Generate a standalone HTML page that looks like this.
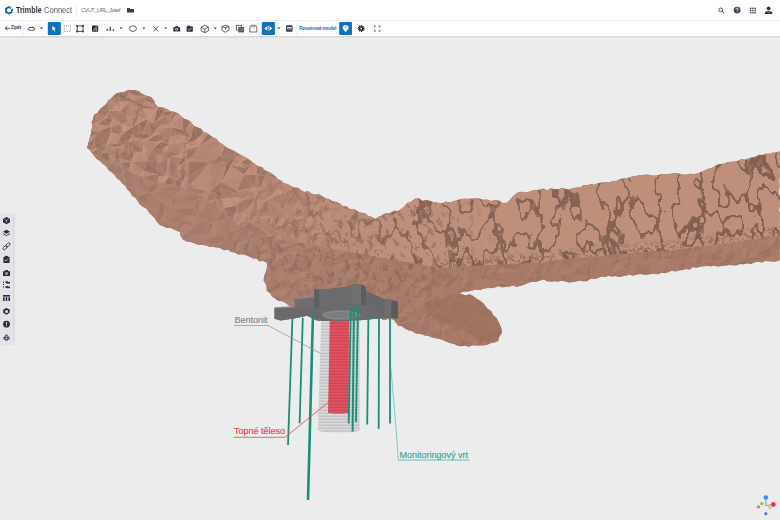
<!DOCTYPE html>
<html><head><meta charset="utf-8">
<style>
html,body{margin:0;padding:0;width:780px;height:520px;overflow:hidden;background:#ececec;font-family:"Liberation Sans",sans-serif;}
#hdr{position:absolute;left:0;top:0;width:780px;height:20px;background:#fff;}
#tb{position:absolute;left:0;top:20px;width:780px;height:16px;background:#fff;border-top:1px solid #f0f0f2;box-sizing:border-box;}
#shadow{position:absolute;left:0;top:36px;width:780px;height:2px;background:linear-gradient(#d4d4d6,#e6e6e6);}
.abs{position:absolute;}
.txt{position:absolute;white-space:nowrap;line-height:1;}
#side{position:absolute;left:0;top:214px;width:13px;height:130px;background:#e3e3e8;box-shadow:1px 0 2px rgba(0,0,0,0.12);}
svg{position:absolute;left:0;top:0;}
</style></head><body>
<div id="view" class="abs" style="left:0;top:0;width:780px;height:520px;">
<svg width="780" height="520" viewBox="0 0 780 520">
  <defs>
  <clipPath id="cSil"><polygon points="87.0,148.0 88.0,144.4 89.1,140.8 90.0,137.1 91.1,133.5 91.4,129.8 92.6,126.2 91.4,122.1 93.1,118.7 94.0,115.0 97.7,112.7 100.0,109.0 103.1,106.6 106.3,104.3 107.9,100.4 111.3,98.3 113.8,95.3 117.0,93.0 120.6,92.5 124.2,92.0 127.6,90.1 131.3,90.0 135.0,90.0 139.2,91.3 142.6,94.3 146.8,95.8 151.0,97.0 153.9,99.9 155.1,104.0 158.0,107.0 162.7,107.2 167.0,109.0 170.4,111.0 174.4,111.8 178.0,113.3 181.0,116.0 183.8,118.8 187.8,119.7 191.1,121.9 193.4,125.4 196.8,127.3 200.8,128.4 203.2,131.7 207.0,133.0 210.1,135.2 213.0,137.6 216.7,138.8 219.0,142.3 222.4,144.0 225.2,146.6 228.4,148.6 232.0,150.0 235.5,151.6 238.7,153.7 242.2,155.4 245.5,157.3 248.9,159.2 251.9,161.6 255.0,164.0 258.2,166.2 262.2,167.1 264.8,170.3 268.5,171.7 271.9,173.6 275.0,176.0 277.6,178.9 281.0,180.6 284.0,183.0 287.6,184.0 290.8,185.8 294.0,187.6 298.0,187.7 301.0,190.0 304.2,192.0 308.3,191.0 311.3,193.5 314.8,194.7 318.8,194.0 322.0,196.0 325.2,198.2 329.1,199.1 332.4,201.2 336.5,201.7 339.9,203.4 343.0,206.0 346.9,206.5 350.0,209.3 354.2,208.9 357.5,211.2 361.0,212.7 365.0,213.0 367.8,215.8 371.8,216.7 375.0,219.0 378.5,216.7 382.4,215.0 386.0,213.0 390.1,212.9 393.9,210.8 398.0,211.0 401.4,208.7 404.4,206.2 407.0,203.0 411.4,201.4 415.0,198.5 419.0,198.2 422.5,200.9 426.7,199.7 430.4,201.0 434.1,202.2 438.0,202.7 442.1,203.2 446.0,201.5 450.1,202.4 454.0,201.0 457.5,200.1 461.0,199.0 464.7,198.6 468.4,198.7 472.2,198.5 475.9,198.3 479.6,198.5 483.3,199.8 487.0,199.4 490.8,201.1 495.1,200.0 499.2,200.4 502.8,203.1 507.0,202.7 510.2,199.5 513.2,196.1 516.5,193.0 520.3,191.8 524.3,192.0 528.3,191.9 532.1,190.5 536.0,190.0 539.7,189.6 543.3,188.6 547.1,190.3 550.7,188.2 554.5,189.0 558.2,189.5 561.9,187.8 565.6,188.9 569.4,189.2 573.0,188.0 576.6,187.6 580.2,187.3 583.5,185.1 587.2,185.2 590.6,183.9 594.5,184.7 597.8,182.9 601.4,182.6 605.0,182.0 609.0,182.3 612.7,181.3 616.5,180.8 620.0,178.9 623.7,178.2 627.6,178.0 631.2,176.7 635.0,176.0 638.6,175.3 642.2,175.3 645.8,174.5 649.5,174.7 653.2,175.8 656.8,175.5 660.4,174.5 664.0,174.0 667.8,174.0 671.5,173.6 675.2,173.1 679.0,173.5 682.8,174.6 686.5,174.8 690.2,173.7 694.0,174.0 697.9,173.2 701.6,171.7 705.3,170.1 709.0,168.6 712.8,167.4 716.2,165.1 720.0,164.0 723.7,163.7 727.2,162.0 730.9,161.7 734.6,161.6 738.2,160.7 741.7,159.1 745.6,159.7 749.0,158.0 752.5,157.5 755.9,156.6 759.1,154.6 762.8,155.0 766.1,153.6 769.7,153.7 773.1,152.5 776.7,152.5 780.0,151.0 779.7,154.5 779.3,158.0 780.3,161.5 779.7,165.1 779.5,168.6 779.3,172.1 780.3,175.6 779.2,179.1 779.2,182.6 779.6,186.2 779.0,189.7 779.0,193.2 780.0,196.7 779.9,200.2 780.7,203.7 779.3,207.3 779.0,210.8 780.1,214.3 779.6,217.8 779.5,221.3 779.5,224.8 780.7,228.4 779.4,231.9 779.8,235.4 779.6,238.9 780.2,242.4 779.7,245.9 779.4,249.5 779.7,253.0 779.5,256.5 780.0,260.0 776.5,261.4 772.8,261.5 769.1,261.2 765.4,261.1 761.9,262.4 758.1,261.8 754.5,262.3 751.0,263.9 747.3,263.3 743.7,264.2 740.0,264.0 736.4,265.2 732.8,265.3 729.1,265.1 725.5,265.6 721.9,265.9 718.2,266.4 714.6,265.7 710.9,266.2 707.3,265.9 703.6,266.2 700.0,266.6 696.6,267.7 692.9,266.9 689.7,269.4 686.0,269.1 682.6,269.9 679.0,270.2 675.6,271.4 671.9,270.4 668.5,272.0 665.2,273.3 661.5,272.6 658.1,274.3 654.5,274.0 651.0,274.1 647.4,274.8 643.9,274.5 640.3,273.9 636.8,274.4 633.3,275.5 629.7,274.8 626.2,275.4 622.7,276.2 619.2,276.9 615.6,276.1 612.1,276.4 608.5,275.8 605.0,277.0 601.3,276.5 597.9,277.9 594.4,279.0 590.6,278.4 587.4,280.9 583.8,281.2 580.1,280.7 576.5,281.2 573.0,282.0 569.3,282.6 565.7,281.4 562.0,280.6 558.3,281.6 554.7,281.3 551.0,281.5 547.3,281.2 543.7,279.5 540.0,280.4 536.1,281.8 531.7,281.7 527.8,282.9 523.9,284.7 520.0,286.0 516.5,286.7 512.8,285.4 509.3,286.7 505.8,287.1 502.2,287.5 498.6,286.3 495.1,287.6 491.6,288.2 488.0,288.0 484.0,288.6 480.1,290.0 476.0,289.5 472.0,290.5 468.1,291.4 464.0,291.5 459.0,293.3 462.4,294.6 465.9,295.4 469.7,294.3 473.0,296.0 476.6,298.7 480.6,300.9 484.0,304.0 486.8,308.2 491.0,311.0 493.0,315.0 496.5,318.0 498.5,322.0 500.2,325.5 501.6,329.1 502.0,333.0 499.3,336.6 498.5,341.0 495.0,342.5 491.2,343.0 487.6,344.4 484.0,345.4 480.2,345.2 476.3,345.5 472.5,345.3 468.7,346.8 464.8,345.6 461.0,346.3 457.3,345.5 453.8,343.7 450.1,342.9 446.5,341.7 443.0,340.0 439.4,339.0 435.8,338.3 432.1,337.6 428.7,335.9 425.0,335.5 420.7,333.8 416.0,333.5 412.0,331.0 408.3,330.2 405.0,328.4 401.8,326.1 398.0,325.6 394.0,320.0 390.6,318.8 387.0,319.2 383.4,320.0 380.1,317.9 376.6,318.3 373.1,317.6 369.7,317.0 366.2,316.7 362.7,316.7 359.3,315.4 355.7,316.2 352.2,315.8 348.8,314.4 345.2,315.5 341.7,314.9 338.4,313.4 334.7,314.7 331.4,312.6 327.9,312.5 324.4,312.7 320.8,312.7 317.5,311.2 314.0,310.6 310.4,311.9 307.0,310.8 303.5,310.3 300.0,310.0 296.5,308.4 292.8,307.1 289.1,305.8 286.0,303.3 282.7,301.2 278.5,301.1 275.4,298.6 272.1,296.5 270.1,293.0 266.8,291.0 266.7,287.4 265.8,283.9 263.7,280.7 264.0,277.0 265.2,273.5 266.4,269.9 267.2,266.3 266.8,262.5 263.4,261.0 259.4,261.2 256.4,258.4 252.5,258.6 249.2,256.6 245.9,254.9 242.2,254.3 238.3,254.4 235.0,252.5 231.3,251.9 228.0,249.6 224.0,250.2 220.7,248.3 217.0,247.5 213.5,247.1 209.9,247.0 206.5,245.4 203.0,245.0 198.7,244.9 194.8,243.6 190.9,242.0 186.8,241.5 183.0,239.5 180.6,236.1 180.0,232.0 176.7,230.7 173.5,229.2 170.3,227.7 166.4,228.1 163.3,226.3 160.0,225.0 157.0,222.1 154.8,218.6 152.0,215.6 149.1,212.7 147.0,209.1 143.2,207.0 139.9,204.6 137.7,201.0 135.5,197.8 132.0,195.7 130.2,192.1 127.4,189.4 125.5,186.0 122.4,183.6 119.9,180.6 116.8,178.2 114.6,175.0 111.8,172.2 108.4,169.9 106.3,166.3 103.0,164.0 100.4,161.3 97.1,159.2 94.6,156.4 92.1,153.5 90.0,150.3"/></clipPath>
  <clipPath id="cTop"><polygon points="87,148 94,115 100,109 117,93 135,90 151,97 158,107 167,109 181,116 207,133 232,150 255,164 275,176 284,183 301,190 322,196 343,206 365,213 375,219 386,213 398,211 407,203 415,198.5 438,202.7 454,201 461,199 487,199.4 507,202.7 516.5,193 536,190 573,188 605,182 635,176 664,174 694,174 720,164 749,158 780,151 780,235 729,243 673,250 616,254.5 560,260 540,262.4 440,268 360,254 300,242.5 276,239 266,235.4 247,229.6 238,224 218.5,208.5 199,195 180,187.3 169,184 150,181 107,161"/></clipPath>
  <linearGradient id="gMask" x1="0" y1="0" x2="780" y2="0" gradientUnits="userSpaceOnUse">
    <stop offset="0.36" stop-color="#fff" stop-opacity="0.1"/>
    <stop offset="0.52" stop-color="#fff" stop-opacity="0.85"/>
    <stop offset="1" stop-color="#fff" stop-opacity="1"/>
  </linearGradient>
  <linearGradient id="gMaskL" x1="0" y1="0" x2="780" y2="0" gradientUnits="userSpaceOnUse">
    <stop offset="0.3" stop-color="#fff" stop-opacity="1"/>
    <stop offset="0.5" stop-color="#fff" stop-opacity="0"/>
  </linearGradient>
  <mask id="mRight"><rect x="0" y="0" width="780" height="520" fill="url(#gMask)"/></mask>
  <mask id="mLeft"><rect x="0" y="0" width="780" height="520" fill="url(#gMaskL)"/></mask>
  <pattern id="ribs" width="2.6" height="6" patternUnits="userSpaceOnUse" patternTransform="rotate(20)">
    <rect width="2.6" height="6" fill="#a27563"/>
    <rect width="1.1" height="6" fill="#8c6351"/>
  </pattern>
  <filter id="crev" x="0" y="0" width="1" height="1" color-interpolation-filters="sRGB">
    <feTurbulence type="fractalNoise" baseFrequency="0.05 0.03" numOctaves="3" seed="7" result="n"/>
    <feColorMatrix in="n" type="matrix" values="0 0 0 0 0  0 0 0 0 0  0 0 0 0 0  1 0 0 0 0" result="a"/>
    <feComponentTransfer in="a" result="lines">
      <feFuncA type="discrete" tableValues="0 0 0 0 0 0 0 0 0 0 0 0 0 0 0 0 0 0 0 0 0 0.6 0.85 0.85 0 0 0 0 0 0 0 0 0 0 0 0 0 0 0 0 0 0 0 0"/>
    </feComponentTransfer>
    <feFlood flood-color="#775649"/>
    <feComposite in2="lines" operator="in"/>
  </filter>
  <filter id="speck" x="0" y="0" width="1" height="1" color-interpolation-filters="sRGB">
    <feTurbulence type="fractalNoise" baseFrequency="0.16 0.11" numOctaves="3" seed="21" result="n"/>
    <feColorMatrix in="n" type="matrix" values="0 0 0 0 0  0 0 0 0 0  0 0 0 0 0  1 0 0 0 0" result="a"/>
    <feComponentTransfer in="a" result="sp">
      <feFuncA type="discrete" tableValues="0 0 0.5 0.4 0 0 0 0 0 0"/>
    </feComponentTransfer>
    <feFlood flood-color="#7b5b4e"/>
    <feComposite in2="sp" operator="in"/>
  </filter>
  <filter id="speck2" x="0" y="0" width="1" height="1" color-interpolation-filters="sRGB">
    <feTurbulence type="fractalNoise" baseFrequency="0.2 0.25" numOctaves="3" seed="31" result="n"/>
    <feColorMatrix in="n" type="matrix" values="0 0 0 0 0  0 0 0 0 0  0 0 0 0 0  1 0 0 0 0" result="a"/>
    <feComponentTransfer in="a" result="sp">
      <feFuncA type="discrete" tableValues="0 0 0 0.55 0.45 0 0 0 0 0"/>
    </feComponentTransfer>
    <feFlood flood-color="#775649"/>
    <feComposite in2="sp" operator="in"/>
  </filter>
  <radialGradient id="gSpeck" cx="360" cy="235" r="110" gradientUnits="userSpaceOnUse" gradientTransform="translate(360 235) scale(1.3 0.8) translate(-360 -235)">
    <stop offset="0" stop-color="#fff" stop-opacity="1"/>
    <stop offset="0.6" stop-color="#fff" stop-opacity="0.8"/>
    <stop offset="1" stop-color="#fff" stop-opacity="0"/>
  </radialGradient>
  <filter id="blur3"><feGaussianBlur stdDeviation="2.5"/></filter>
  <mask id="mRim"><polyline points="440,264 540,258 560,256 616,250.5 673,246 729,239 780,231" fill="none" stroke="#fff" stroke-width="9" filter="url(#blur3)"/></mask>
  <mask id="mSpeck"><rect x="0" y="0" width="780" height="520" fill="url(#gSpeck)"/></mask>
  <filter id="facet" x="0" y="0" width="1" height="1" color-interpolation-filters="sRGB">
    <feTurbulence type="fractalNoise" baseFrequency="0.05" numOctaves="2" seed="11" result="n"/>
    <feColorMatrix in="n" type="matrix" values="1 0 0 0 0  1 0 0 0 0  1 0 0 0 0  0 0 0 0 1"/>
    <feComponentTransfer>
      <feFuncR type="discrete" tableValues="0.62 0.62 0.64 0.69 0.74 0.78 0.8 0.8"/>
      <feFuncG type="discrete" tableValues="0.44 0.44 0.46 0.51 0.56 0.6 0.62 0.62"/>
      <feFuncB type="discrete" tableValues="0.36 0.36 0.38 0.43 0.47 0.51 0.53 0.53"/>
    </feComponentTransfer>
  </filter>
  <filter id="rough" x="-0.02" y="-0.05" width="1.04" height="1.1" color-interpolation-filters="sRGB">
    <feTurbulence type="turbulence" baseFrequency="0.25" numOctaves="2" seed="4" result="t"/>
    <feDisplacementMap in="SourceGraphic" in2="t" scale="3.5" xChannelSelector="R" yChannelSelector="G"/>
  </filter>
  <filter id="mesh" x="0" y="0" width="1" height="1" color-interpolation-filters="sRGB">
    <feTurbulence type="fractalNoise" baseFrequency="0.25 0.7" numOctaves="2" seed="3" result="n"/>
    <feColorMatrix in="n" type="matrix" values="1 0 0 0 0  1 0 0 0 0  1 0 0 0 0  0 0 0 0 1"/>
    <feComponentTransfer>
      <feFuncR type="linear" slope="0.5" intercept="0.4"/>
      <feFuncG type="linear" slope="0.4" intercept="0.28"/>
      <feFuncB type="linear" slope="0.35" intercept="0.23"/>
    </feComponentTransfer>
  </filter>
</defs>
  <!-- terrain silhouette -->
  <polygon fill="#a57865" points="87.0,148.0 88.0,144.4 89.1,140.8 90.0,137.1 91.1,133.5 91.4,129.8 92.6,126.2 91.4,122.1 93.1,118.7 94.0,115.0 97.7,112.7 100.0,109.0 103.1,106.6 106.3,104.3 107.9,100.4 111.3,98.3 113.8,95.3 117.0,93.0 120.6,92.5 124.2,92.0 127.6,90.1 131.3,90.0 135.0,90.0 139.2,91.3 142.6,94.3 146.8,95.8 151.0,97.0 153.9,99.9 155.1,104.0 158.0,107.0 162.7,107.2 167.0,109.0 170.4,111.0 174.4,111.8 178.0,113.3 181.0,116.0 183.8,118.8 187.8,119.7 191.1,121.9 193.4,125.4 196.8,127.3 200.8,128.4 203.2,131.7 207.0,133.0 210.1,135.2 213.0,137.6 216.7,138.8 219.0,142.3 222.4,144.0 225.2,146.6 228.4,148.6 232.0,150.0 235.5,151.6 238.7,153.7 242.2,155.4 245.5,157.3 248.9,159.2 251.9,161.6 255.0,164.0 258.2,166.2 262.2,167.1 264.8,170.3 268.5,171.7 271.9,173.6 275.0,176.0 277.6,178.9 281.0,180.6 284.0,183.0 287.6,184.0 290.8,185.8 294.0,187.6 298.0,187.7 301.0,190.0 304.2,192.0 308.3,191.0 311.3,193.5 314.8,194.7 318.8,194.0 322.0,196.0 325.2,198.2 329.1,199.1 332.4,201.2 336.5,201.7 339.9,203.4 343.0,206.0 346.9,206.5 350.0,209.3 354.2,208.9 357.5,211.2 361.0,212.7 365.0,213.0 367.8,215.8 371.8,216.7 375.0,219.0 378.5,216.7 382.4,215.0 386.0,213.0 390.1,212.9 393.9,210.8 398.0,211.0 401.4,208.7 404.4,206.2 407.0,203.0 411.4,201.4 415.0,198.5 419.0,198.2 422.5,200.9 426.7,199.7 430.4,201.0 434.1,202.2 438.0,202.7 442.1,203.2 446.0,201.5 450.1,202.4 454.0,201.0 457.5,200.1 461.0,199.0 464.7,198.6 468.4,198.7 472.2,198.5 475.9,198.3 479.6,198.5 483.3,199.8 487.0,199.4 490.8,201.1 495.1,200.0 499.2,200.4 502.8,203.1 507.0,202.7 510.2,199.5 513.2,196.1 516.5,193.0 520.3,191.8 524.3,192.0 528.3,191.9 532.1,190.5 536.0,190.0 539.7,189.6 543.3,188.6 547.1,190.3 550.7,188.2 554.5,189.0 558.2,189.5 561.9,187.8 565.6,188.9 569.4,189.2 573.0,188.0 576.6,187.6 580.2,187.3 583.5,185.1 587.2,185.2 590.6,183.9 594.5,184.7 597.8,182.9 601.4,182.6 605.0,182.0 609.0,182.3 612.7,181.3 616.5,180.8 620.0,178.9 623.7,178.2 627.6,178.0 631.2,176.7 635.0,176.0 638.6,175.3 642.2,175.3 645.8,174.5 649.5,174.7 653.2,175.8 656.8,175.5 660.4,174.5 664.0,174.0 667.8,174.0 671.5,173.6 675.2,173.1 679.0,173.5 682.8,174.6 686.5,174.8 690.2,173.7 694.0,174.0 697.9,173.2 701.6,171.7 705.3,170.1 709.0,168.6 712.8,167.4 716.2,165.1 720.0,164.0 723.7,163.7 727.2,162.0 730.9,161.7 734.6,161.6 738.2,160.7 741.7,159.1 745.6,159.7 749.0,158.0 752.5,157.5 755.9,156.6 759.1,154.6 762.8,155.0 766.1,153.6 769.7,153.7 773.1,152.5 776.7,152.5 780.0,151.0 779.7,154.5 779.3,158.0 780.3,161.5 779.7,165.1 779.5,168.6 779.3,172.1 780.3,175.6 779.2,179.1 779.2,182.6 779.6,186.2 779.0,189.7 779.0,193.2 780.0,196.7 779.9,200.2 780.7,203.7 779.3,207.3 779.0,210.8 780.1,214.3 779.6,217.8 779.5,221.3 779.5,224.8 780.7,228.4 779.4,231.9 779.8,235.4 779.6,238.9 780.2,242.4 779.7,245.9 779.4,249.5 779.7,253.0 779.5,256.5 780.0,260.0 776.5,261.4 772.8,261.5 769.1,261.2 765.4,261.1 761.9,262.4 758.1,261.8 754.5,262.3 751.0,263.9 747.3,263.3 743.7,264.2 740.0,264.0 736.4,265.2 732.8,265.3 729.1,265.1 725.5,265.6 721.9,265.9 718.2,266.4 714.6,265.7 710.9,266.2 707.3,265.9 703.6,266.2 700.0,266.6 696.6,267.7 692.9,266.9 689.7,269.4 686.0,269.1 682.6,269.9 679.0,270.2 675.6,271.4 671.9,270.4 668.5,272.0 665.2,273.3 661.5,272.6 658.1,274.3 654.5,274.0 651.0,274.1 647.4,274.8 643.9,274.5 640.3,273.9 636.8,274.4 633.3,275.5 629.7,274.8 626.2,275.4 622.7,276.2 619.2,276.9 615.6,276.1 612.1,276.4 608.5,275.8 605.0,277.0 601.3,276.5 597.9,277.9 594.4,279.0 590.6,278.4 587.4,280.9 583.8,281.2 580.1,280.7 576.5,281.2 573.0,282.0 569.3,282.6 565.7,281.4 562.0,280.6 558.3,281.6 554.7,281.3 551.0,281.5 547.3,281.2 543.7,279.5 540.0,280.4 536.1,281.8 531.7,281.7 527.8,282.9 523.9,284.7 520.0,286.0 516.5,286.7 512.8,285.4 509.3,286.7 505.8,287.1 502.2,287.5 498.6,286.3 495.1,287.6 491.6,288.2 488.0,288.0 484.0,288.6 480.1,290.0 476.0,289.5 472.0,290.5 468.1,291.4 464.0,291.5 459.0,293.3 462.4,294.6 465.9,295.4 469.7,294.3 473.0,296.0 476.6,298.7 480.6,300.9 484.0,304.0 486.8,308.2 491.0,311.0 493.0,315.0 496.5,318.0 498.5,322.0 500.2,325.5 501.6,329.1 502.0,333.0 499.3,336.6 498.5,341.0 495.0,342.5 491.2,343.0 487.6,344.4 484.0,345.4 480.2,345.2 476.3,345.5 472.5,345.3 468.7,346.8 464.8,345.6 461.0,346.3 457.3,345.5 453.8,343.7 450.1,342.9 446.5,341.7 443.0,340.0 439.4,339.0 435.8,338.3 432.1,337.6 428.7,335.9 425.0,335.5 420.7,333.8 416.0,333.5 412.0,331.0 408.3,330.2 405.0,328.4 401.8,326.1 398.0,325.6 394.0,320.0 390.6,318.8 387.0,319.2 383.4,320.0 380.1,317.9 376.6,318.3 373.1,317.6 369.7,317.0 366.2,316.7 362.7,316.7 359.3,315.4 355.7,316.2 352.2,315.8 348.8,314.4 345.2,315.5 341.7,314.9 338.4,313.4 334.7,314.7 331.4,312.6 327.9,312.5 324.4,312.7 320.8,312.7 317.5,311.2 314.0,310.6 310.4,311.9 307.0,310.8 303.5,310.3 300.0,310.0 296.5,308.4 292.8,307.1 289.1,305.8 286.0,303.3 282.7,301.2 278.5,301.1 275.4,298.6 272.1,296.5 270.1,293.0 266.8,291.0 266.7,287.4 265.8,283.9 263.7,280.7 264.0,277.0 265.2,273.5 266.4,269.9 267.2,266.3 266.8,262.5 263.4,261.0 259.4,261.2 256.4,258.4 252.5,258.6 249.2,256.6 245.9,254.9 242.2,254.3 238.3,254.4 235.0,252.5 231.3,251.9 228.0,249.6 224.0,250.2 220.7,248.3 217.0,247.5 213.5,247.1 209.9,247.0 206.5,245.4 203.0,245.0 198.7,244.9 194.8,243.6 190.9,242.0 186.8,241.5 183.0,239.5 180.6,236.1 180.0,232.0 176.7,230.7 173.5,229.2 170.3,227.7 166.4,228.1 163.3,226.3 160.0,225.0 157.0,222.1 154.8,218.6 152.0,215.6 149.1,212.7 147.0,209.1 143.2,207.0 139.9,204.6 137.7,201.0 135.5,197.8 132.0,195.7 130.2,192.1 127.4,189.4 125.5,186.0 122.4,183.6 119.9,180.6 116.8,178.2 114.6,175.0 111.8,172.2 108.4,169.9 106.3,166.3 103.0,164.0 100.4,161.3 97.1,159.2 94.6,156.4 92.1,153.5 90.0,150.3"/>
  <g clip-path="url(#cSil)" stroke="#c49c8a" stroke-width="0.3" stroke-opacity="0.4"><path d="M93,153L100,166L93,153z" fill="#a17869"/><path d="M778,256L781,252L779,261z" fill="#a17564"/><path d="M93,153L108,161L100,166z" fill="#a97e6e"/><path d="M746,267L761,260L779,261z" fill="#a77968"/><path d="M130,169L120,165L93,153z" fill="#ab7f6f"/><path d="M120,165L108,161L93,153z" fill="#a07768"/><path d="M127,168L120,165L130,169z" fill="#aa7e6e"/><path d="M714,269L698,271L702,263z" fill="#ab7c6a"/><path d="M714,269L746,267L698,271z" fill="#9a7060"/><path d="M771,257L778,256L779,261z" fill="#a77968"/><path d="M761,260L771,257L779,261z" fill="#ad7d6c"/><path d="M120,165L116,166L108,161z" fill="#a47a6a"/><path d="M204,197L188,189L171,180z" fill="#a87d6d"/><path d="M208,201L204,197L224,208z" fill="#ab7f6f"/><path d="M571,256L525,260L489,262z" fill="#ad7e6c"/><path d="M577,255L571,256L593,253z" fill="#9a7060"/><path d="M746,267L728,266L746,260z" fill="#9b7161"/><path d="M714,269L728,266L746,267z" fill="#ab7d6b"/><path d="M686,272L695,267L698,271z" fill="#a27665"/><path d="M620,250L598,254L593,253z" fill="#9a7060"/><path d="M498,338L500,337L492,344z" fill="#af7f6d"/><path d="M772,240L771,246L769,243z" fill="#ae7f6d"/><path d="M771,246L770,247L769,243z" fill="#ae7f6d"/><path d="M749,261L761,260L746,267z" fill="#a37766"/><path d="M749,261L757,257L761,260z" fill="#9e7262"/><path d="M749,261L746,267L746,260z" fill="#9a7060"/><path d="M778,236L776,234L783,235z" fill="#ab7c6b"/><path d="M776,234L778,236L772,240z" fill="#ae7f6d"/><path d="M781,252L778,236L783,235z" fill="#9c7262"/><path d="M771,246L778,236L781,252z" fill="#a17564"/><path d="M778,236L771,246L772,240z" fill="#ae7f6d"/><path d="M659,248L620,250L688,245z" fill="#ac7d6b"/><path d="M116,166L104,168L108,161z" fill="#aa7e6e"/><path d="M159,182L143,173L171,180z" fill="#ad8170"/><path d="M460,347L464,339L467,349z" fill="#9e7262"/><path d="M348,249L339,247L352,249z" fill="#ac7e6d"/><path d="M197,195L188,189L204,197z" fill="#a17869"/><path d="M208,201L204,199L204,197z" fill="#ac806f"/><path d="M537,265L525,260L541,260z" fill="#a67867"/><path d="M525,260L547,259L541,260z" fill="#a97a69"/><path d="M547,259L525,260L571,256z" fill="#aa7c6a"/><path d="M537,283L535,285L532,281z" fill="#a57867"/><path d="M535,285L537,283L558,284z" fill="#9a7060"/><path d="M520,281L535,285L514,290z" fill="#a67968"/><path d="M535,285L520,281L532,281z" fill="#a87a69"/><path d="M537,265L532,267L525,260z" fill="#a77a68"/><path d="M693,248L685,247L688,245z" fill="#aa7b6a"/><path d="M685,247L693,248L690,254z" fill="#9f7363"/><path d="M642,275L660,274L627,279z" fill="#af7f6d"/><path d="M686,263L695,267L686,272z" fill="#a97b69"/><path d="M606,280L615,280L596,282z" fill="#ab7c6b"/><path d="M615,280L606,280L613,280z" fill="#9a7060"/><path d="M771,257L771,248L778,256z" fill="#a67867"/><path d="M770,247L771,248L771,257z" fill="#9a7060"/><path d="M778,256L771,248L781,252z" fill="#a87a69"/><path d="M771,248L771,246L781,252z" fill="#9b7161"/><path d="M771,248L770,247L771,246z" fill="#9a7060"/><path d="M770,247L762,243L769,243z" fill="#a87a69"/><path d="M628,250L659,248L637,251z" fill="#ad7e6c"/><path d="M659,248L628,250L620,250z" fill="#ad7e6c"/><path d="M108,161L102,165L100,166z" fill="#9e7566"/><path d="M102,165L104,168L100,166z" fill="#ac806f"/><path d="M104,168L102,165L108,161z" fill="#b38574"/><path d="M124,173L127,168L130,169z" fill="#9e7566"/><path d="M143,173L139,178L130,169z" fill="#ae8271"/><path d="M156,223L178,232L180,241z" fill="#ad8070"/><path d="M288,237L267,238L248,227z" fill="#a97d6d"/><path d="M422,282L420,280L429,281z" fill="#9b7161"/><path d="M471,264L448,264L489,262z" fill="#a57867"/><path d="M419,336L444,342L467,349z" fill="#9a7060"/><path d="M444,342L460,347L467,349z" fill="#9a7060"/><path d="M453,295L446,307L441,299z" fill="#a77968"/><path d="M462,333L464,339L457,336z" fill="#a77968"/><path d="M473,348L480,347L489,345z" fill="#ab7c6b"/><path d="M525,260L508,262L489,262z" fill="#ab7c6b"/><path d="M511,285L513,271L518,278z" fill="#a37665"/><path d="M338,247L339,247L338,248z" fill="#a77b6b"/><path d="M339,247L338,247L312,241z" fill="#9c7364"/><path d="M170,182L159,182L171,180z" fill="#b08372"/><path d="M170,182L170,187L159,182z" fill="#ac8070"/><path d="M172,184L170,182L171,180z" fill="#a07768"/><path d="M170,182L172,184L170,187z" fill="#9f7667"/><path d="M188,195L197,195L195,197z" fill="#af8271"/><path d="M197,195L188,195L188,189z" fill="#aa7f6f"/><path d="M567,285L569,285L558,284z" fill="#aa7c6a"/><path d="M567,285L569,283L569,285z" fill="#a37766"/><path d="M577,255L572,256L571,256z" fill="#9a7060"/><path d="M591,257L577,255L593,253z" fill="#aa7b6a"/><path d="M598,254L591,257L593,253z" fill="#9c7161"/><path d="M560,261L547,259L571,256z" fill="#9f7363"/><path d="M542,262L537,265L541,260z" fill="#9a7060"/><path d="M547,259L542,262L541,260z" fill="#9a7060"/><path d="M509,286L511,285L514,290z" fill="#a47766"/><path d="M520,281L519,282L518,278z" fill="#a47766"/><path d="M519,282L511,285L518,278z" fill="#a47766"/><path d="M519,282L520,281L514,290z" fill="#ac7d6b"/><path d="M511,285L519,282L514,290z" fill="#aa7c6a"/><path d="M520,281L526,279L532,281z" fill="#9f7363"/><path d="M526,279L520,281L518,278z" fill="#a47766"/><path d="M720,241L706,245L688,245z" fill="#9a7060"/><path d="M714,252L704,248L706,245z" fill="#ad7d6c"/><path d="M720,241L714,252L706,245z" fill="#ae7e6c"/><path d="M728,266L736,253L746,260z" fill="#a87a69"/><path d="M697,266L696,258L702,263z" fill="#9f7463"/><path d="M698,271L697,266L702,263z" fill="#a17564"/><path d="M695,267L697,266L698,271z" fill="#a27665"/><path d="M706,245L699,246L688,245z" fill="#ab7c6b"/><path d="M699,246L693,248L688,245z" fill="#ac7d6b"/><path d="M704,248L699,246L706,245z" fill="#a97b69"/><path d="M699,246L696,252L693,248z" fill="#9e7363"/><path d="M686,263L695,261L695,267z" fill="#a67968"/><path d="M695,261L697,266L695,267z" fill="#a27665"/><path d="M697,266L695,261L696,258z" fill="#a37666"/><path d="M606,280L610,278L613,280z" fill="#ae7e6c"/><path d="M612,253L598,254L620,250z" fill="#ae7e6c"/><path d="M612,253L614,260L598,254z" fill="#a37666"/><path d="M764,241L772,240L769,243z" fill="#ae7e6c"/><path d="M762,243L764,241L769,243z" fill="#a97b6a"/><path d="M764,241L776,234L772,240z" fill="#ae7f6d"/><path d="M751,254L756,254L757,257z" fill="#ac7d6b"/><path d="M756,254L751,254L754,244z" fill="#a87a69"/><path d="M756,254L762,243L770,247z" fill="#a67867"/><path d="M757,257L756,254L761,260z" fill="#a17565"/><path d="M756,254L771,257L761,260z" fill="#a37666"/><path d="M756,254L770,247L771,257z" fill="#9d7262"/><path d="M638,256L635,254L637,251z" fill="#a47766"/><path d="M659,248L644,252L637,251z" fill="#ad7d6c"/><path d="M644,252L638,256L637,251z" fill="#a27665"/><path d="M104,168L116,182L100,166z" fill="#a57b6b"/><path d="M116,182L145,213L100,166z" fill="#a17869"/><path d="M116,182L135,199L145,213z" fill="#ab7f6f"/><path d="M135,199L116,182L123,187z" fill="#ab7f6f"/><path d="M122,173L124,173L123,187z" fill="#ac8070"/><path d="M116,182L122,173L123,187z" fill="#aa7e6e"/><path d="M143,185L139,178L143,173z" fill="#a37a6a"/><path d="M124,173L128,188L123,187z" fill="#ac806f"/><path d="M134,182L124,173L130,169z" fill="#a57a6b"/><path d="M139,178L134,182L130,169z" fill="#ac8070"/><path d="M134,182L128,188L124,173z" fill="#a57b6b"/><path d="M143,185L134,182L139,178z" fill="#a77d6d"/><path d="M143,185L150,186L145,187z" fill="#9e7566"/><path d="M159,182L150,186L143,173z" fill="#ad8170"/><path d="M150,186L143,185L143,173z" fill="#ae8171"/><path d="M170,187L159,190L159,182z" fill="#ad8171"/><path d="M175,227L172,223L185,220z" fill="#ad8170"/><path d="M148,215L156,223L145,213z" fill="#a47a6a"/><path d="M280,267L287,275L285,279z" fill="#aa7e6e"/><path d="M424,262L416,261L391,256z" fill="#9b7161"/><path d="M403,279L412,280L410,289z" fill="#aa7c6b"/><path d="M448,264L438,265L429,263z" fill="#a97b6a"/><path d="M450,341L451,334L457,336z" fill="#a67968"/><path d="M444,342L450,341L460,347z" fill="#a57867"/><path d="M437,339L444,342L419,336z" fill="#a77a69"/><path d="M437,339L443,333L444,342z" fill="#a67968"/><path d="M443,333L437,339L440,330z" fill="#9b7161"/><path d="M447,327L456,327L451,334z" fill="#a67867"/><path d="M451,334L458,331L457,336z" fill="#aa7b6a"/><path d="M456,327L458,331L451,334z" fill="#9d7262"/><path d="M458,331L462,333L457,336z" fill="#a57867"/><path d="M449,292L453,295L441,299z" fill="#a87a69"/><path d="M457,291L466,297L457,299z" fill="#a27665"/><path d="M466,297L457,291L464,287z" fill="#a27665"/><path d="M476,265L471,264L489,262z" fill="#a37666"/><path d="M485,265L476,265L489,262z" fill="#ad7e6c"/><path d="M476,265L485,265L484,275z" fill="#a87a69"/><path d="M477,276L476,265L484,275z" fill="#a77968"/><path d="M485,280L491,286L487,291z" fill="#ab7d6b"/><path d="M479,292L485,280L487,291z" fill="#a97b69"/><path d="M485,280L477,276L484,275z" fill="#9c7161"/><path d="M508,262L496,263L489,262z" fill="#9a7060"/><path d="M496,263L508,262L501,267z" fill="#9a7060"/><path d="M508,262L518,262L515,266z" fill="#a37666"/><path d="M518,262L508,262L525,260z" fill="#a87a69"/><path d="M504,283L513,271L511,285z" fill="#a67867"/><path d="M509,286L504,283L511,285z" fill="#9a7060"/><path d="M504,283L509,286L491,286z" fill="#9b7161"/><path d="M508,262L512,270L501,267z" fill="#9d7262"/><path d="M512,270L499,273L501,267z" fill="#ad7e6c"/><path d="M499,273L512,270L513,271z" fill="#ae7e6c"/><path d="M512,270L508,262L515,266z" fill="#9e7262"/><path d="M466,297L462,302L457,299z" fill="#ae7f6d"/><path d="M463,266L448,264L471,264z" fill="#9a7060"/><path d="M458,278L457,291L451,286z" fill="#aa7c6a"/><path d="M457,291L458,278L464,287z" fill="#a87a69"/><path d="M319,253L319,246L324,255z" fill="#a67a6a"/><path d="M321,266L319,253L324,255z" fill="#a27767"/><path d="M189,201L188,195L195,197z" fill="#a67c6c"/><path d="M160,200L174,196L171,206z" fill="#ad8070"/><path d="M172,223L174,214L185,220z" fill="#a67b6b"/><path d="M174,214L180,212L185,220z" fill="#aa7e6e"/><path d="M168,220L174,214L172,223z" fill="#a77c6c"/><path d="M180,208L174,214L171,206z" fill="#ac8070"/><path d="M174,214L180,208L180,212z" fill="#a27969"/><path d="M591,257L579,258L577,255z" fill="#ab7c6b"/><path d="M579,258L572,256L577,255z" fill="#aa7c6a"/><path d="M572,256L579,258L578,263z" fill="#aa7b6a"/><path d="M560,261L572,269L563,271z" fill="#a57867"/><path d="M572,269L571,272L563,271z" fill="#ad7d6c"/><path d="M572,269L560,261L571,256z" fill="#a17565"/><path d="M572,256L572,269L571,256z" fill="#9a7060"/><path d="M572,269L578,263L575,268z" fill="#ae7e6c"/><path d="M572,269L572,256L578,263z" fill="#a87a69"/><path d="M551,266L560,261L553,267z" fill="#9a7060"/><path d="M560,261L551,266L547,259z" fill="#a27665"/><path d="M526,279L536,277L532,281z" fill="#9a7060"/><path d="M536,277L537,283L532,281z" fill="#a47767"/><path d="M536,277L545,273L537,283z" fill="#9d7262"/><path d="M526,279L521,265L532,267z" fill="#a67968"/><path d="M532,267L521,265L525,260z" fill="#a67968"/><path d="M518,262L521,265L515,266z" fill="#9b7161"/><path d="M521,265L518,262L525,260z" fill="#9b7060"/><path d="M751,254L749,247L754,244z" fill="#a67867"/><path d="M748,257L749,261L746,260z" fill="#9a7060"/><path d="M732,240L720,241L738,238z" fill="#a77968"/><path d="M728,252L732,240L736,253z" fill="#a77a68"/><path d="M736,253L740,252L746,260z" fill="#a87a69"/><path d="M740,252L736,253L742,248z" fill="#9c7161"/><path d="M693,248L694,254L690,254z" fill="#a67867"/><path d="M696,252L694,254L693,248z" fill="#9f7363"/><path d="M694,254L696,252L696,258z" fill="#aa7b6a"/><path d="M703,251L699,246L704,248z" fill="#a47767"/><path d="M703,251L696,252L699,246z" fill="#a47767"/><path d="M696,252L703,251L696,258z" fill="#ab7c6a"/><path d="M696,258L703,251L702,263z" fill="#9f7463"/><path d="M703,251L709,260L702,263z" fill="#a77968"/><path d="M714,252L703,251L704,248z" fill="#aa7c6a"/><path d="M703,251L714,252L709,260z" fill="#a67968"/><path d="M651,264L650,270L644,265z" fill="#a27665"/><path d="M651,264L656,272L650,270z" fill="#aa7c6a"/><path d="M683,259L685,247L690,254z" fill="#9f7363"/><path d="M686,263L683,259L690,254z" fill="#a47766"/><path d="M682,271L686,263L686,272z" fill="#ac7d6b"/><path d="M613,277L610,278L612,272z" fill="#9c7161"/><path d="M610,278L613,277L613,280z" fill="#ab7d6b"/><path d="M613,277L615,280L613,280z" fill="#ac7d6b"/><path d="M613,277L617,279L615,280z" fill="#a77968"/><path d="M632,275L642,275L627,279z" fill="#9a7060"/><path d="M613,273L613,277L612,272z" fill="#a47766"/><path d="M613,277L613,273L617,279z" fill="#9f7463"/><path d="M626,273L623,278L622,268z" fill="#a57867"/><path d="M623,278L613,273L622,268z" fill="#a57867"/><path d="M613,273L623,278L617,279z" fill="#9f7463"/><path d="M615,280L623,278L627,279z" fill="#9a7060"/><path d="M617,279L623,278L615,280z" fill="#ad7e6c"/><path d="M616,258L612,253L620,250z" fill="#a47766"/><path d="M612,253L616,258L614,260z" fill="#a27665"/><path d="M614,260L616,264L612,272z" fill="#9a7060"/><path d="M616,264L613,273L612,272z" fill="#af7f6d"/><path d="M613,273L616,264L622,268z" fill="#af7f6d"/><path d="M764,241L754,237L776,234z" fill="#a17564"/><path d="M758,243L756,254L754,244z" fill="#a47766"/><path d="M756,254L758,243L762,243z" fill="#ac7d6b"/><path d="M758,243L764,241L762,243z" fill="#ac7d6c"/><path d="M628,250L628,256L620,250z" fill="#ad7e6c"/><path d="M655,251L644,252L659,248z" fill="#a67968"/><path d="M122,169L120,165L127,168z" fill="#a17869"/><path d="M124,173L122,169L127,168z" fill="#b38574"/><path d="M122,173L122,169L124,173z" fill="#b18373"/><path d="M114,174L122,173L116,182z" fill="#ae8171"/><path d="M114,174L104,168L116,166z" fill="#a3796a"/><path d="M114,174L116,182L104,168z" fill="#a67b6c"/><path d="M134,182L135,190L128,188z" fill="#aa7f6e"/><path d="M135,199L146,204L145,213z" fill="#ab7f6f"/><path d="M146,204L148,215L145,213z" fill="#a67b6c"/><path d="M146,204L147,197L160,200z" fill="#aa7e6e"/><path d="M156,185L150,186L159,182z" fill="#a17869"/><path d="M150,186L156,185L156,190z" fill="#9e7566"/><path d="M159,190L156,185L159,182z" fill="#ac806f"/><path d="M156,185L159,190L156,190z" fill="#a77c6d"/><path d="M147,197L154,194L160,200z" fill="#ab7f6f"/><path d="M204,209L204,199L208,201z" fill="#b08372"/><path d="M211,211L204,209L208,201z" fill="#a77c6c"/><path d="M185,224L175,227L185,220z" fill="#9e7566"/><path d="M175,227L185,224L178,232z" fill="#a77d6d"/><path d="M162,217L168,220L162,221z" fill="#b28473"/><path d="M156,223L162,217L162,221z" fill="#b08372"/><path d="M175,227L166,222L172,223z" fill="#ab7f6f"/><path d="M168,220L166,222L162,221z" fill="#b28473"/><path d="M166,222L168,220L172,223z" fill="#ac8070"/><path d="M166,222L175,227L178,232z" fill="#a87d6d"/><path d="M166,222L156,223L162,221z" fill="#b18473"/><path d="M166,222L178,232L156,223z" fill="#a77c6c"/><path d="M240,225L235,218L248,227z" fill="#ab7f6f"/><path d="M278,302L284,305L274,301z" fill="#ae8170"/><path d="M291,296L291,288L293,289z" fill="#a07667"/><path d="M291,288L291,296L282,298z" fill="#a67b6b"/><path d="M265,285L264,287L261,280z" fill="#9e7566"/><path d="M327,257L321,266L324,255z" fill="#aa7d6c"/><path d="M271,296L272,298L264,287z" fill="#9d7565"/><path d="M262,263L267,266L262,276z" fill="#a17768"/><path d="M233,245L235,252L227,253z" fill="#aa7e6e"/><path d="M236,236L232,237L232,236z" fill="#b18473"/><path d="M220,252L221,244L227,253z" fill="#a57b6b"/><path d="M221,244L233,245L227,253z" fill="#a57b6b"/><path d="M391,280L402,275L403,279z" fill="#a47867"/><path d="M378,263L391,261L387,280z" fill="#a87b6a"/><path d="M391,261L391,280L387,280z" fill="#a37867"/><path d="M402,275L391,261L403,268z" fill="#a37767"/><path d="M391,280L391,261L402,275z" fill="#a67969"/><path d="M403,268L403,265L406,271z" fill="#a47867"/><path d="M403,265L412,262L406,271z" fill="#ad7e6d"/><path d="M391,261L403,265L403,268z" fill="#9b7162"/><path d="M424,262L420,269L416,261z" fill="#a87a69"/><path d="M403,274L403,268L406,271z" fill="#a87b6a"/><path d="M403,274L402,275L403,268z" fill="#9b7162"/><path d="M402,275L403,274L403,279z" fill="#9b7162"/><path d="M412,280L403,274L406,271z" fill="#a07565"/><path d="M403,274L412,280L403,279z" fill="#ad7f6d"/><path d="M422,282L413,285L420,280z" fill="#9b7161"/><path d="M412,280L413,285L410,289z" fill="#a57868"/><path d="M442,268L438,265L448,264z" fill="#ad7e6c"/><path d="M438,265L442,268L440,269z" fill="#aa7c6b"/><path d="M442,268L448,264L449,265z" fill="#9a7060"/><path d="M430,270L438,265L440,269z" fill="#ab7d6b"/><path d="M438,265L430,270L429,263z" fill="#a97b6a"/><path d="M459,344L450,341L457,336z" fill="#a97b6a"/><path d="M450,341L459,344L460,347z" fill="#a07464"/><path d="M464,339L459,344L457,336z" fill="#a67968"/><path d="M459,344L464,339L460,347z" fill="#9c7161"/><path d="M456,311L456,321L447,316z" fill="#a37666"/><path d="M463,317L456,321L456,311z" fill="#a47766"/><path d="M456,321L463,317L463,326z" fill="#a57867"/><path d="M462,302L457,303L457,299z" fill="#ad7e6c"/><path d="M457,303L462,302L463,304z" fill="#a37666"/><path d="M445,331L447,327L451,334z" fill="#a47766"/><path d="M463,331L458,331L456,327z" fill="#9f7463"/><path d="M436,289L443,288L441,299z" fill="#ab7d6b"/><path d="M443,288L449,292L441,299z" fill="#a97b6a"/><path d="M449,292L443,288L451,286z" fill="#a97b6a"/><path d="M455,292L449,292L451,286z" fill="#a87a69"/><path d="M457,291L455,292L451,286z" fill="#a97b6a"/><path d="M449,292L455,292L453,295z" fill="#a87a69"/><path d="M455,292L457,291L457,299z" fill="#a67867"/><path d="M442,282L436,277L440,269z" fill="#9f7463"/><path d="M436,277L430,270L440,269z" fill="#a47867"/><path d="M441,283L436,277L442,282z" fill="#9f7464"/><path d="M423,287L422,282L429,281z" fill="#ae7f6d"/><path d="M413,285L419,290L410,289z" fill="#ad7e6d"/><path d="M419,290L413,285L422,282z" fill="#ac7e6c"/><path d="M423,287L419,290L422,282z" fill="#b0806e"/><path d="M434,295L436,289L441,299z" fill="#a97b6a"/><path d="M500,337L502,332L502,332z" fill="#ab7c6b"/><path d="M502,332L500,322L502,332z" fill="#a57867"/><path d="M502,332L496,331L500,322z" fill="#a67867"/><path d="M498,338L495,335L500,337z" fill="#9f7463"/><path d="M495,335L502,332L500,337z" fill="#a87a69"/><path d="M502,332L495,335L496,331z" fill="#a37665"/><path d="M496,331L495,335L493,328z" fill="#ab7c6b"/><path d="M490,324L495,322L493,328z" fill="#aa7b6a"/><path d="M494,316L491,306L500,318z" fill="#a87a69"/><path d="M495,322L494,316L500,318z" fill="#ab7c6b"/><path d="M500,322L500,322L500,318z" fill="#9a7060"/><path d="M500,322L495,322L500,318z" fill="#af7f6d"/><path d="M495,322L500,322L493,328z" fill="#ab7d6b"/><path d="M500,322L496,331L493,328z" fill="#ab7c6a"/><path d="M496,331L500,322L500,322z" fill="#9a7060"/><path d="M490,324L485,321L486,317z" fill="#a37666"/><path d="M463,317L470,321L463,326z" fill="#a27565"/><path d="M470,321L463,317L471,318z" fill="#9e7262"/><path d="M464,287L467,281L472,288z" fill="#9d7262"/><path d="M474,281L471,278L477,276z" fill="#a77a68"/><path d="M485,280L474,281L477,276z" fill="#a67968"/><path d="M467,281L474,281L472,288z" fill="#9d7262"/><path d="M474,281L467,281L471,278z" fill="#a67968"/><path d="M474,281L479,292L472,288z" fill="#ab7c6b"/><path d="M474,281L485,280L479,292z" fill="#aa7b6a"/><path d="M471,278L472,274L477,276z" fill="#a47766"/><path d="M472,274L476,265L477,276z" fill="#a37666"/><path d="M487,275L485,280L484,275z" fill="#9a7060"/><path d="M499,276L504,283L499,280z" fill="#9e7363"/><path d="M499,276L499,273L513,271z" fill="#a27665"/><path d="M504,283L499,276L513,271z" fill="#a77968"/><path d="M488,263L485,265L489,262z" fill="#af7f6d"/><path d="M485,265L488,270L484,275z" fill="#9d7262"/><path d="M488,263L488,270L485,265z" fill="#9d7262"/><path d="M492,269L495,271L488,274z" fill="#af7f6d"/><path d="M495,271L499,276L488,274z" fill="#a07564"/><path d="M499,276L495,271L499,273z" fill="#a17565"/><path d="M496,263L495,271L492,269z" fill="#ae7e6d"/><path d="M496,263L491,262L489,262z" fill="#9a7060"/><path d="M491,262L496,263L492,269z" fill="#ab7c6b"/><path d="M504,283L497,281L499,280z" fill="#ac7d6c"/><path d="M497,281L504,283L491,286z" fill="#ae7f6d"/><path d="M497,281L499,276L499,280z" fill="#9a7060"/><path d="M499,276L497,281L488,274z" fill="#a17565"/><path d="M497,281L487,275L488,274z" fill="#a27665"/><path d="M485,280L497,281L491,286z" fill="#ab7c6b"/><path d="M487,275L497,281L485,280z" fill="#a47766"/><path d="M479,292L472,288L472,288z" fill="#a87a69"/><path d="M471,293L472,288L479,292z" fill="#a97b69"/><path d="M448,264L461,267L449,265z" fill="#9a7060"/><path d="M463,266L461,267L448,264z" fill="#a67867"/><path d="M463,271L461,267L463,266z" fill="#a07464"/><path d="M454,277L458,278L451,286z" fill="#9a7060"/><path d="M454,277L442,268L449,265z" fill="#a57867"/><path d="M383,255L369,260L359,254z" fill="#a47868"/><path d="M376,260L383,255L378,263z" fill="#ac7e6d"/><path d="M383,255L376,260L369,260z" fill="#a77a6a"/><path d="M359,254L357,259L352,249z" fill="#a27767"/><path d="M339,254L335,251L338,248z" fill="#af8170"/><path d="M335,251L339,254L332,261z" fill="#ad806f"/><path d="M381,279L378,263L387,280z" fill="#a97b6b"/><path d="M381,279L379,279L378,263z" fill="#a17666"/><path d="M371,262L376,260L378,263z" fill="#ac7e6d"/><path d="M369,260L371,262L370,262z" fill="#a77a6a"/><path d="M376,260L371,262L369,260z" fill="#a87b6a"/><path d="M312,279L311,287L309,283z" fill="#ac7f6e"/><path d="M399,292L403,279L410,289z" fill="#aa7c6b"/><path d="M399,292L399,292L410,289z" fill="#ae7f6e"/><path d="M399,292L399,292L398,291z" fill="#9f7464"/><path d="M291,239L286,244L288,237z" fill="#a87c6c"/><path d="M312,241L291,239L288,237z" fill="#ac7f6e"/><path d="M286,244L290,246L285,247z" fill="#ac7f6e"/><path d="M285,247L290,246L286,253z" fill="#9d7465"/><path d="M291,239L290,246L286,244z" fill="#ab7f6e"/><path d="M290,246L291,239L295,244z" fill="#ac7f6e"/><path d="M290,246L295,244L298,247z" fill="#9d7465"/><path d="M303,249L298,247L312,241z" fill="#b28372"/><path d="M311,248L303,249L312,241z" fill="#b08271"/><path d="M319,246L314,246L312,241z" fill="#aa7d6d"/><path d="M314,246L311,248L312,241z" fill="#ad7f6f"/><path d="M338,247L330,248L312,241z" fill="#ad806f"/><path d="M330,248L319,246L312,241z" fill="#a37868"/><path d="M319,246L330,248L324,255z" fill="#ab7e6d"/><path d="M313,252L319,253L312,256z" fill="#b28372"/><path d="M314,246L313,252L311,248z" fill="#9d7364"/><path d="M319,253L313,252L319,246z" fill="#b18371"/><path d="M313,252L314,246L319,246z" fill="#9d7364"/><path d="M181,209L180,208L182,204z" fill="#b38574"/><path d="M180,208L181,209L180,212z" fill="#aa7e6e"/><path d="M181,203L174,196L188,195z" fill="#ac8070"/><path d="M181,203L189,201L182,204z" fill="#a87d6d"/><path d="M189,201L181,203L188,195z" fill="#a67b6b"/><path d="M174,196L181,189L188,195z" fill="#b18473"/><path d="M169,191L159,190L170,187z" fill="#a3796a"/><path d="M169,191L174,196L160,200z" fill="#aa7e6e"/><path d="M553,274L560,273L557,278z" fill="#a47766"/><path d="M557,278L559,281L558,284z" fill="#a77968"/><path d="M571,272L566,275L563,271z" fill="#ad7e6c"/><path d="M567,285L566,275L569,283z" fill="#a17564"/><path d="M561,278L566,275L567,285z" fill="#a07464"/><path d="M579,258L589,262L578,263z" fill="#a87a69"/><path d="M589,262L579,258L591,257z" fill="#a37766"/><path d="M586,283L589,283L569,285z" fill="#9a7060"/><path d="M575,279L578,274L586,283z" fill="#a97b6a"/><path d="M485,321L478,314L486,317z" fill="#a77968"/><path d="M478,314L482,309L486,317z" fill="#a17565"/><path d="M463,317L470,312L471,318z" fill="#a67867"/><path d="M470,312L478,314L471,318z" fill="#a57867"/><path d="M537,283L550,275L558,284z" fill="#a57867"/><path d="M545,273L550,275L537,283z" fill="#a67867"/><path d="M550,275L557,278L558,284z" fill="#a57867"/><path d="M550,275L553,274L557,278z" fill="#a57867"/><path d="M516,270L526,279L518,278z" fill="#a57867"/><path d="M516,270L521,265L526,279z" fill="#a57867"/><path d="M513,271L516,270L518,278z" fill="#a27665"/><path d="M521,265L516,270L515,266z" fill="#9a7060"/><path d="M516,270L512,270L515,266z" fill="#9c7161"/><path d="M512,270L516,270L513,271z" fill="#ad7d6c"/><path d="M746,252L740,252L742,248z" fill="#af7f6d"/><path d="M749,258L751,254L757,257z" fill="#ae7e6c"/><path d="M749,258L748,257L751,254z" fill="#af7f6d"/><path d="M749,261L749,258L757,257z" fill="#a07464"/><path d="M748,257L749,258L749,261z" fill="#a77968"/><path d="M726,244L728,252L724,250z" fill="#ac7d6b"/><path d="M728,252L726,244L732,240z" fill="#ac7d6b"/><path d="M736,253L742,246L742,248z" fill="#9a7060"/><path d="M732,240L742,246L736,253z" fill="#aa7c6a"/><path d="M742,246L732,240L738,238z" fill="#ac7d6b"/><path d="M718,264L728,266L714,269z" fill="#a67968"/><path d="M720,256L714,252L724,250z" fill="#9f7363"/><path d="M714,252L720,256L709,260z" fill="#9e7362"/><path d="M720,256L719,261L709,260z" fill="#9b7161"/><path d="M695,261L695,259L696,258z" fill="#ae7e6d"/><path d="M695,259L694,254L696,258z" fill="#a67968"/><path d="M694,254L695,259L690,254z" fill="#a67867"/><path d="M695,259L686,263L690,254z" fill="#a77968"/><path d="M695,259L695,261L686,263z" fill="#af7f6d"/><path d="M650,270L656,272L642,275z" fill="#a27665"/><path d="M656,272L656,272L650,270z" fill="#9a7060"/><path d="M642,275L656,272L660,274z" fill="#ad7e6c"/><path d="M656,272L656,272L660,274z" fill="#9a7060"/><path d="M644,252L644,262L638,256z" fill="#a67968"/><path d="M644,263L644,262L644,265z" fill="#a77968"/><path d="M644,262L651,264L644,265z" fill="#ab7c6a"/><path d="M660,274L665,273L686,272z" fill="#ac7d6b"/><path d="M651,264L659,259L656,272z" fill="#a97b69"/><path d="M659,259L663,262L656,272z" fill="#ad7d6c"/><path d="M659,259L651,264L657,259z" fill="#9a7060"/><path d="M621,260L623,261L622,268z" fill="#a97a69"/><path d="M616,264L621,260L622,268z" fill="#aa7c6a"/><path d="M621,260L616,258L620,250z" fill="#a77a68"/><path d="M616,258L621,260L614,260z" fill="#a37766"/><path d="M621,260L616,264L614,260z" fill="#9a7060"/><path d="M628,256L621,260L620,250z" fill="#ac7d6b"/><path d="M621,260L628,256L623,261z" fill="#a17565"/><path d="M628,275L632,275L627,279z" fill="#9a7060"/><path d="M623,278L628,275L627,279z" fill="#9a7060"/><path d="M628,275L623,278L626,273z" fill="#a77968"/><path d="M627,273L628,275L626,273z" fill="#9f7363"/><path d="M748,237L738,238L776,234z" fill="#aa7b6a"/><path d="M754,237L748,237L776,234z" fill="#9a7060"/><path d="M749,247L748,237L754,244z" fill="#a57867"/><path d="M754,238L748,237L754,237z" fill="#a97b69"/><path d="M755,238L754,237L764,241z" fill="#a77a68"/><path d="M758,243L755,238L764,241z" fill="#a57867"/><path d="M755,238L754,238L754,237z" fill="#9a7060"/><path d="M755,238L758,243L754,244z" fill="#a67867"/><path d="M748,237L755,238L754,244z" fill="#a77968"/><path d="M754,238L755,238L748,237z" fill="#9a7060"/><path d="M631,254L628,256L628,250z" fill="#a17564"/><path d="M631,254L628,250L637,251z" fill="#a47767"/><path d="M635,254L631,254L637,251z" fill="#9a7060"/><path d="M648,259L655,251L657,259z" fill="#a67867"/><path d="M655,251L648,259L644,252z" fill="#9e7363"/><path d="M651,264L648,259L657,259z" fill="#ab7c6a"/><path d="M648,259L644,262L644,252z" fill="#9d7262"/><path d="M644,262L648,259L651,264z" fill="#aa7b6a"/><path d="M116,168L122,169L122,173z" fill="#a67c6c"/><path d="M114,174L116,168L122,173z" fill="#a27869"/><path d="M116,168L114,174L116,166z" fill="#ae8171"/><path d="M116,168L116,166L120,165z" fill="#b38574"/><path d="M122,169L116,168L120,165z" fill="#a07768"/><path d="M135,190L129,191L128,188z" fill="#9e7566"/><path d="M139,188L134,182L143,185z" fill="#ac806f"/><path d="M146,204L142,195L147,197z" fill="#9e7566"/><path d="M139,188L142,195L135,190z" fill="#b08372"/><path d="M159,211L158,211L160,200z" fill="#ae8271"/><path d="M158,211L146,204L160,200z" fill="#ab7f6f"/><path d="M146,204L158,211L148,215z" fill="#ad8170"/><path d="M148,215L158,211L156,223z" fill="#ac806f"/><path d="M158,211L162,217L156,223z" fill="#a07768"/><path d="M162,217L158,211L159,211z" fill="#9e7667"/><path d="M159,190L158,192L156,190z" fill="#b38574"/><path d="M158,192L154,194L156,190z" fill="#b38574"/><path d="M219,215L218,220L211,211z" fill="#ac806f"/><path d="M218,220L213,224L211,211z" fill="#a97e6e"/><path d="M231,231L236,236L232,236z" fill="#a27869"/><path d="M204,209L199,208L204,199z" fill="#b08372"/><path d="M206,221L204,209L211,211z" fill="#a67b6c"/><path d="M206,221L213,224L209,224z" fill="#ab7f6f"/><path d="M213,224L206,221L211,211z" fill="#a67b6b"/><path d="M185,224L188,232L178,232z" fill="#b08373"/><path d="M167,209L174,214L168,220z" fill="#ac8070"/><path d="M162,217L167,209L168,220z" fill="#ad8070"/><path d="M174,214L167,209L171,206z" fill="#ad8171"/><path d="M297,292L293,297L293,289z" fill="#ab7e6e"/><path d="M293,297L291,296L293,289z" fill="#a87c6c"/><path d="M291,296L293,297L292,303z" fill="#aa7e6d"/><path d="M297,311L284,305L292,303z" fill="#ae806f"/><path d="M284,305L297,311L274,301z" fill="#af8170"/><path d="M284,305L284,304L292,303z" fill="#b28473"/><path d="M284,304L284,303L292,303z" fill="#9d7465"/><path d="M291,296L284,300L282,298z" fill="#a17768"/><path d="M284,300L291,296L292,303z" fill="#ae8070"/><path d="M284,303L284,300L292,303z" fill="#ac7f6e"/><path d="M278,302L282,303L284,305z" fill="#9f7666"/><path d="M282,303L284,304L284,305z" fill="#a77c6c"/><path d="M284,304L282,303L284,303z" fill="#9d7465"/><path d="M282,303L284,300L284,303z" fill="#ab7e6e"/><path d="M282,303L278,302L282,298z" fill="#aa7e6e"/><path d="M284,300L282,303L282,298z" fill="#a27768"/><path d="M266,277L265,285L261,280z" fill="#a37969"/><path d="M265,285L266,277L271,279z" fill="#af8271"/><path d="M266,277L261,280L262,276z" fill="#b28473"/><path d="M271,273L273,263L280,267z" fill="#a87c6c"/><path d="M292,283L291,288L285,279z" fill="#a97d6c"/><path d="M291,288L292,283L293,289z" fill="#9f7566"/><path d="M304,278L312,279L309,283z" fill="#a67b6b"/><path d="M303,280L304,278L309,283z" fill="#a07667"/><path d="M289,268L287,275L280,267z" fill="#aa7e6d"/><path d="M290,264L289,268L280,267z" fill="#af8170"/><path d="M318,273L321,266L323,272z" fill="#ac7e6e"/><path d="M318,273L314,269L321,266z" fill="#ad7f6f"/><path d="M318,273L312,279L311,270z" fill="#ac7f6e"/><path d="M314,269L318,273L311,270z" fill="#ae806f"/><path d="M319,253L312,261L312,256z" fill="#a37868"/><path d="M328,255L335,251L332,261z" fill="#a17767"/><path d="M327,257L328,255L332,261z" fill="#a17767"/><path d="M328,255L327,257L324,255z" fill="#aa7d6c"/><path d="M330,248L328,255L324,255z" fill="#a67a6a"/><path d="M271,296L274,296L272,298z" fill="#a77c6c"/><path d="M278,302L274,296L282,298z" fill="#9d7465"/><path d="M272,298L274,296L274,301z" fill="#9d7465"/><path d="M274,296L278,302L274,301z" fill="#9d7465"/><path d="M256,256L251,257L256,255z" fill="#b38473"/><path d="M256,256L262,263L251,257z" fill="#a97e6d"/><path d="M237,255L241,257L227,253z" fill="#ae8271"/><path d="M235,252L237,255L227,253z" fill="#9f7667"/><path d="M232,237L236,240L233,245z" fill="#ac806f"/><path d="M236,240L232,237L236,236z" fill="#a97d6d"/><path d="M209,244L221,243L221,244z" fill="#ae8271"/><path d="M403,265L396,258L412,262z" fill="#9f7464"/><path d="M396,258L393,258L391,256z" fill="#a87b6a"/><path d="M396,258L391,261L393,258z" fill="#9b7162"/><path d="M396,258L403,265L391,261z" fill="#a27666"/><path d="M416,261L396,258L391,256z" fill="#a37766"/><path d="M412,262L396,258L416,261z" fill="#aa7c6b"/><path d="M414,268L412,262L416,261z" fill="#9b7161"/><path d="M420,269L414,268L416,261z" fill="#a87a69"/><path d="M412,262L414,268L406,271z" fill="#9b7161"/><path d="M447,281L442,282L440,269z" fill="#a37766"/><path d="M442,268L447,281L440,269z" fill="#a37666"/><path d="M454,277L447,281L442,268z" fill="#a27565"/><path d="M447,281L454,277L451,286z" fill="#9c7262"/><path d="M443,288L447,281L451,286z" fill="#9d7262"/><path d="M424,271L430,270L429,271z" fill="#aa7c6b"/><path d="M424,271L424,262L429,263z" fill="#a17565"/><path d="M430,270L424,271L429,263z" fill="#ab7d6b"/><path d="M436,327L429,320L438,319z" fill="#aa7b6a"/><path d="M441,312L446,307L447,316z" fill="#a97b69"/><path d="M438,319L441,312L447,316z" fill="#aa7b6a"/><path d="M446,307L443,307L441,299z" fill="#a47767"/><path d="M441,312L443,307L446,307z" fill="#ae7e6d"/><path d="M437,339L430,332L440,330z" fill="#a37766"/><path d="M430,332L436,327L440,330z" fill="#ac7d6b"/><path d="M429,320L430,332L423,323z" fill="#a37766"/><path d="M430,332L429,320L436,327z" fill="#a97b6a"/><path d="M456,327L455,325L463,326z" fill="#ac7d6b"/><path d="M455,325L456,321L463,326z" fill="#a67968"/><path d="M447,327L455,325L456,327z" fill="#ad7e6c"/><path d="M460,310L463,317L456,311z" fill="#a67867"/><path d="M460,310L457,303L463,304z" fill="#a47767"/><path d="M457,303L460,310L456,311z" fill="#a57867"/><path d="M450,308L457,303L456,311z" fill="#a37665"/><path d="M446,307L450,308L447,316z" fill="#aa7c6a"/><path d="M450,308L456,311L447,316z" fill="#9f7463"/><path d="M448,335L445,331L451,334z" fill="#a27665"/><path d="M445,331L448,335L443,333z" fill="#9f7363"/><path d="M450,341L448,335L451,334z" fill="#a07464"/><path d="M448,335L450,341L444,342z" fill="#a47766"/><path d="M443,333L448,335L444,342z" fill="#a77968"/><path d="M436,327L440,328L440,330z" fill="#a97b69"/><path d="M440,328L436,327L438,319z" fill="#ac7d6b"/><path d="M445,324L440,328L438,319z" fill="#a57867"/><path d="M445,331L441,329L447,327z" fill="#af7f6d"/><path d="M441,329L445,324L447,327z" fill="#ae7e6c"/><path d="M441,329L443,333L440,330z" fill="#9b7161"/><path d="M441,329L445,331L443,333z" fill="#aa7c6a"/><path d="M440,328L441,329L440,330z" fill="#9b7061"/><path d="M441,329L440,328L445,324z" fill="#9b7061"/><path d="M445,324L446,322L447,327z" fill="#ae7f6d"/><path d="M446,322L455,325L447,327z" fill="#ab7c6b"/><path d="M455,325L446,322L456,321z" fill="#a87a69"/><path d="M456,321L446,322L447,316z" fill="#a07464"/><path d="M446,322L438,319L447,316z" fill="#9e7363"/><path d="M446,322L445,324L438,319z" fill="#a57867"/><path d="M458,331L463,331L462,333z" fill="#a87a69"/><path d="M463,331L463,331L458,331z" fill="#9a7060"/><path d="M474,326L478,314L485,321z" fill="#a87a69"/><path d="M474,326L470,321L471,318z" fill="#a77a68"/><path d="M478,314L474,326L471,318z" fill="#ae7e6c"/><path d="M462,333L464,331L464,339z" fill="#ab7c6b"/><path d="M464,331L475,333L464,339z" fill="#a37766"/><path d="M463,331L464,331L462,333z" fill="#ae7f6d"/><path d="M464,331L463,331L463,331z" fill="#9a7060"/><path d="M463,327L456,327L463,326z" fill="#a37766"/><path d="M463,327L463,331L456,327z" fill="#a67968"/><path d="M463,327L464,331L463,331z" fill="#a67867"/><path d="M442,284L441,283L442,282z" fill="#9b7061"/><path d="M447,281L442,284L442,282z" fill="#ad7e6c"/><path d="M442,284L447,281L443,288z" fill="#a87a69"/><path d="M442,284L443,288L436,289z" fill="#a87a69"/><path d="M441,283L442,284L436,289z" fill="#9b7061"/><path d="M430,270L429,273L429,271z" fill="#9d7262"/><path d="M436,277L429,273L430,270z" fill="#a37666"/><path d="M429,273L424,271L429,271z" fill="#a57867"/><path d="M422,291L423,287L426,292z" fill="#9c7161"/><path d="M422,291L419,290L423,287z" fill="#9b7161"/><path d="M434,295L433,290L436,289z" fill="#aa7b6a"/><path d="M436,289L433,290L429,281z" fill="#a77968"/><path d="M433,290L423,287L429,281z" fill="#a47867"/><path d="M423,287L433,290L426,292z" fill="#9b7161"/><path d="M414,306L418,308L416,309z" fill="#9f7464"/><path d="M495,337L498,338L492,344z" fill="#af7f6d"/><path d="M495,337L495,335L498,338z" fill="#9b7061"/><path d="M482,334L478,343L475,333z" fill="#ac7d6b"/><path d="M491,306L491,317L486,317z" fill="#a67968"/><path d="M494,316L491,317L491,306z" fill="#a67968"/><path d="M491,317L490,324L486,317z" fill="#a77968"/><path d="M490,324L491,317L495,322z" fill="#ab7c6a"/><path d="M491,317L494,316L495,322z" fill="#ab7c6b"/><path d="M473,348L477,345L480,347z" fill="#9a7060"/><path d="M477,345L478,343L480,347z" fill="#9a7060"/><path d="M464,339L472,342L467,349z" fill="#a27565"/><path d="M472,342L473,348L467,349z" fill="#a87a69"/><path d="M475,333L472,342L464,339z" fill="#a97a69"/><path d="M458,278L463,280L464,287z" fill="#a87a69"/><path d="M463,280L467,281L464,287z" fill="#ac7d6b"/><path d="M488,272L492,269L488,274z" fill="#af7f6d"/><path d="M488,272L488,270L492,269z" fill="#a97b69"/><path d="M488,270L488,272L484,275z" fill="#9b7161"/><path d="M488,272L487,275L484,275z" fill="#9a7060"/><path d="M487,275L488,272L488,274z" fill="#ae7f6d"/><path d="M499,273L499,270L501,267z" fill="#af7f6d"/><path d="M495,271L499,270L499,273z" fill="#a67968"/><path d="M499,270L496,263L501,267z" fill="#a27665"/><path d="M499,270L495,271L496,263z" fill="#a17564"/><path d="M489,263L491,262L492,269z" fill="#a17564"/><path d="M488,270L489,263L492,269z" fill="#a47767"/><path d="M489,263L488,270L488,263z" fill="#9a7060"/><path d="M489,263L488,263L489,262z" fill="#9a7060"/><path d="M491,262L489,263L489,262z" fill="#9a7060"/><path d="M470,291L472,288L471,293z" fill="#ab7c6b"/><path d="M470,291L466,297L464,287z" fill="#a17564"/><path d="M470,291L471,293L466,297z" fill="#ad7d6c"/><path d="M470,291L464,287L472,288z" fill="#a37665"/><path d="M472,288L470,291L472,288z" fill="#ac7d6b"/><path d="M476,265L470,270L471,264z" fill="#a77968"/><path d="M472,274L470,270L476,265z" fill="#a07464"/><path d="M470,270L463,266L471,264z" fill="#aa7b6a"/><path d="M465,272L470,270L472,274z" fill="#a07564"/><path d="M463,271L465,272L462,271z" fill="#ad7d6c"/><path d="M465,272L463,271L463,266z" fill="#a67867"/><path d="M470,270L465,272L463,266z" fill="#a67968"/><path d="M454,277L458,277L458,278z" fill="#a27665"/><path d="M458,277L463,280L458,278z" fill="#a97b6a"/><path d="M461,271L463,271L462,271z" fill="#9a7060"/><path d="M461,271L461,267L463,271z" fill="#9a7060"/><path d="M458,277L461,271L462,271z" fill="#9a7060"/><path d="M461,271L458,277L454,277z" fill="#9a7060"/><path d="M461,267L461,271L449,265z" fill="#ac7d6b"/><path d="M461,271L454,277L449,265z" fill="#ab7c6b"/><path d="M388,257L391,261L378,263z" fill="#a77a6a"/><path d="M383,255L388,257L378,263z" fill="#a37767"/><path d="M391,261L388,257L393,258z" fill="#a57868"/><path d="M393,258L388,257L391,256z" fill="#ac7e6c"/><path d="M388,257L389,255L391,256z" fill="#9b7262"/><path d="M357,259L347,251L352,249z" fill="#a27767"/><path d="M347,251L357,259L348,261z" fill="#a37868"/><path d="M347,251L348,249L352,249z" fill="#9c7363"/><path d="M339,254L347,251L348,261z" fill="#a57969"/><path d="M347,251L339,254L338,248z" fill="#ae806f"/><path d="M339,247L347,251L338,248z" fill="#9c7363"/><path d="M347,251L339,247L348,249z" fill="#a07566"/><path d="M369,260L363,260L359,254z" fill="#a47868"/><path d="M363,260L357,259L359,254z" fill="#a37868"/><path d="M363,260L369,260L370,262z" fill="#ac7e6d"/><path d="M311,287L304,290L309,283z" fill="#ad806f"/><path d="M304,290L303,280L309,283z" fill="#ac7f6e"/><path d="M409,297L402,297L410,289z" fill="#9b7162"/><path d="M402,297L399,292L410,289z" fill="#a77a69"/><path d="M414,333L415,333L416,334z" fill="#9b7161"/><path d="M418,308L418,316L416,309z" fill="#aa7c6b"/><path d="M423,316L418,316L425,314z" fill="#9d7262"/><path d="M418,316L418,308L425,314z" fill="#a57868"/><path d="M379,311L387,318L374,320z" fill="#a37767"/><path d="M357,319L363,317L374,320z" fill="#9c7263"/><path d="M296,242L291,239L312,241z" fill="#ab7e6d"/><path d="M291,239L296,242L295,244z" fill="#ab7e6e"/><path d="M298,247L296,242L312,241z" fill="#a17767"/><path d="M333,248L330,248L338,247z" fill="#9c7364"/><path d="M333,248L338,247L338,248z" fill="#ac7e6d"/><path d="M174,196L176,203L171,206z" fill="#a27869"/><path d="M181,203L176,203L174,196z" fill="#aa7e6e"/><path d="M176,203L180,208L171,206z" fill="#af8271"/><path d="M188,195L185,188L188,189z" fill="#ab7f6f"/><path d="M181,189L185,188L188,195z" fill="#ae8171"/><path d="M188,189L185,188L171,180z" fill="#ac8070"/><path d="M176,191L181,189L174,196z" fill="#a07768"/><path d="M176,191L169,191L170,187z" fill="#a3796a"/><path d="M169,191L176,191L174,196z" fill="#a97d6d"/><path d="M561,275L561,278L557,278z" fill="#9a7060"/><path d="M560,273L561,275L557,278z" fill="#ad7e6c"/><path d="M561,275L566,275L561,278z" fill="#9a7060"/><path d="M561,275L560,273L563,271z" fill="#af7f6d"/><path d="M566,275L561,275L563,271z" fill="#aa7b6a"/><path d="M554,271L560,273L553,274z" fill="#a87a69"/><path d="M550,275L554,271L553,274z" fill="#a67968"/><path d="M560,273L554,271L563,271z" fill="#a57867"/><path d="M554,271L551,266L553,267z" fill="#9d7262"/><path d="M554,271L550,275L551,266z" fill="#a57867"/><path d="M560,261L554,271L553,267z" fill="#ad7d6c"/><path d="M554,271L560,261L563,271z" fill="#a87a69"/><path d="M561,278L561,279L557,278z" fill="#ae7f6d"/><path d="M561,279L559,281L557,278z" fill="#af7f6d"/><path d="M561,279L561,278L567,285z" fill="#a07464"/><path d="M575,279L573,281L571,272z" fill="#a57867"/><path d="M573,281L566,275L571,272z" fill="#a37666"/><path d="M566,275L573,281L569,283z" fill="#a17564"/><path d="M569,283L573,281L569,285z" fill="#9c7161"/><path d="M573,281L586,283L569,285z" fill="#9f7363"/><path d="M573,281L575,279L586,283z" fill="#a37766"/><path d="M599,268L614,260L612,272z" fill="#a57867"/><path d="M614,260L599,268L598,254z" fill="#a87a69"/><path d="M610,278L599,268L612,272z" fill="#a77968"/><path d="M599,268L610,278L606,280z" fill="#a77968"/><path d="M599,268L606,280L596,282z" fill="#a77968"/><path d="M591,275L599,268L596,282z" fill="#aa7b6a"/><path d="M595,283L591,275L596,282z" fill="#a87a69"/><path d="M595,283L589,283L591,275z" fill="#a97b6a"/><path d="M587,276L589,283L586,283z" fill="#9a7060"/><path d="M589,283L587,276L591,275z" fill="#9a7060"/><path d="M578,274L587,276L586,283z" fill="#ab7c6b"/><path d="M587,276L589,262L591,275z" fill="#9a7060"/><path d="M549,265L542,262L547,259z" fill="#a97b6a"/><path d="M551,266L549,265L547,259z" fill="#9e7363"/><path d="M542,262L542,263L537,265z" fill="#ae7f6d"/><path d="M542,263L544,269L537,265z" fill="#a27665"/><path d="M549,265L542,263L542,262z" fill="#ad7d6c"/><path d="M542,263L549,265L544,269z" fill="#a47766"/><path d="M534,269L532,267L537,265z" fill="#ae7e6c"/><path d="M534,269L526,279L532,267z" fill="#ac7d6b"/><path d="M534,269L536,277L526,279z" fill="#a67967"/><path d="M536,277L544,271L545,273z" fill="#ae7f6d"/><path d="M534,269L544,271L536,277z" fill="#a07564"/><path d="M544,269L544,271L537,265z" fill="#9e7363"/><path d="M544,271L534,269L537,265z" fill="#a17565"/><path d="M575,272L575,279L571,272z" fill="#a17565"/><path d="M575,272L578,274L575,279z" fill="#9e7362"/><path d="M575,272L572,269L575,268z" fill="#a97b6a"/><path d="M572,269L575,272L571,272z" fill="#a67968"/><path d="M578,263L578,267L575,268z" fill="#ad7e6c"/><path d="M578,267L575,272L575,268z" fill="#aa7b6a"/><path d="M575,272L578,267L578,274z" fill="#9a7060"/><path d="M589,262L578,267L578,263z" fill="#ab7c6b"/><path d="M587,276L578,267L589,262z" fill="#a67867"/><path d="M578,267L587,276L578,274z" fill="#a17564"/><path d="M486,306L491,306L486,317z" fill="#9a7060"/><path d="M482,309L486,306L486,317z" fill="#a27665"/><path d="M462,302L466,304L463,304z" fill="#a07564"/><path d="M466,304L462,302L466,297z" fill="#a17565"/><path d="M470,312L478,310L478,314z" fill="#a77968"/><path d="M482,309L478,310L479,309z" fill="#af7f6d"/><path d="M478,310L482,309L478,314z" fill="#ab7d6b"/><path d="M550,275L545,271L551,266z" fill="#a57867"/><path d="M545,271L549,265L551,266z" fill="#9a7060"/><path d="M549,265L545,271L544,269z" fill="#ad7e6c"/><path d="M545,271L550,275L545,273z" fill="#a47766"/><path d="M544,271L545,271L545,273z" fill="#a97b69"/><path d="M545,271L544,271L544,269z" fill="#aa7b6a"/><path d="M747,249L749,247L751,254z" fill="#a17564"/><path d="M746,252L747,249L751,254z" fill="#a17564"/><path d="M747,249L746,252L742,248z" fill="#af7f6d"/><path d="M742,246L747,249L742,248z" fill="#9a7060"/><path d="M747,249L742,246L749,247z" fill="#a27565"/><path d="M748,257L746,253L751,254z" fill="#a17565"/><path d="M746,253L746,252L751,254z" fill="#9a7060"/><path d="M746,253L748,257L746,260z" fill="#9d7262"/><path d="M740,252L746,253L746,260z" fill="#ae7e6c"/><path d="M746,252L746,253L740,252z" fill="#9a7060"/><path d="M732,240L722,242L720,241z" fill="#a77968"/><path d="M726,244L722,242L732,240z" fill="#a27565"/><path d="M722,242L726,244L724,250z" fill="#a47767"/><path d="M714,252L722,242L724,250z" fill="#a77968"/><path d="M722,242L714,252L720,241z" fill="#a77968"/><path d="M719,261L710,261L709,260z" fill="#ab7c6b"/><path d="M718,264L710,261L719,261z" fill="#a77968"/><path d="M710,261L718,264L714,269z" fill="#a47767"/><path d="M710,261L714,269L702,263z" fill="#a47767"/><path d="M709,260L710,261L702,263z" fill="#af7f6d"/><path d="M718,264L721,262L728,266z" fill="#9f7363"/><path d="M721,262L718,264L719,261z" fill="#af7f6d"/><path d="M728,252L725,259L724,250z" fill="#a97b69"/><path d="M725,259L720,256L724,250z" fill="#a97b6a"/><path d="M721,262L725,259L728,266z" fill="#9e7363"/><path d="M720,256L725,259L719,261z" fill="#a27565"/><path d="M725,259L721,262L719,261z" fill="#af7f6d"/><path d="M725,259L736,253L728,266z" fill="#9d7262"/><path d="M725,259L728,252L736,253z" fill="#a17565"/><path d="M680,264L675,260L683,259z" fill="#a87a69"/><path d="M680,264L683,259L686,263z" fill="#a47766"/><path d="M682,271L680,264L686,263z" fill="#9d7262"/><path d="M680,264L682,271L678,270z" fill="#9a7060"/><path d="M637,263L644,263L644,265z" fill="#aa7b6a"/><path d="M644,262L637,263L638,256z" fill="#a97a69"/><path d="M637,263L644,262L644,263z" fill="#9b7161"/><path d="M632,275L640,273L642,275z" fill="#9a7060"/><path d="M650,270L640,273L644,265z" fill="#a27565"/><path d="M640,273L650,270L642,275z" fill="#9a7060"/><path d="M628,275L630,271L632,275z" fill="#a57867"/><path d="M630,271L628,275L627,273z" fill="#af7f6d"/><path d="M630,271L627,273L626,273z" fill="#9a7060"/><path d="M742,246L744,241L749,247z" fill="#a47766"/><path d="M744,241L748,237L749,247z" fill="#a47766"/><path d="M744,241L742,246L738,238z" fill="#ac7d6b"/><path d="M633,259L635,254L638,256z" fill="#ad7e6c"/><path d="M128,188L128,190L123,187z" fill="#9e7566"/><path d="M129,191L128,190L128,188z" fill="#9e7566"/><path d="M128,190L135,199L123,187z" fill="#aa7e6e"/><path d="M128,190L129,191L135,199z" fill="#a87d6d"/><path d="M137,188L135,190L134,182z" fill="#a77c6c"/><path d="M139,188L137,188L134,182z" fill="#ab7f6f"/><path d="M137,188L139,188L135,190z" fill="#b28574"/><path d="M142,195L138,197L135,190z" fill="#b08372"/><path d="M138,197L142,195L146,204z" fill="#9f7667"/><path d="M150,186L148,193L145,187z" fill="#a87d6d"/><path d="M148,193L150,186L156,190z" fill="#9e7566"/><path d="M154,194L148,193L156,190z" fill="#b18373"/><path d="M144,191L142,195L139,188z" fill="#ae8171"/><path d="M144,191L143,185L145,187z" fill="#9f7767"/><path d="M144,191L139,188L143,185z" fill="#a97e6e"/><path d="M148,193L144,191L145,187z" fill="#a77c6c"/><path d="M169,191L158,192L159,190z" fill="#b08372"/><path d="M158,192L158,192L159,190z" fill="#9e7566"/><path d="M158,192L169,191L160,200z" fill="#a87d6d"/><path d="M154,194L158,192L160,200z" fill="#aa7f6e"/><path d="M158,192L158,192L154,194z" fill="#9e7566"/><path d="M219,215L213,210L224,208z" fill="#ac8070"/><path d="M213,210L219,215L211,211z" fill="#a97e6e"/><path d="M213,210L208,201L224,208z" fill="#a87d6d"/><path d="M213,210L211,211L208,201z" fill="#a87d6d"/><path d="M221,215L219,215L224,208z" fill="#b28474"/><path d="M219,215L221,215L218,220z" fill="#ae8171"/><path d="M221,215L226,219L218,220z" fill="#9e7566"/><path d="M226,219L220,230L218,220z" fill="#ad8170"/><path d="M220,230L226,219L231,231z" fill="#a97e6e"/><path d="M235,218L226,219L224,208z" fill="#ab7f6f"/><path d="M226,219L221,215L224,208z" fill="#a17869"/><path d="M189,201L195,208L182,204z" fill="#ac806f"/><path d="M195,208L181,209L182,204z" fill="#af8272"/><path d="M204,222L206,221L209,224z" fill="#ae8271"/><path d="M185,235L191,234L180,241z" fill="#a37a6a"/><path d="M185,235L188,232L191,234z" fill="#a97e6e"/><path d="M178,232L185,235L180,241z" fill="#b18473"/><path d="M188,232L185,235L178,232z" fill="#b28473"/><path d="M165,209L162,217L159,211z" fill="#9e7566"/><path d="M165,209L167,209L162,217z" fill="#b08372"/><path d="M165,209L159,211L160,200z" fill="#a07768"/><path d="M167,208L160,200L171,206z" fill="#ad8171"/><path d="M167,209L167,208L171,206z" fill="#9e7566"/><path d="M167,208L165,209L160,200z" fill="#a3796a"/><path d="M165,209L167,208L167,209z" fill="#a17768"/><path d="M241,227L240,225L248,227z" fill="#ae8171"/><path d="M240,225L241,227L240,227z" fill="#b38574"/><path d="M231,231L240,228L236,236z" fill="#a87d6d"/><path d="M240,228L240,229L236,236z" fill="#9e7566"/><path d="M240,228L231,231L240,227z" fill="#b38574"/><path d="M241,227L240,228L240,227z" fill="#b38574"/><path d="M240,228L241,227L240,229z" fill="#9e7566"/><path d="M267,239L259,245L267,238z" fill="#b18372"/><path d="M259,245L267,239L263,246z" fill="#a07767"/><path d="M297,311L308,314L318,316z" fill="#a97d6c"/><path d="M270,277L271,273L271,279z" fill="#af8271"/><path d="M266,277L270,277L271,279z" fill="#ae8170"/><path d="M270,277L266,277L271,273z" fill="#a87c6c"/><path d="M266,277L268,267L271,273z" fill="#ab7f6e"/><path d="M273,263L268,267L267,266z" fill="#b28473"/><path d="M268,267L273,263L271,273z" fill="#ab7e6e"/><path d="M267,266L268,267L262,276z" fill="#b18372"/><path d="M268,267L266,277L262,276z" fill="#ae8170"/><path d="M270,258L265,253L272,258z" fill="#b18372"/><path d="M270,258L273,263L267,266z" fill="#a27868"/><path d="M273,263L270,258L272,258z" fill="#a27868"/><path d="M312,279L308,274L311,270z" fill="#a17767"/><path d="M304,278L308,274L312,279z" fill="#a07667"/><path d="M290,246L295,253L286,253z" fill="#ac7f6e"/><path d="M295,253L296,256L286,253z" fill="#af8170"/><path d="M295,253L290,246L298,247z" fill="#ab7e6e"/><path d="M305,253L303,249L311,248z" fill="#a07666"/><path d="M305,253L313,252L312,256z" fill="#ab7e6d"/><path d="M313,252L305,253L311,248z" fill="#9d7464"/><path d="M314,269L315,265L321,266z" fill="#aa7d6d"/><path d="M315,265L319,253L321,266z" fill="#a97c6c"/><path d="M315,265L312,261L319,253z" fill="#ab7e6e"/><path d="M315,265L314,269L311,270z" fill="#a87c6b"/><path d="M312,261L315,265L311,270z" fill="#ad7f6e"/><path d="M265,285L274,286L264,287z" fill="#b08271"/><path d="M274,286L265,285L271,279z" fill="#a67b6b"/><path d="M270,258L267,258L265,253z" fill="#b18372"/><path d="M262,263L267,258L267,266z" fill="#9f7666"/><path d="M267,258L270,258L267,266z" fill="#a57a6b"/><path d="M250,242L244,230L248,227z" fill="#a77c6c"/><path d="M240,229L244,230L236,236z" fill="#b28473"/><path d="M244,230L241,227L248,227z" fill="#aa7e6e"/><path d="M241,227L244,230L240,229z" fill="#a17869"/><path d="M217,250L221,244L220,252z" fill="#a67c6c"/><path d="M217,250L209,244L221,244z" fill="#a97e6e"/><path d="M191,234L204,245L180,241z" fill="#aa7f6f"/><path d="M217,250L204,245L209,244z" fill="#ad8170"/><path d="M204,245L220,252L180,241z" fill="#ad8171"/><path d="M204,245L217,250L220,252z" fill="#a97d6d"/><path d="M221,243L215,237L218,237z" fill="#a27969"/><path d="M215,237L221,243L209,244z" fill="#a27869"/><path d="M221,244L227,238L233,245z" fill="#a87d6d"/><path d="M221,243L227,238L221,244z" fill="#b18373"/><path d="M227,238L232,237L233,245z" fill="#a57b6b"/><path d="M227,238L221,243L218,237z" fill="#a37a6a"/><path d="M227,238L220,230L231,231z" fill="#ab7f6f"/><path d="M232,237L227,238L232,236z" fill="#ae8271"/><path d="M227,238L231,231L232,236z" fill="#9e7566"/><path d="M415,278L412,280L406,271z" fill="#a27666"/><path d="M414,268L415,278L406,271z" fill="#a97c6a"/><path d="M413,285L415,278L420,280z" fill="#9d7263"/><path d="M415,278L413,285L412,280z" fill="#a77a69"/><path d="M422,270L420,269L424,262z" fill="#ad7e6c"/><path d="M424,271L422,270L424,262z" fill="#9b7161"/><path d="M437,314L441,312L438,319z" fill="#9b7061"/><path d="M441,312L437,314L438,311z" fill="#a97b6a"/><path d="M429,320L437,314L438,319z" fill="#9b7161"/><path d="M428,335L430,332L437,339z" fill="#a47867"/><path d="M466,306L470,312L463,317z" fill="#aa7b6a"/><path d="M460,310L466,306L463,317z" fill="#a57867"/><path d="M466,306L460,310L463,304z" fill="#9f7463"/><path d="M466,304L466,306L463,304z" fill="#a07464"/><path d="M450,308L456,299L457,303z" fill="#9d7262"/><path d="M457,303L456,299L457,299z" fill="#9a7060"/><path d="M456,299L446,307L453,295z" fill="#ac7d6c"/><path d="M456,299L450,308L446,307z" fill="#ad7e6c"/><path d="M456,299L455,292L457,299z" fill="#9a7060"/><path d="M455,292L456,299L453,295z" fill="#ad7d6c"/><path d="M464,331L473,329L475,333z" fill="#9c7262"/><path d="M463,327L473,329L464,331z" fill="#ab7c6a"/><path d="M473,329L463,327L463,326z" fill="#a97b6a"/><path d="M470,321L473,329L463,326z" fill="#aa7c6a"/><path d="M474,326L473,329L470,321z" fill="#a67867"/><path d="M429,273L432,280L429,281z" fill="#a67968"/><path d="M432,280L429,273L436,277z" fill="#a67968"/><path d="M432,280L436,277L441,283z" fill="#a67968"/><path d="M432,280L436,289L429,281z" fill="#a17565"/><path d="M432,280L441,283L436,289z" fill="#a17565"/><path d="M429,273L424,273L424,271z" fill="#ae7f6d"/><path d="M424,273L422,270L424,271z" fill="#9c7262"/><path d="M420,280L424,273L429,281z" fill="#a27666"/><path d="M424,273L429,273L429,281z" fill="#a47766"/><path d="M422,270L424,273L420,269z" fill="#9e7363"/><path d="M435,299L434,295L441,299z" fill="#9f7464"/><path d="M413,311L410,315L402,313z" fill="#a17665"/><path d="M413,311L414,306L416,309z" fill="#9b7161"/><path d="M418,316L413,311L416,309z" fill="#a27666"/><path d="M413,311L418,316L410,315z" fill="#a07565"/><path d="M495,335L486,331L493,328z" fill="#a77968"/><path d="M486,331L490,324L493,328z" fill="#aa7b6a"/><path d="M495,337L486,331L495,335z" fill="#9a7060"/><path d="M486,331L485,321L490,324z" fill="#a27665"/><path d="M482,334L483,341L478,343z" fill="#9a7060"/><path d="M480,347L483,341L489,345z" fill="#ad7e6c"/><path d="M478,343L483,341L480,347z" fill="#9a7060"/><path d="M475,328L474,326L485,321z" fill="#9a7060"/><path d="M486,331L475,328L485,321z" fill="#a87a69"/><path d="M475,328L486,331L482,334z" fill="#a77968"/><path d="M475,328L482,334L475,333z" fill="#a17565"/><path d="M473,329L475,328L475,333z" fill="#9d7262"/><path d="M475,328L473,329L474,326z" fill="#9a7060"/><path d="M473,343L477,345L473,348z" fill="#a97b6a"/><path d="M472,342L473,343L473,348z" fill="#a67968"/><path d="M477,345L473,343L478,343z" fill="#ad7e6c"/><path d="M478,343L473,343L475,333z" fill="#ab7c6b"/><path d="M473,343L472,342L475,333z" fill="#a87a69"/><path d="M467,281L466,278L471,278z" fill="#a87a69"/><path d="M463,280L466,278L467,281z" fill="#ac7d6b"/><path d="M466,278L472,274L471,278z" fill="#a27665"/><path d="M466,278L465,272L472,274z" fill="#aa7b6a"/><path d="M465,272L466,278L462,271z" fill="#ab7d6b"/><path d="M466,278L458,277L462,271z" fill="#ac7d6b"/><path d="M458,277L466,278L463,280z" fill="#a27665"/><path d="M385,255L359,254L352,249z" fill="#a37867"/><path d="M385,255L383,255L359,254z" fill="#ad7f6e"/><path d="M391,256L385,255L352,249z" fill="#9c7262"/><path d="M389,255L385,255L391,256z" fill="#a97b6b"/><path d="M385,255L388,257L383,255z" fill="#a87b6a"/><path d="M388,257L385,255L389,255z" fill="#9b7262"/><path d="M336,262L339,254L348,261z" fill="#a67a6a"/><path d="M337,264L336,262L348,261z" fill="#9f7565"/><path d="M339,254L336,262L332,261z" fill="#ad7f6e"/><path d="M321,266L330,266L323,272z" fill="#a77b6a"/><path d="M330,266L327,257L332,261z" fill="#a27767"/><path d="M327,257L330,266L321,266z" fill="#a17767"/><path d="M318,281L311,287L312,279z" fill="#af8170"/><path d="M318,273L318,281L312,279z" fill="#ad7f6e"/><path d="M326,291L333,296L331,298z" fill="#a37868"/><path d="M363,260L361,262L357,259z" fill="#af806f"/><path d="M361,262L363,260L370,262z" fill="#ac7e6d"/><path d="M379,279L370,274L378,263z" fill="#a97c6b"/><path d="M370,274L371,262L378,263z" fill="#a97c6b"/><path d="M352,288L345,296L344,296z" fill="#9c7363"/><path d="M345,296L352,288L357,299z" fill="#ae806e"/><path d="M352,288L360,296L357,299z" fill="#ab7e6d"/><path d="M318,281L319,292L311,287z" fill="#a17767"/><path d="M352,313L357,317L357,318z" fill="#a27767"/><path d="M357,317L357,319L357,318z" fill="#9c7263"/><path d="M357,319L357,317L363,317z" fill="#9c7263"/><path d="M344,313L336,311L347,308z" fill="#ab7e6d"/><path d="M397,311L398,304L402,313z" fill="#9d7363"/><path d="M397,311L394,305L398,304z" fill="#a87a6a"/><path d="M418,316L419,321L410,315z" fill="#a37766"/><path d="M419,321L418,316L423,316z" fill="#9d7363"/><path d="M410,315L403,317L402,313z" fill="#ac7d6c"/><path d="M380,303L379,303L376,301z" fill="#a97c6b"/><path d="M380,296L380,303L376,301z" fill="#ae7f6e"/><path d="M383,290L380,296L376,292z" fill="#a97c6b"/><path d="M387,318L399,329L374,320z" fill="#aa7c6b"/><path d="M399,329L414,333L416,334z" fill="#a07564"/><path d="M399,329L416,334L419,336z" fill="#a87b6a"/><path d="M357,317L364,312L363,317z" fill="#ae806f"/><path d="M364,312L357,317L352,313z" fill="#a87b6a"/><path d="M366,301L372,298L376,301z" fill="#ab7e6c"/><path d="M295,244L295,244L298,247z" fill="#9d7465"/><path d="M295,244L296,242L298,247z" fill="#9d7465"/><path d="M296,242L295,244L295,244z" fill="#b28372"/><path d="M335,251L334,250L338,248z" fill="#9c7364"/><path d="M334,250L333,248L338,248z" fill="#b18271"/><path d="M328,255L334,250L335,251z" fill="#9c7364"/><path d="M334,250L328,255L330,248z" fill="#a27767"/><path d="M333,248L334,250L330,248z" fill="#a37868"/><path d="M176,203L180,203L180,208z" fill="#af8272"/><path d="M180,203L176,203L181,203z" fill="#b38574"/><path d="M180,208L180,203L182,204z" fill="#aa7e6e"/><path d="M180,203L181,203L182,204z" fill="#a97e6e"/><path d="M176,185L172,184L171,180z" fill="#b18473"/><path d="M185,188L176,185L171,180z" fill="#ae8171"/><path d="M176,185L185,188L181,189z" fill="#a07768"/><path d="M176,191L176,185L181,189z" fill="#a67b6c"/><path d="M172,184L176,185L170,187z" fill="#b18473"/><path d="M176,185L176,191L170,187z" fill="#a77c6c"/><path d="M560,281L561,279L567,285z" fill="#9a7060"/><path d="M561,279L560,281L559,281z" fill="#9a7060"/><path d="M560,281L567,285L558,284z" fill="#ac7d6b"/><path d="M559,281L560,281L558,284z" fill="#9a7060"/><path d="M589,262L592,264L591,275z" fill="#a27665"/><path d="M592,264L599,268L591,275z" fill="#a57867"/><path d="M476,302L471,293L479,292z" fill="#a97b69"/><path d="M471,293L476,302L466,297z" fill="#aa7b6a"/><path d="M476,302L466,304L466,297z" fill="#ab7c6a"/><path d="M478,310L476,302L479,309z" fill="#9a7060"/><path d="M476,302L478,310L470,312z" fill="#9e7362"/><path d="M466,306L476,302L470,312z" fill="#a97b69"/><path d="M476,302L466,306L466,304z" fill="#a87a69"/><path d="M485,303L482,309L479,309z" fill="#ad7d6c"/><path d="M485,303L486,306L482,309z" fill="#ae7e6c"/><path d="M476,302L485,303L479,309z" fill="#9e7262"/><path d="M670,265L676,271L665,273z" fill="#a77968"/><path d="M682,271L676,271L678,270z" fill="#9a7060"/><path d="M676,271L682,271L686,272z" fill="#a97b6a"/><path d="M665,273L676,271L686,272z" fill="#ac7d6c"/><path d="M672,265L680,264L678,270z" fill="#a97a69"/><path d="M676,271L672,265L678,270z" fill="#a77968"/><path d="M672,265L676,271L670,265z" fill="#a77968"/><path d="M680,264L672,265L675,260z" fill="#a77968"/><path d="M670,265L664,271L663,262z" fill="#ab7c6b"/><path d="M664,271L670,265L665,273z" fill="#9a7060"/><path d="M664,271L665,273L660,274z" fill="#9a7060"/><path d="M656,272L664,271L660,274z" fill="#a17565"/><path d="M663,262L664,271L656,272z" fill="#ae7e6c"/><path d="M685,247L673,248L688,245z" fill="#ad7e6c"/><path d="M683,259L673,248L685,247z" fill="#a47766"/><path d="M675,260L673,248L683,259z" fill="#a47766"/><path d="M672,265L667,259L675,260z" fill="#a77968"/><path d="M667,259L672,265L670,265z" fill="#a77968"/><path d="M667,259L670,265L663,262z" fill="#a97b69"/><path d="M630,271L635,270L632,275z" fill="#ac7d6b"/><path d="M635,270L630,271L633,267z" fill="#a87a69"/><path d="M635,270L640,273L632,275z" fill="#a27665"/><path d="M637,263L635,270L633,267z" fill="#a87a69"/><path d="M635,270L637,263L644,265z" fill="#a37766"/><path d="M640,273L635,270L644,265z" fill="#a27565"/><path d="M630,271L631,267L633,267z" fill="#aa7c6a"/><path d="M631,267L626,273L622,268z" fill="#a67968"/><path d="M631,267L630,271L626,273z" fill="#9a7060"/><path d="M748,237L745,238L738,238z" fill="#9a7060"/><path d="M745,238L744,241L738,238z" fill="#aa7c6a"/><path d="M744,241L745,238L748,237z" fill="#ae7e6c"/><path d="M637,263L636,262L638,256z" fill="#ae7e6d"/><path d="M636,262L633,259L638,256z" fill="#a77968"/><path d="M636,262L637,263L633,267z" fill="#ae7f6d"/><path d="M631,254L631,255L628,256z" fill="#9c7262"/><path d="M631,255L631,254L635,254z" fill="#a27665"/><path d="M633,259L631,255L635,254z" fill="#a87a69"/><path d="M628,256L628,261L623,261z" fill="#a17564"/><path d="M623,261L628,261L622,268z" fill="#ab7c6b"/><path d="M628,261L631,267L622,268z" fill="#9e7362"/><path d="M138,197L137,197L135,190z" fill="#a67b6b"/><path d="M129,191L137,197L135,199z" fill="#aa7e6e"/><path d="M137,197L129,191L135,190z" fill="#a57b6b"/><path d="M137,197L146,204L135,199z" fill="#ab7f6f"/><path d="M137,197L138,197L146,204z" fill="#9e7566"/><path d="M142,195L147,194L147,197z" fill="#9e7566"/><path d="M147,194L154,194L147,197z" fill="#9e7566"/><path d="M147,194L148,193L154,194z" fill="#ae8271"/><path d="M144,191L147,194L142,195z" fill="#b18473"/><path d="M147,194L144,191L148,193z" fill="#aa7e6e"/><path d="M218,229L213,224L218,220z" fill="#b08372"/><path d="M220,230L218,229L218,220z" fill="#af8272"/><path d="M240,225L233,223L235,218z" fill="#ab7f6f"/><path d="M233,223L240,225L240,227z" fill="#ac8070"/><path d="M231,231L233,223L240,227z" fill="#ac806f"/><path d="M195,208L198,199L199,208z" fill="#a07768"/><path d="M199,208L198,199L204,199z" fill="#ab7f6f"/><path d="M198,199L189,201L195,197z" fill="#9e7566"/><path d="M198,199L195,208L189,201z" fill="#ab7f6f"/><path d="M204,199L198,199L204,197z" fill="#ab7f6f"/><path d="M197,195L198,199L195,197z" fill="#9e7566"/><path d="M198,199L197,195L204,197z" fill="#a87d6d"/><path d="M195,208L188,216L181,209z" fill="#a07768"/><path d="M180,212L188,216L185,220z" fill="#a97e6e"/><path d="M181,209L188,216L180,212z" fill="#9e7566"/><path d="M297,298L293,297L297,292z" fill="#b08271"/><path d="M297,298L297,298L297,292z" fill="#9d7465"/><path d="M304,290L304,296L297,292z" fill="#a07667"/><path d="M304,296L297,298L297,292z" fill="#a17767"/><path d="M299,302L297,311L292,303z" fill="#ac7f6e"/><path d="M288,261L281,261L282,258z" fill="#a27868"/><path d="M288,261L282,258L286,253z" fill="#a57a6a"/><path d="M288,261L290,264L280,267z" fill="#a47a6a"/><path d="M281,261L288,261L280,267z" fill="#a37969"/><path d="M296,256L288,261L286,253z" fill="#a97d6d"/><path d="M288,261L296,256L290,264z" fill="#a57a6a"/><path d="M281,261L275,261L282,258z" fill="#a67b6b"/><path d="M277,253L275,261L272,258z" fill="#a4796a"/><path d="M275,261L277,253L282,258z" fill="#b28472"/><path d="M275,261L273,263L272,258z" fill="#a37969"/><path d="M273,263L275,261L280,267z" fill="#a67b6b"/><path d="M275,261L281,261L280,267z" fill="#a67b6b"/><path d="M282,258L282,255L286,253z" fill="#b28473"/><path d="M277,253L282,255L282,258z" fill="#ad806f"/><path d="M283,247L286,244L285,247z" fill="#b08271"/><path d="M283,247L282,255L277,253z" fill="#a37969"/><path d="M283,247L285,247L286,253z" fill="#a57a6a"/><path d="M282,255L283,247L286,253z" fill="#a47a6a"/><path d="M279,244L283,247L277,253z" fill="#aa7e6e"/><path d="M283,247L279,244L286,244z" fill="#af8171"/><path d="M263,250L270,249L265,253z" fill="#9d7565"/><path d="M270,249L279,244L277,253z" fill="#9e7566"/><path d="M265,253L270,249L272,258z" fill="#ad806f"/><path d="M270,249L277,253L272,258z" fill="#a27868"/><path d="M261,248L259,245L263,246z" fill="#a27868"/><path d="M263,250L261,248L263,246z" fill="#b38573"/><path d="M261,248L258,252L259,245z" fill="#a17768"/><path d="M258,252L261,248L263,250z" fill="#b28473"/><path d="M289,275L297,278L292,283z" fill="#af8170"/><path d="M287,275L289,275L285,279z" fill="#9d7465"/><path d="M289,275L292,283L285,279z" fill="#ac7f6f"/><path d="M289,268L289,275L287,275z" fill="#9d7465"/><path d="M297,278L301,279L292,283z" fill="#a67a6a"/><path d="M304,290L301,279L303,280z" fill="#ac7f6e"/><path d="M301,279L304,278L303,280z" fill="#9d7464"/><path d="M292,283L301,279L293,289z" fill="#9f7666"/><path d="M301,279L297,292L293,289z" fill="#ac7f6e"/><path d="M301,279L304,290L297,292z" fill="#ab7e6e"/><path d="M295,253L301,253L296,256z" fill="#b08271"/><path d="M274,286L276,280L285,279z" fill="#b18372"/><path d="M276,280L274,286L271,279z" fill="#a27868"/><path d="M271,273L276,280L271,279z" fill="#a47a6a"/><path d="M276,280L280,267L285,279z" fill="#ac7f6f"/><path d="M276,280L271,273L280,267z" fill="#a97d6d"/><path d="M274,296L275,290L282,298z" fill="#ab7e6e"/><path d="M275,290L291,288L282,298z" fill="#af8271"/><path d="M291,288L275,290L285,279z" fill="#a87c6c"/><path d="M275,290L274,286L285,279z" fill="#9d7465"/><path d="M244,246L246,240L250,242z" fill="#af8271"/><path d="M246,240L244,230L250,242z" fill="#a97d6d"/><path d="M246,240L236,240L236,236z" fill="#a87d6d"/><path d="M244,230L246,240L236,236z" fill="#a97d6d"/><path d="M237,255L242,250L241,257z" fill="#ac806f"/><path d="M242,250L237,255L235,252z" fill="#9e7667"/><path d="M248,250L244,246L250,242z" fill="#a27869"/><path d="M251,257L248,250L256,255z" fill="#a3796a"/><path d="M248,250L242,250L244,246z" fill="#9f7667"/><path d="M248,250L258,252L256,255z" fill="#a4796a"/><path d="M204,222L208,235L200,235z" fill="#a57b6b"/><path d="M208,235L204,222L209,224z" fill="#a87d6d"/><path d="M213,224L208,235L209,224z" fill="#9e7567"/><path d="M218,229L208,235L213,224z" fill="#b28473"/><path d="M208,235L215,237L208,236z" fill="#b28473"/><path d="M208,235L218,229L215,237z" fill="#b08372"/><path d="M204,245L206,238L209,244z" fill="#a77c6d"/><path d="M417,278L414,268L420,269z" fill="#ac7d6c"/><path d="M417,278L415,278L414,268z" fill="#a27666"/><path d="M415,278L417,278L420,280z" fill="#a87a69"/><path d="M417,278L424,273L420,280z" fill="#ab7d6b"/><path d="M424,273L417,278L420,269z" fill="#a87a69"/><path d="M424,320L429,320L423,323z" fill="#9d7363"/><path d="M424,320L425,319L429,320z" fill="#a97b6a"/><path d="M424,320L425,319L425,319z" fill="#9b7161"/><path d="M419,321L424,320L423,323z" fill="#af7f6e"/><path d="M424,320L419,321L423,316z" fill="#ae7f6d"/><path d="M425,319L424,320L423,316z" fill="#aa7c6b"/><path d="M425,319L425,315L429,320z" fill="#9d7262"/><path d="M425,315L423,316L425,314z" fill="#af7f6d"/><path d="M425,315L425,319L423,316z" fill="#aa7c6b"/><path d="M425,319L425,315L425,319z" fill="#9b7161"/><path d="M426,334L437,339L419,336z" fill="#aa7c6a"/><path d="M426,334L428,335L437,339z" fill="#9b7161"/><path d="M423,323L426,334L419,336z" fill="#a17565"/><path d="M430,332L426,334L423,323z" fill="#a37666"/><path d="M428,335L426,334L430,332z" fill="#af806e"/><path d="M437,308L441,312L438,311z" fill="#a77a69"/><path d="M437,308L443,307L441,312z" fill="#a87a69"/><path d="M437,308L437,308L443,307z" fill="#ae7e6d"/><path d="M443,307L436,303L441,299z" fill="#a07464"/><path d="M437,308L436,303L443,307z" fill="#9b7061"/><path d="M436,303L435,299L441,299z" fill="#af806e"/><path d="M426,312L425,315L425,314z" fill="#ab7d6b"/><path d="M418,308L426,312L425,314z" fill="#a07565"/><path d="M425,301L426,312L418,308z" fill="#a67968"/><path d="M429,302L426,312L425,301z" fill="#a07464"/><path d="M414,306L417,298L418,308z" fill="#ad7e6d"/><path d="M417,298L425,301L418,308z" fill="#ad7e6d"/><path d="M486,331L487,342L482,334z" fill="#a77968"/><path d="M487,342L483,341L482,334z" fill="#a27665"/><path d="M483,341L487,342L489,345z" fill="#a17565"/><path d="M357,259L351,263L348,261z" fill="#b08170"/><path d="M361,262L351,263L357,259z" fill="#af816f"/><path d="M347,273L351,263L357,274z" fill="#ab7e6d"/><path d="M330,266L333,270L323,272z" fill="#a67a6a"/><path d="M333,270L342,269L341,279z" fill="#a87b6b"/><path d="M342,269L333,270L337,264z" fill="#ae806f"/><path d="M324,281L318,273L323,272z" fill="#a77b6b"/><path d="M324,281L318,281L318,273z" fill="#a77b6b"/><path d="M336,311L341,303L347,308z" fill="#9f7565"/><path d="M366,268L361,262L370,262z" fill="#a57969"/><path d="M371,262L366,268L370,262z" fill="#a27666"/><path d="M370,274L366,268L371,262z" fill="#a17666"/><path d="M375,280L370,274L379,279z" fill="#a37767"/><path d="M360,296L360,296L357,299z" fill="#9c7263"/><path d="M360,296L360,296L366,301z" fill="#9c7263"/><path d="M352,288L359,283L360,296z" fill="#ac7e6d"/><path d="M331,304L336,311L327,312z" fill="#a57a69"/><path d="M324,305L331,304L327,312z" fill="#a67a6a"/><path d="M322,315L318,310L325,314z" fill="#9c7364"/><path d="M318,310L322,315L318,316z" fill="#9c7364"/><path d="M316,313L318,310L318,316z" fill="#ab7e6d"/><path d="M319,292L313,295L311,287z" fill="#a37868"/><path d="M304,296L313,295L307,300z" fill="#af8170"/><path d="M313,295L304,290L311,287z" fill="#a77b6b"/><path d="M313,295L304,296L304,290z" fill="#a47969"/><path d="M319,294L313,295L319,292z" fill="#b18371"/><path d="M319,294L326,291L331,298z" fill="#a67b6a"/><path d="M324,305L319,294L331,298z" fill="#a67a6a"/><path d="M349,313L344,313L347,308z" fill="#ae806f"/><path d="M351,304L349,313L347,308z" fill="#af816f"/><path d="M349,313L351,304L352,313z" fill="#a67a69"/><path d="M349,313L352,313L357,318z" fill="#a57969"/><path d="M344,313L349,313L357,318z" fill="#9e7464"/><path d="M357,319L335,318L357,318z" fill="#9c7363"/><path d="M336,311L328,313L327,312z" fill="#9c7364"/><path d="M328,313L325,314L327,312z" fill="#9c7364"/><path d="M344,313L339,314L336,311z" fill="#ae806f"/><path d="M339,314L337,315L336,311z" fill="#af806f"/><path d="M390,311L387,318L379,311z" fill="#a37867"/><path d="M414,330L415,333L414,333z" fill="#ab7c6b"/><path d="M414,330L419,321L423,323z" fill="#ad7e6c"/><path d="M415,333L414,330L416,334z" fill="#9b7161"/><path d="M416,334L414,330L419,336z" fill="#a37766"/><path d="M414,330L423,323L419,336z" fill="#a67968"/><path d="M414,330L405,323L419,321z" fill="#a27666"/><path d="M399,329L405,323L414,333z" fill="#a17565"/><path d="M405,323L414,330L414,333z" fill="#a27666"/><path d="M397,315L397,311L402,313z" fill="#9b7162"/><path d="M403,317L397,315L402,313z" fill="#ad7e6d"/><path d="M379,309L379,303L380,303z" fill="#ab7d6c"/><path d="M379,309L380,303L390,305z" fill="#a47868"/><path d="M390,311L379,309L390,305z" fill="#9b7262"/><path d="M379,309L390,311L379,311z" fill="#9d7363"/><path d="M396,323L387,318L389,318z" fill="#a97b6a"/><path d="M396,323L399,329L387,318z" fill="#a67969"/><path d="M363,317L370,317L374,320z" fill="#9c7263"/><path d="M364,310L364,312L352,313z" fill="#a47868"/><path d="M369,313L366,313L369,311z" fill="#9c7263"/><path d="M366,313L364,310L369,311z" fill="#ae806e"/><path d="M364,310L366,313L364,312z" fill="#aa7d6c"/><path d="M364,312L366,313L363,317z" fill="#af816f"/><path d="M366,313L370,317L363,317z" fill="#a97c6b"/><path d="M370,317L366,313L369,313z" fill="#a67a69"/><path d="M377,296L380,296L376,301z" fill="#a47867"/><path d="M372,298L377,296L376,301z" fill="#a77a6a"/><path d="M380,296L377,296L376,292z" fill="#ad7e6d"/><path d="M377,296L372,298L376,292z" fill="#ae7f6e"/><path d="M391,280L393,287L387,280z" fill="#a67969"/><path d="M393,287L385,290L387,280z" fill="#a67a69"/><path d="M393,287L391,280L403,279z" fill="#a87b6a"/><path d="M399,292L393,287L403,279z" fill="#a07565"/><path d="M393,287L399,292L398,291z" fill="#a17565"/><path d="M392,295L393,287L398,291z" fill="#a47867"/><path d="M389,294L380,296L383,290z" fill="#9e7364"/><path d="M385,290L389,294L383,290z" fill="#9f7464"/><path d="M380,296L389,294L380,303z" fill="#ac7e6c"/><path d="M393,287L389,294L385,290z" fill="#9f7464"/><path d="M392,295L389,294L393,287z" fill="#a27666"/><path d="M380,303L389,294L390,305z" fill="#a77a6a"/><path d="M389,294L392,295L390,305z" fill="#a67969"/><path d="M599,268L593,261L598,254z" fill="#a27665"/><path d="M592,264L593,261L599,268z" fill="#a17564"/><path d="M593,261L591,257L598,254z" fill="#a47767"/><path d="M593,261L589,262L591,257z" fill="#a77968"/><path d="M593,261L592,264L589,262z" fill="#9f7363"/><path d="M486,301L476,302L479,292z" fill="#a37666"/><path d="M486,301L485,303L476,302z" fill="#9b7161"/><path d="M486,306L486,301L491,306z" fill="#a07464"/><path d="M485,303L486,301L486,306z" fill="#a87a69"/><path d="M664,248L661,252L659,248z" fill="#9c7262"/><path d="M664,248L659,248L688,245z" fill="#ab7c6b"/><path d="M673,248L664,248L688,245z" fill="#a17565"/><path d="M659,251L655,251L659,248z" fill="#ae7e6d"/><path d="M661,252L659,251L659,248z" fill="#9b7161"/><path d="M658,255L659,259L657,259z" fill="#9a7060"/><path d="M658,255L659,251L661,252z" fill="#9a7060"/><path d="M655,251L658,255L657,259z" fill="#a67968"/><path d="M659,251L658,255L655,251z" fill="#a67968"/><path d="M666,255L664,248L670,252z" fill="#a07564"/><path d="M664,248L666,255L661,252z" fill="#a47766"/><path d="M631,255L631,261L628,256z" fill="#9a7060"/><path d="M631,261L628,261L628,256z" fill="#9a7060"/><path d="M631,261L631,255L633,259z" fill="#a97b6a"/><path d="M631,267L631,261L633,267z" fill="#ab7c6b"/><path d="M215,237L219,234L218,237z" fill="#9e7566"/><path d="M218,229L219,234L215,237z" fill="#aa7e6e"/><path d="M219,234L218,229L220,230z" fill="#ab7f6f"/><path d="M219,234L227,238L218,237z" fill="#a67c6c"/><path d="M227,238L219,234L220,230z" fill="#aa7f6f"/><path d="M226,219L231,220L231,231z" fill="#aa7e6e"/><path d="M231,220L233,223L231,231z" fill="#ae8171"/><path d="M231,220L226,219L235,218z" fill="#aa7f6f"/><path d="M233,223L231,220L235,218z" fill="#ad8170"/><path d="M206,221L197,215L204,209z" fill="#a87d6d"/><path d="M204,222L197,215L206,221z" fill="#ac8070"/><path d="M259,255L263,250L265,253z" fill="#9d7566"/><path d="M259,255L258,252L263,250z" fill="#9d7566"/><path d="M267,258L259,255L265,253z" fill="#b18372"/><path d="M256,256L259,255L262,263z" fill="#a67b6b"/><path d="M259,255L267,258L262,263z" fill="#af8271"/><path d="M299,302L303,302L297,311z" fill="#ae806f"/><path d="M296,298L297,298L297,298z" fill="#9d7465"/><path d="M299,302L296,298L297,298z" fill="#ab7e6e"/><path d="M296,298L299,302L292,303z" fill="#ae8170"/><path d="M293,297L296,298L292,303z" fill="#9e7565"/><path d="M297,298L296,298L293,297z" fill="#9d7465"/><path d="M314,312L314,314L308,314z" fill="#9d7364"/><path d="M308,314L314,314L318,316z" fill="#a97d6c"/><path d="M314,314L316,313L318,316z" fill="#ad806f"/><path d="M277,241L267,239L267,238z" fill="#ad806f"/><path d="M277,241L267,238L288,237z" fill="#b18372"/><path d="M270,249L277,241L279,244z" fill="#9f7566"/><path d="M286,244L277,241L288,237z" fill="#a17767"/><path d="M279,244L277,241L286,244z" fill="#9f7666"/><path d="M268,246L263,250L263,246z" fill="#b38473"/><path d="M268,246L270,249L263,250z" fill="#aa7e6e"/><path d="M267,239L268,246L263,246z" fill="#aa7e6e"/><path d="M277,241L268,246L267,239z" fill="#a77c6c"/><path d="M268,246L277,241L270,249z" fill="#ab7f6e"/><path d="M293,270L289,268L290,264z" fill="#aa7e6d"/><path d="M296,256L293,270L290,264z" fill="#ac7f6f"/><path d="M298,272L293,270L296,256z" fill="#a27868"/><path d="M293,270L289,275L289,268z" fill="#a37869"/><path d="M289,275L293,270L297,278z" fill="#a97d6c"/><path d="M293,270L298,272L297,278z" fill="#a57a6a"/><path d="M299,276L301,279L297,278z" fill="#a67b6a"/><path d="M298,272L299,276L297,278z" fill="#ad7f6f"/><path d="M301,279L299,276L304,278z" fill="#a77b6b"/><path d="M308,274L299,273L311,270z" fill="#b18372"/><path d="M299,273L299,276L298,272z" fill="#a77b6b"/><path d="M299,273L308,274L304,278z" fill="#b08271"/><path d="M299,276L299,273L304,278z" fill="#b08271"/><path d="M302,251L295,253L298,247z" fill="#ab7e6e"/><path d="M302,251L301,253L295,253z" fill="#af8170"/><path d="M303,249L302,251L298,247z" fill="#a27868"/><path d="M305,253L302,251L303,249z" fill="#9d7465"/><path d="M301,253L302,251L305,253z" fill="#ab7e6e"/><path d="M309,261L301,253L305,253z" fill="#a57a6a"/><path d="M312,261L309,261L312,256z" fill="#9d7364"/><path d="M309,261L305,253L312,256z" fill="#a97d6c"/><path d="M301,253L309,261L296,256z" fill="#a57a6a"/><path d="M309,261L298,272L296,256z" fill="#a57a6a"/><path d="M309,261L299,273L298,272z" fill="#9f7666"/><path d="M309,261L312,261L311,270z" fill="#9d7364"/><path d="M299,273L309,261L311,270z" fill="#a37868"/><path d="M271,294L274,296L271,296z" fill="#af8271"/><path d="M271,294L275,290L274,296z" fill="#b28473"/><path d="M271,294L271,296L264,287z" fill="#a07667"/><path d="M274,286L271,294L264,287z" fill="#9e7566"/><path d="M275,290L271,294L274,286z" fill="#9d7465"/><path d="M246,240L238,242L236,240z" fill="#9e7566"/><path d="M238,242L246,240L244,246z" fill="#b38574"/><path d="M236,240L238,242L233,245z" fill="#9e7566"/><path d="M242,250L238,242L244,246z" fill="#ab7f6f"/><path d="M238,242L235,252L233,245z" fill="#a07768"/><path d="M238,242L242,250L235,252z" fill="#b18372"/><path d="M242,250L245,254L241,257z" fill="#a77c6c"/><path d="M248,250L245,254L242,250z" fill="#a77c6c"/><path d="M245,254L251,257L241,257z" fill="#a57a6b"/><path d="M245,254L248,250L251,257z" fill="#a37969"/><path d="M258,252L255,242L259,245z" fill="#a97d6d"/><path d="M248,250L255,242L258,252z" fill="#a87d6d"/><path d="M255,242L248,250L250,242z" fill="#ae8170"/><path d="M259,245L255,242L267,238z" fill="#aa7e6e"/><path d="M267,238L255,242L248,227z" fill="#ab7f6f"/><path d="M255,242L250,242L248,227z" fill="#ad8070"/><path d="M206,238L207,237L209,244z" fill="#a87d6d"/><path d="M207,237L215,237L209,244z" fill="#a77c6c"/><path d="M215,237L207,237L208,236z" fill="#b18473"/><path d="M202,237L206,238L204,245z" fill="#ac8070"/><path d="M200,235L202,237L191,234z" fill="#ac8070"/><path d="M202,237L204,245L191,234z" fill="#aa7f6f"/><path d="M208,235L202,237L200,235z" fill="#ac8070"/><path d="M206,238L202,237L208,235z" fill="#b18373"/><path d="M437,308L437,308L438,311z" fill="#a27665"/><path d="M437,308L437,308L437,308z" fill="#a27665"/><path d="M435,303L437,308L434,303z" fill="#9b7161"/><path d="M435,303L436,303L437,308z" fill="#a07564"/><path d="M435,299L435,303L434,303z" fill="#9b7161"/><path d="M436,303L435,303L435,299z" fill="#a27666"/><path d="M431,303L435,299L434,303z" fill="#ad7e6c"/><path d="M429,302L431,303L426,312z" fill="#9b7161"/><path d="M435,299L432,297L434,295z" fill="#a17564"/><path d="M431,303L432,297L435,299z" fill="#a97b6a"/><path d="M432,297L431,303L429,302z" fill="#9e7363"/><path d="M433,290L432,297L426,292z" fill="#a27665"/><path d="M432,297L433,290L434,295z" fill="#ab7c6b"/><path d="M417,298L411,300L409,297z" fill="#a97c6a"/><path d="M411,300L417,298L414,306z" fill="#ab7c6b"/><path d="M411,300L402,297L409,297z" fill="#a87a69"/><path d="M402,297L411,300L398,304z" fill="#a47867"/><path d="M413,311L411,300L414,306z" fill="#a77a69"/><path d="M398,304L411,300L402,313z" fill="#a47867"/><path d="M411,300L413,311L402,313z" fill="#ae7f6d"/><path d="M417,298L422,297L425,301z" fill="#af806e"/><path d="M422,297L422,291L426,292z" fill="#a77968"/><path d="M490,342L486,331L495,337z" fill="#9e7363"/><path d="M490,342L487,342L486,331z" fill="#9a7060"/><path d="M490,342L495,337L492,344z" fill="#af7f6d"/><path d="M489,345L490,342L492,344z" fill="#af7f6d"/><path d="M487,342L490,342L489,345z" fill="#9e7362"/><path d="M343,267L337,264L348,261z" fill="#b18270"/><path d="M343,267L342,269L337,264z" fill="#af806f"/><path d="M351,263L360,272L357,274z" fill="#a17666"/><path d="M360,272L351,263L361,262z" fill="#a17666"/><path d="M366,268L360,272L361,262z" fill="#a47868"/><path d="M360,272L359,283L357,274z" fill="#9c7263"/><path d="M342,269L344,277L341,279z" fill="#a87b6b"/><path d="M347,273L344,277L342,269z" fill="#9e7465"/><path d="M333,270L333,264L337,264z" fill="#a57969"/><path d="M333,264L333,270L330,266z" fill="#a57969"/><path d="M333,264L336,262L337,264z" fill="#a07666"/><path d="M336,262L333,264L332,261z" fill="#ab7e6d"/><path d="M333,264L330,266L332,261z" fill="#ac7f6e"/><path d="M324,281L327,278L328,285z" fill="#a07666"/><path d="M333,270L327,278L323,272z" fill="#ab7e6d"/><path d="M327,278L324,281L323,272z" fill="#a97c6c"/><path d="M324,281L326,289L318,281z" fill="#a77b6b"/><path d="M326,289L324,281L328,285z" fill="#a87b6b"/><path d="M333,296L326,289L328,285z" fill="#a97c6c"/><path d="M326,289L333,296L326,291z" fill="#a27767"/><path d="M347,302L351,304L347,308z" fill="#ab7d6c"/><path d="M341,303L347,302L347,308z" fill="#a17667"/><path d="M347,302L341,303L345,296z" fill="#9e7464"/><path d="M347,302L345,296L357,299z" fill="#a17666"/><path d="M351,304L347,302L357,299z" fill="#a57969"/><path d="M345,296L338,296L344,296z" fill="#9c7363"/><path d="M341,303L338,296L345,296z" fill="#ad7f6e"/><path d="M338,296L338,285L344,296z" fill="#ab7d6d"/><path d="M381,279L378,284L379,279z" fill="#9c7262"/><path d="M378,284L375,280L379,279z" fill="#a37767"/><path d="M378,284L381,279L387,280z" fill="#a67969"/><path d="M385,290L378,284L387,280z" fill="#ad7f6d"/><path d="M378,284L385,290L383,290z" fill="#ae7f6e"/><path d="M331,301L324,305L331,298z" fill="#ac7f6e"/><path d="M331,301L331,304L324,305z" fill="#9d7464"/><path d="M336,303L341,303L336,311z" fill="#a97c6c"/><path d="M331,304L336,303L336,311z" fill="#a67a6a"/><path d="M318,310L323,305L325,314z" fill="#a97c6c"/><path d="M325,314L323,305L327,312z" fill="#af816f"/><path d="M323,305L324,305L327,312z" fill="#a37868"/><path d="M321,304L319,294L324,305z" fill="#a67a6a"/><path d="M323,305L321,304L324,305z" fill="#9c7364"/><path d="M321,304L323,305L318,310z" fill="#ac7f6e"/><path d="M335,318L331,317L337,315z" fill="#9c7364"/><path d="M337,315L331,317L336,311z" fill="#a87c6b"/><path d="M331,317L328,313L336,311z" fill="#b18271"/><path d="M322,315L331,317L318,316z" fill="#ac7e6e"/><path d="M331,317L335,318L318,316z" fill="#9c7364"/><path d="M331,317L322,315L325,314z" fill="#9e7465"/><path d="M328,313L331,317L325,314z" fill="#a97d6c"/><path d="M337,316L335,318L337,315z" fill="#a57a69"/><path d="M339,314L337,316L337,315z" fill="#a97d6c"/><path d="M337,316L339,314L344,313z" fill="#ac7e6d"/><path d="M337,316L344,313L357,318z" fill="#ab7d6d"/><path d="M335,318L337,316L357,318z" fill="#9c7363"/><path d="M397,311L392,307L394,305z" fill="#ab7d6c"/><path d="M394,305L392,307L390,305z" fill="#a57868"/><path d="M392,307L390,311L390,305z" fill="#a07565"/><path d="M419,321L405,322L410,315z" fill="#a77a69"/><path d="M405,323L405,322L419,321z" fill="#ab7d6b"/><path d="M405,322L405,323L404,322z" fill="#aa7c6b"/><path d="M405,322L403,317L410,315z" fill="#9b7162"/><path d="M403,317L405,322L404,322z" fill="#a07464"/><path d="M387,318L389,316L389,318z" fill="#9b7262"/><path d="M390,311L389,316L387,318z" fill="#ac7e6c"/><path d="M397,315L393,311L397,311z" fill="#a97b6a"/><path d="M393,311L392,307L397,311z" fill="#a67969"/><path d="M392,307L393,311L390,311z" fill="#a67968"/><path d="M393,311L389,316L390,311z" fill="#b0816f"/><path d="M389,316L393,311L397,315z" fill="#ad7e6d"/><path d="M379,309L373,309L379,303z" fill="#a87b6a"/><path d="M379,303L373,309L376,301z" fill="#af806f"/><path d="M373,309L379,309L379,311z" fill="#a07565"/><path d="M373,309L366,301L376,301z" fill="#aa7c6b"/><path d="M364,310L373,309L369,311z" fill="#a97c6b"/><path d="M373,309L364,310L366,301z" fill="#a97c6b"/><path d="M394,320L396,323L389,318z" fill="#9d7363"/><path d="M396,323L398,325L399,329z" fill="#a17666"/><path d="M405,323L398,325L404,322z" fill="#af806e"/><path d="M398,325L405,323L399,329z" fill="#9c7262"/><path d="M360,296L361,302L357,299z" fill="#9d7363"/><path d="M361,302L351,304L357,299z" fill="#9c7263"/><path d="M351,304L361,302L352,313z" fill="#aa7d6c"/><path d="M361,302L364,310L352,313z" fill="#a87b6b"/><path d="M394,296L394,305L390,305z" fill="#ac7e6d"/><path d="M392,295L394,296L390,305z" fill="#ac7e6d"/><path d="M394,305L394,296L398,304z" fill="#a57968"/><path d="M394,296L402,297L398,304z" fill="#a77a69"/><path d="M402,297L394,296L399,292z" fill="#a77a69"/><path d="M399,292L394,296L398,291z" fill="#9e7363"/><path d="M394,296L392,295L398,291z" fill="#ac7e6d"/><path d="M670,249L673,248L670,252z" fill="#af7f6d"/><path d="M664,248L670,249L670,252z" fill="#a37666"/><path d="M670,249L664,248L673,248z" fill="#9a7060"/><path d="M670,255L666,255L670,252z" fill="#ac7d6b"/><path d="M666,255L670,255L667,259z" fill="#9b7061"/><path d="M667,259L670,255L675,260z" fill="#9d7262"/><path d="M670,255L673,248L675,260z" fill="#a07464"/><path d="M673,248L670,255L670,252z" fill="#ad7e6c"/><path d="M663,259L658,255L661,252z" fill="#9f7463"/><path d="M666,255L663,259L661,252z" fill="#a87a69"/><path d="M658,255L663,259L659,259z" fill="#9a7060"/><path d="M659,259L663,259L663,262z" fill="#ac7d6b"/><path d="M663,259L667,259L663,262z" fill="#ac7d6b"/><path d="M663,259L666,255L667,259z" fill="#9b7161"/><path d="M636,262L632,261L633,259z" fill="#a77968"/><path d="M632,261L631,261L633,259z" fill="#ad7e6c"/><path d="M632,261L636,262L633,267z" fill="#a57867"/><path d="M631,261L632,261L633,267z" fill="#a57867"/><path d="M628,261L630,261L631,267z" fill="#9d7262"/><path d="M630,261L631,261L631,267z" fill="#9a7060"/><path d="M631,261L630,261L628,261z" fill="#a77968"/><path d="M197,214L199,208L204,209z" fill="#b08372"/><path d="M197,215L197,214L204,209z" fill="#b38574"/><path d="M195,225L197,215L204,222z" fill="#ac806f"/><path d="M188,232L195,225L191,234z" fill="#a77c6c"/><path d="M195,225L188,232L185,224z" fill="#b18373"/><path d="M195,225L200,235L191,234z" fill="#a57b6b"/><path d="M195,225L204,222L200,235z" fill="#a47a6b"/><path d="M197,215L195,225L188,216z" fill="#b08372"/><path d="M195,225L185,224L185,220z" fill="#a17768"/><path d="M188,216L195,225L185,220z" fill="#af8272"/><path d="M258,252L257,254L256,255z" fill="#9d7566"/><path d="M259,255L257,254L258,252z" fill="#9f7666"/><path d="M257,254L256,256L256,255z" fill="#a87d6d"/><path d="M257,254L259,255L256,256z" fill="#a97d6d"/><path d="M309,309L308,314L297,311z" fill="#ab7e6d"/><path d="M303,302L309,309L297,311z" fill="#a77b6b"/><path d="M309,309L303,302L307,300z" fill="#a77b6b"/><path d="M309,309L314,312L308,314z" fill="#a77b6b"/><path d="M304,299L299,302L297,298z" fill="#ac7f6e"/><path d="M304,299L303,302L299,302z" fill="#ae806f"/><path d="M304,296L304,299L297,298z" fill="#aa7e6d"/><path d="M304,299L304,296L307,300z" fill="#af8170"/><path d="M303,302L304,299L307,300z" fill="#b08271"/><path d="M314,314L314,312L316,313z" fill="#9d7364"/><path d="M314,312L314,314L314,312z" fill="#a97d6c"/><path d="M314,312L318,310L316,313z" fill="#9d7364"/><path d="M318,310L314,312L314,312z" fill="#b08170"/><path d="M207,237L206,238L208,235z" fill="#b08372"/><path d="M207,237L207,237L206,238z" fill="#9e7566"/><path d="M207,237L208,235L208,236z" fill="#a87d6d"/><path d="M207,237L207,237L208,236z" fill="#9e7566"/><path d="M437,308L432,311L434,303z" fill="#9c7262"/><path d="M437,308L432,311L437,308z" fill="#ad7e6c"/><path d="M432,311L431,303L434,303z" fill="#a87a69"/><path d="M431,303L432,311L426,312z" fill="#a57867"/><path d="M432,311L437,314L429,320z" fill="#ab7d6b"/><path d="M437,314L432,311L438,311z" fill="#ad7e6c"/><path d="M432,311L437,308L438,311z" fill="#aa7c6a"/><path d="M425,315L432,311L429,320z" fill="#9f7464"/><path d="M426,312L432,311L425,315z" fill="#a67968"/><path d="M432,297L427,300L426,292z" fill="#a47767"/><path d="M427,300L422,297L426,292z" fill="#aa7c6b"/><path d="M422,297L427,300L425,301z" fill="#a97b6a"/><path d="M427,300L429,302L425,301z" fill="#a77a69"/><path d="M427,300L432,297L429,302z" fill="#ac7d6c"/><path d="M418,295L422,297L417,298z" fill="#9b7161"/><path d="M419,290L418,295L410,289z" fill="#ae7f6d"/><path d="M422,291L418,295L419,290z" fill="#9d7363"/><path d="M422,297L418,295L422,291z" fill="#9b7161"/><path d="M418,295L409,297L410,289z" fill="#a77a69"/><path d="M418,295L417,298L409,297z" fill="#9b7161"/><path d="M347,273L344,268L351,263z" fill="#9c7363"/><path d="M351,263L344,268L348,261z" fill="#b18271"/><path d="M344,268L343,267L348,261z" fill="#ac7e6d"/><path d="M344,268L347,273L342,269z" fill="#9c7363"/><path d="M343,267L344,268L342,269z" fill="#a77b6a"/><path d="M366,274L366,268L370,274z" fill="#a17666"/><path d="M366,274L360,272L366,268z" fill="#ac7e6d"/><path d="M360,272L366,274L359,283z" fill="#ad7f6e"/><path d="M349,283L359,283L352,288z" fill="#9d7364"/><path d="M349,283L352,288L344,296z" fill="#9d7364"/><path d="M327,278L334,282L328,285z" fill="#9c7364"/><path d="M338,285L334,282L341,279z" fill="#b08270"/><path d="M334,282L333,270L341,279z" fill="#ac7e6e"/><path d="M334,282L327,278L333,270z" fill="#9f7565"/><path d="M320,291L319,292L318,281z" fill="#a77b6b"/><path d="M326,289L320,291L318,281z" fill="#a67a6a"/><path d="M320,291L326,289L326,291z" fill="#9c7364"/><path d="M319,294L320,291L326,291z" fill="#ab7e6d"/><path d="M320,291L319,294L319,292z" fill="#b18371"/><path d="M337,285L338,296L333,296z" fill="#aa7d6c"/><path d="M338,296L337,285L338,285z" fill="#ab7e6d"/><path d="M337,285L333,296L328,285z" fill="#a97d6c"/><path d="M334,282L337,285L328,285z" fill="#af8170"/><path d="M337,285L334,282L338,285z" fill="#ae806f"/><path d="M359,283L366,290L360,296z" fill="#ac7e6d"/><path d="M360,296L366,290L366,301z" fill="#a37868"/><path d="M366,290L372,298L366,301z" fill="#9c7263"/><path d="M366,290L367,290L372,298z" fill="#9c7263"/><path d="M372,298L372,291L376,292z" fill="#9c7363"/><path d="M367,290L372,291L372,298z" fill="#a47868"/><path d="M331,301L335,301L331,304z" fill="#a17767"/><path d="M335,301L336,303L331,304z" fill="#ad7f6e"/><path d="M335,301L331,301L331,298z" fill="#ac7e6e"/><path d="M333,296L335,301L331,298z" fill="#a27767"/><path d="M338,296L335,301L333,296z" fill="#a27767"/><path d="M335,301L338,296L341,303z" fill="#ab7e6d"/><path d="M336,303L335,301L341,303z" fill="#ac7f6e"/><path d="M317,299L321,304L318,303z" fill="#9f7566"/><path d="M321,304L317,299L319,294z" fill="#a57a6a"/><path d="M319,294L317,299L313,295z" fill="#a17767"/><path d="M313,295L317,299L307,300z" fill="#a47969"/><path d="M321,304L317,304L318,303z" fill="#9c7364"/><path d="M317,304L321,304L318,310z" fill="#a27868"/><path d="M317,304L309,309L307,300z" fill="#a87c6b"/><path d="M317,304L318,310L314,312z" fill="#ac7f6e"/><path d="M309,309L317,304L314,312z" fill="#a27868"/><path d="M317,299L317,304L307,300z" fill="#ae806f"/><path d="M317,304L317,299L318,303z" fill="#ad806f"/><path d="M371,313L373,309L379,311z" fill="#a37867"/><path d="M371,313L370,317L369,313z" fill="#ae806e"/><path d="M371,313L369,313L369,311z" fill="#a27766"/><path d="M373,309L371,313L369,311z" fill="#ad7f6e"/><path d="M371,313L379,311L374,320z" fill="#a27767"/><path d="M370,317L371,313L374,320z" fill="#a17666"/><path d="M390,318L389,316L397,315z" fill="#9b7262"/><path d="M394,320L390,318L397,315z" fill="#ad7f6d"/><path d="M389,316L390,318L389,318z" fill="#9b7262"/><path d="M390,318L394,320L389,318z" fill="#af806f"/><path d="M398,325L398,322L404,322z" fill="#a27766"/><path d="M398,322L398,325L396,323z" fill="#ad7e6d"/><path d="M398,322L403,317L404,322z" fill="#9b7162"/><path d="M398,322L397,315L403,317z" fill="#a67968"/><path d="M398,322L394,320L397,315z" fill="#a47868"/><path d="M394,320L398,322L396,323z" fill="#9e7464"/><path d="M364,310L363,301L366,301z" fill="#a77a6a"/><path d="M361,302L363,301L364,310z" fill="#a97c6b"/><path d="M363,301L360,296L366,301z" fill="#ab7d6c"/><path d="M363,301L361,302L360,296z" fill="#aa7d6c"/><path d="M196,211L195,208L199,208z" fill="#a77c6c"/><path d="M197,214L196,211L199,208z" fill="#9e7566"/><path d="M366,274L367,281L359,283z" fill="#a57968"/><path d="M375,280L367,281L370,274z" fill="#a77a69"/><path d="M367,281L366,274L370,274z" fill="#9d7364"/><path d="M344,277L346,282L341,279z" fill="#a87b6b"/><path d="M346,282L338,285L341,279z" fill="#b18270"/><path d="M338,285L346,282L344,296z" fill="#ab7e6d"/><path d="M346,282L349,283L344,296z" fill="#a07666"/><path d="M359,283L354,278L357,274z" fill="#9c7363"/><path d="M349,283L354,278L359,283z" fill="#9d7363"/><path d="M354,278L347,273L357,274z" fill="#aa7d6c"/><path d="M346,282L354,278L349,283z" fill="#9c7363"/><path d="M354,278L344,277L347,273z" fill="#ae806e"/><path d="M354,278L346,282L344,277z" fill="#a87b6b"/><path d="M372,291L375,290L376,292z" fill="#a57969"/><path d="M375,290L383,290L376,292z" fill="#a97b6b"/><path d="M375,290L378,284L383,290z" fill="#af806e"/><path d="M196,213L196,211L197,214z" fill="#9e7566"/><path d="M196,213L197,215L188,216z" fill="#9e7566"/><path d="M196,213L197,214L197,215z" fill="#9e7566"/><path d="M196,213L188,216L195,208z" fill="#a67c6c"/><path d="M196,211L196,213L195,208z" fill="#a77c6d"/><path d="M368,286L366,290L359,283z" fill="#b0816f"/><path d="M367,281L368,286L359,283z" fill="#b0816f"/><path d="M366,290L368,286L367,290z" fill="#9c7263"/><path d="M368,286L372,291L367,290z" fill="#9e7464"/><path d="M369,285L375,290L372,291z" fill="#a37767"/><path d="M368,286L369,285L372,291z" fill="#9f7565"/><path d="M375,290L369,285L378,284z" fill="#a27766"/><path d="M378,284L369,285L375,280z" fill="#a57969"/><path d="M369,285L367,281L375,280z" fill="#ab7d6c"/><path d="M369,285L368,286L367,281z" fill="#a57969"/></g>
  <!-- lobe ribs -->
  <g clip-path="url(#cSil)">
    <polygon fill="url(#ribs)" opacity="0.55" points="425,302 459,293 473,296 491,311 498.5,322 502,333 495,342 480.5,342 461,329 439,322 425,311"/>
  </g>
  <!-- top face -->
  <g clip-path="url(#cSil)">
  <polygon fill="#be8f7a" points="87,148 94,115 100,109 117,93 135,90 151,97 158,107 167,109 181,116 207,133 232,150 255,164 275,176 284,183 301,190 322,196 343,206 365,213 375,219 386,213 398,211 407,203 415,198.5 438,202.7 454,201 461,199 487,199.4 507,202.7 516.5,193 536,190 573,188 605,182 635,176 664,174 694,174 720,164 749,158 780,151 780,235 729,243 673,250 616,254.5 560,260 540,262.4 440,268 360,254 300,242.5 276,239 266,235.4 247,229.6 238,224 218.5,208.5 199,195 180,187.3 169,184 150,181 107,161"/>
  <g clip-path="url(#cTop)">
    <g mask="url(#mLeft)" stroke="#c4a393" stroke-width="0.3" stroke-opacity="0.35"><path d="M440,85L217,85L80,85z" fill="#b88877"/><path d="M80,153L80,285L80,85z" fill="#af8271"/><path d="M440,285L440,136L440,85z" fill="#987062"/><path d="M337,86L217,85L440,85z" fill="#bc8b7a"/><path d="M217,85L337,86L245,86z" fill="#b88877"/><path d="M80,153L81,170L80,285z" fill="#987062"/><path d="M217,85L145,85L80,85z" fill="#987062"/><path d="M81,170L81,249L80,285z" fill="#987062"/><path d="M337,86L346,89L344,93z" fill="#9d7566"/><path d="M370,268L361,284L362,266z" fill="#af8271"/><path d="M439,209L438,257L437,239z" fill="#987062"/><path d="M440,136L439,209L436,184z" fill="#987062"/><path d="M439,209L440,136L440,285z" fill="#af8271"/><path d="M438,257L439,209L440,285z" fill="#b38574"/><path d="M387,284L288,284L361,284z" fill="#b88977"/><path d="M288,284L387,284L440,285z" fill="#be8d7b"/><path d="M288,284L146,285L269,284z" fill="#987062"/><path d="M288,284L440,285L80,285z" fill="#b98978"/><path d="M146,285L288,284L80,285z" fill="#b88977"/><path d="M361,284L350,284L362,266z" fill="#9c7465"/><path d="M350,284L345,277L362,266z" fill="#b18372"/><path d="M288,284L350,284L361,284z" fill="#987062"/><path d="M350,284L288,284L307,280z" fill="#ac806f"/><path d="M81,133L81,101L83,113z" fill="#b78776"/><path d="M81,133L80,153L80,85z" fill="#987062"/><path d="M81,101L81,133L80,85z" fill="#b18473"/><path d="M218,280L245,280L269,284z" fill="#bc8b7a"/><path d="M226,89L217,85L245,86z" fill="#987062"/><path d="M228,100L226,89L230,98z" fill="#b78876"/><path d="M104,285L146,285L80,285z" fill="#987062"/><path d="M104,285L120,284L146,285z" fill="#9c7465"/><path d="M434,152L440,136L436,184z" fill="#bb8a79"/><path d="M427,177L434,152L436,184z" fill="#b18373"/><path d="M431,94L434,86L440,85z" fill="#987062"/><path d="M434,86L431,94L420,87z" fill="#ae8171"/><path d="M243,120L229,121L228,110z" fill="#a77c6c"/><path d="M316,100L321,115L310,115z" fill="#b58675"/><path d="M383,277L387,284L361,284z" fill="#c2907d"/><path d="M370,268L383,277L361,284z" fill="#9b7364"/><path d="M435,273L438,257L440,285z" fill="#bb8a79"/><path d="M393,193L380,218L375,188z" fill="#aa7e6e"/><path d="M397,180L387,178L402,165z" fill="#b38574"/><path d="M439,209L433,194L436,184z" fill="#997163"/><path d="M401,215L393,193L414,202z" fill="#a87c6c"/><path d="M393,193L401,215L380,218z" fill="#a17768"/><path d="M427,227L439,209L437,239z" fill="#ab7f6f"/><path d="M321,268L307,259L317,258z" fill="#a87c6c"/><path d="M272,281L288,284L269,284z" fill="#bb8a79"/><path d="M312,277L321,268L345,277z" fill="#c08e7c"/><path d="M312,277L350,284L307,280z" fill="#bb8b79"/><path d="M350,284L312,277L345,277z" fill="#b18372"/><path d="M155,86L161,86L162,89z" fill="#b08271"/><path d="M151,94L155,86L162,89z" fill="#987062"/><path d="M140,183L143,177L144,186z" fill="#b88877"/><path d="M109,111L117,104L120,111z" fill="#c3917e"/><path d="M117,104L109,111L107,102z" fill="#b58675"/><path d="M104,285L104,284L120,284z" fill="#bb8b79"/><path d="M427,177L415,158L430,151z" fill="#bb8b79"/><path d="M440,136L436,122L440,85z" fill="#ae8171"/><path d="M346,89L351,92L344,93z" fill="#987062"/><path d="M313,133L300,154L285,144z" fill="#c18f7d"/><path d="M267,163L272,164L272,167z" fill="#9e7566"/><path d="M300,154L285,154L285,144z" fill="#bf8d7b"/><path d="M242,87L226,89L245,86z" fill="#987062"/><path d="M243,91L242,87L245,86z" fill="#a47a6a"/><path d="M242,87L243,91L226,89z" fill="#987062"/><path d="M228,100L232,98L228,110z" fill="#bb8b79"/><path d="M232,98L228,100L230,98z" fill="#bf8d7b"/><path d="M241,98L232,98L243,91z" fill="#ad8170"/><path d="M226,89L232,98L230,98z" fill="#ac7f6f"/><path d="M243,91L232,98L226,89z" fill="#ba8a78"/><path d="M321,93L297,90L337,86z" fill="#c08e7c"/><path d="M297,90L284,87L337,86z" fill="#c08e7c"/><path d="M439,283L435,273L440,285z" fill="#a4796a"/><path d="M372,188L376,176L375,188z" fill="#b28473"/><path d="M388,179L393,193L375,188z" fill="#ac7f6f"/><path d="M393,193L388,179L397,180z" fill="#af8271"/><path d="M388,179L387,178L397,180z" fill="#b98977"/><path d="M438,257L434,249L437,239z" fill="#b68776"/><path d="M401,215L389,225L380,218z" fill="#ad8070"/><path d="M425,230L427,227L437,239z" fill="#ae8171"/><path d="M276,246L291,249L274,251z" fill="#a97d6d"/><path d="M305,273L307,259L321,268z" fill="#b28473"/><path d="M312,277L305,273L321,268z" fill="#b68775"/><path d="M305,273L312,277L307,280z" fill="#b58675"/><path d="M339,176L342,191L336,189z" fill="#a27868"/><path d="M363,200L372,188L375,188z" fill="#a67b6b"/><path d="M365,207L363,200L375,188z" fill="#9f7667"/><path d="M345,277L353,261L362,266z" fill="#a87c6c"/><path d="M340,260L353,261L345,277z" fill="#be8d7b"/><path d="M149,91L145,97L145,85z" fill="#be8d7b"/><path d="M149,91L155,86L151,94z" fill="#a87d6d"/><path d="M81,101L84,107L83,113z" fill="#b68776"/><path d="M84,107L89,107L83,113z" fill="#ac7f6f"/><path d="M81,163L81,170L80,153z" fill="#987062"/><path d="M84,163L81,163L80,153z" fill="#ab7f6f"/><path d="M81,163L83,167L81,170z" fill="#ba8a78"/><path d="M83,167L81,163L84,163z" fill="#ad8170"/><path d="M85,192L95,197L94,198z" fill="#987062"/><path d="M120,195L115,192L121,193z" fill="#987062"/><path d="M126,120L113,119L120,111z" fill="#aa7e6e"/><path d="M113,119L109,111L120,111z" fill="#aa7e6e"/><path d="M144,171L147,161L157,170z" fill="#9b7364"/><path d="M144,171L158,174L143,177z" fill="#b88877"/><path d="M158,174L144,171L157,170z" fill="#987162"/><path d="M84,114L81,133L83,113z" fill="#b88977"/><path d="M93,131L88,132L91,125z" fill="#c18f7d"/><path d="M98,124L93,131L91,125z" fill="#bb8b79"/><path d="M88,132L84,132L91,125z" fill="#bd8c7a"/><path d="M84,114L84,132L81,133z" fill="#b68776"/><path d="M84,163L89,156L92,165z" fill="#987062"/><path d="M89,156L84,163L80,153z" fill="#ac806f"/><path d="M109,111L104,104L107,102z" fill="#9d7465"/><path d="M99,132L111,132L106,145z" fill="#a27869"/><path d="M93,131L99,132L96,134z" fill="#987062"/><path d="M99,132L93,131L98,124z" fill="#bb8a79"/><path d="M116,134L117,144L106,145z" fill="#be8d7b"/><path d="M111,132L116,134L106,145z" fill="#c18f7d"/><path d="M90,117L94,123L91,125z" fill="#987162"/><path d="M94,123L98,124L91,125z" fill="#bd8c7a"/><path d="M117,104L120,101L120,111z" fill="#bb8a79"/><path d="M120,101L130,102L120,111z" fill="#c4927f"/><path d="M138,107L126,115L130,102z" fill="#b98978"/><path d="M126,115L126,120L120,111z" fill="#aa7e6e"/><path d="M130,102L126,115L120,111z" fill="#a87c6c"/><path d="M145,97L131,89L145,85z" fill="#ae8171"/><path d="M120,284L132,280L146,285z" fill="#b68776"/><path d="M132,280L135,277L146,285z" fill="#997263"/><path d="M264,274L272,281L269,284z" fill="#ac7f6f"/><path d="M245,280L264,274L269,284z" fill="#ba8a78"/><path d="M250,267L264,274L245,280z" fill="#be8d7b"/><path d="M244,274L250,267L245,280z" fill="#b48675"/><path d="M199,274L179,282L180,276z" fill="#987062"/><path d="M178,283L199,274L218,280z" fill="#987062"/><path d="M179,282L199,274L178,283z" fill="#987062"/><path d="M215,109L228,100L228,110z" fill="#a27869"/><path d="M202,87L161,86L217,85z" fill="#987062"/><path d="M202,87L189,88L161,86z" fill="#ba8a78"/><path d="M211,164L222,162L222,182z" fill="#b08372"/><path d="M222,162L227,163L222,182z" fill="#b38574"/><path d="M227,163L231,165L222,182z" fill="#987062"/><path d="M231,165L227,163L235,157z" fill="#987062"/><path d="M81,249L83,276L80,285z" fill="#987062"/><path d="M130,191L138,202L125,200z" fill="#b28473"/><path d="M85,192L85,199L83,202z" fill="#987062"/><path d="M85,199L85,192L94,198z" fill="#987062"/><path d="M84,190L83,202L82,188z" fill="#987062"/><path d="M84,190L85,192L83,202z" fill="#b18373"/><path d="M393,193L413,194L414,202z" fill="#b38574"/><path d="M413,194L393,193L397,180z" fill="#b38574"/><path d="M412,181L413,194L397,180z" fill="#b58675"/><path d="M411,178L412,181L397,180z" fill="#987062"/><path d="M430,145L432,146L430,151z" fill="#987062"/><path d="M333,99L337,86L344,93z" fill="#a37969"/><path d="M333,99L321,93L337,86z" fill="#a07768"/><path d="M316,100L324,101L321,115z" fill="#b48574"/><path d="M324,101L316,100L321,93z" fill="#987062"/><path d="M333,99L324,101L321,93z" fill="#987062"/><path d="M267,200L257,200L261,188z" fill="#af8271"/><path d="M313,151L300,154L313,133z" fill="#9d7566"/><path d="M285,144L284,153L273,153z" fill="#bf8d7b"/><path d="M285,154L284,153L285,144z" fill="#be8d7b"/><path d="M274,159L272,164L267,163z" fill="#bd8c7a"/><path d="M274,159L285,172L272,167z" fill="#ba8a78"/><path d="M272,164L274,159L272,167z" fill="#987062"/><path d="M235,124L229,121L243,120z" fill="#b08272"/><path d="M235,124L234,125L229,121z" fill="#997263"/><path d="M286,117L276,131L283,115z" fill="#997163"/><path d="M276,131L285,144L273,153z" fill="#ae8171"/><path d="M259,145L276,131L273,153z" fill="#9e7566"/><path d="M337,86L274,87L245,86z" fill="#987062"/><path d="M284,87L274,87L337,86z" fill="#ba8a78"/><path d="M316,100L314,95L321,93z" fill="#b08372"/><path d="M314,95L297,90L321,93z" fill="#987062"/><path d="M288,103L286,117L283,115z" fill="#9c7465"/><path d="M380,268L383,277L370,268z" fill="#987062"/><path d="M374,253L370,268L362,266z" fill="#b28473"/><path d="M374,253L380,268L370,268z" fill="#bb8b79"/><path d="M380,268L374,253L384,254z" fill="#b88977"/><path d="M387,178L379,177L380,166z" fill="#987062"/><path d="M379,177L376,176L380,166z" fill="#be8d7b"/><path d="M388,179L379,177L387,178z" fill="#b38574"/><path d="M376,176L379,177L375,188z" fill="#be8d7b"/><path d="M379,177L388,179L375,188z" fill="#a17768"/><path d="M360,184L342,191L339,176z" fill="#ad8070"/><path d="M360,184L352,198L342,191z" fill="#9e7566"/><path d="M363,200L360,184L372,188z" fill="#aa7e6e"/><path d="M431,259L434,249L438,257z" fill="#b58675"/><path d="M434,249L431,259L421,255z" fill="#987062"/><path d="M435,273L431,259L438,257z" fill="#bf8d7b"/><path d="M422,263L431,259L435,273z" fill="#ba8a78"/><path d="M439,283L419,278L435,273z" fill="#a77c6c"/><path d="M419,278L422,263L435,273z" fill="#ba8a78"/><path d="M419,278L439,283L440,285z" fill="#b38574"/><path d="M389,225L388,227L380,218z" fill="#ae8170"/><path d="M365,236L388,227L386,238z" fill="#987062"/><path d="M388,227L365,236L380,218z" fill="#af8271"/><path d="M395,230L389,225L401,215z" fill="#b38574"/><path d="M395,230L388,227L389,225z" fill="#b38473"/><path d="M388,227L395,230L386,238z" fill="#9c7364"/><path d="M420,241L408,257L409,232z" fill="#b18372"/><path d="M408,257L420,241L421,255z" fill="#c18f7c"/><path d="M427,227L437,208L439,209z" fill="#987062"/><path d="M421,214L437,208L427,227z" fill="#bf8d7b"/><path d="M437,208L433,194L439,209z" fill="#987062"/><path d="M417,210L401,215L414,202z" fill="#b88877"/><path d="M407,225L395,230L401,215z" fill="#c4917f"/><path d="M425,230L416,228L427,227z" fill="#b08372"/><path d="M407,225L416,228L409,232z" fill="#aa7e6e"/><path d="M416,228L420,241L409,232z" fill="#a67b6c"/><path d="M420,241L416,228L425,230z" fill="#a47a6a"/><path d="M307,259L285,262L291,249z" fill="#9f7667"/><path d="M291,249L285,262L274,251z" fill="#a27869"/><path d="M305,273L285,262L307,259z" fill="#bb8b79"/><path d="M285,262L305,273L284,269z" fill="#bb8b79"/><path d="M285,262L284,269L273,272z" fill="#b28473"/><path d="M284,269L280,277L273,272z" fill="#987062"/><path d="M272,281L280,277L288,284z" fill="#ba8a78"/><path d="M305,273L291,283L284,269z" fill="#b78876"/><path d="M280,277L291,283L288,284z" fill="#c3917e"/><path d="M291,283L280,277L284,269z" fill="#b28473"/><path d="M288,284L291,283L307,280z" fill="#b98977"/><path d="M291,283L305,273L307,280z" fill="#b98977"/><path d="M321,268L330,266L345,277z" fill="#b08372"/><path d="M330,266L340,260L345,277z" fill="#ba8a78"/><path d="M330,266L321,268L317,258z" fill="#a97d6d"/><path d="M319,253L330,266L317,258z" fill="#ae8170"/><path d="M355,230L365,236L355,238z" fill="#b38574"/><path d="M342,191L333,201L336,189z" fill="#9b7364"/><path d="M333,201L318,195L336,189z" fill="#ad8070"/><path d="M337,243L334,243L331,230z" fill="#9d7566"/><path d="M342,248L353,261L340,260z" fill="#ac7f6f"/><path d="M353,261L342,248L361,244z" fill="#b18372"/><path d="M146,97L149,91L151,94z" fill="#a97d6d"/><path d="M149,91L146,97L145,97z" fill="#bc8b79"/><path d="M150,85L149,91L145,85z" fill="#b38473"/><path d="M149,91L150,85L155,86z" fill="#c18f7d"/><path d="M155,86L150,85L161,86z" fill="#b68776"/><path d="M150,85L145,85L217,85z" fill="#987062"/><path d="M161,86L150,85L217,85z" fill="#bb8a79"/><path d="M147,161L157,162L157,170z" fill="#a37869"/><path d="M161,97L151,94L162,89z" fill="#b98977"/><path d="M196,140L199,146L186,143z" fill="#bb8b79"/><path d="M117,90L108,96L103,86z" fill="#bf8e7c"/><path d="M89,85L85,86L80,85z" fill="#987062"/><path d="M85,86L89,85L86,86z" fill="#b88977"/><path d="M84,190L85,187L85,192z" fill="#ba8a79"/><path d="M90,180L85,187L82,188z" fill="#987062"/><path d="M85,187L84,190L82,188z" fill="#987062"/><path d="M117,208L116,200L125,200z" fill="#b78876"/><path d="M116,200L120,195L125,200z" fill="#bf8e7b"/><path d="M115,192L124,188L121,193z" fill="#987062"/><path d="M126,192L130,191L125,200z" fill="#c08e7c"/><path d="M126,192L124,188L130,191z" fill="#987062"/><path d="M123,170L128,174L123,181z" fill="#9a7263"/><path d="M128,174L123,170L129,168z" fill="#a87c6c"/><path d="M123,124L113,119L126,120z" fill="#a97d6d"/><path d="M136,122L138,116L138,124z" fill="#b68776"/><path d="M137,175L144,171L143,177z" fill="#c18f7d"/><path d="M140,183L137,175L143,177z" fill="#a17868"/><path d="M136,176L137,175L140,183z" fill="#a27869"/><path d="M131,162L135,153L147,161z" fill="#c08f7c"/><path d="M144,171L131,162L147,161z" fill="#ab7f6e"/><path d="M135,153L145,152L147,161z" fill="#c08e7c"/><path d="M163,185L155,186L159,176z" fill="#c18f7d"/><path d="M158,174L153,184L143,177z" fill="#a27869"/><path d="M153,184L158,174L159,176z" fill="#987062"/><path d="M155,186L153,184L159,176z" fill="#987062"/><path d="M137,138L132,135L138,134z" fill="#9b7364"/><path d="M138,134L137,138L138,134z" fill="#987062"/><path d="M137,138L138,140L131,141z" fill="#b98978"/><path d="M132,135L137,138L131,141z" fill="#b48675"/><path d="M133,127L136,122L138,124z" fill="#c18f7d"/><path d="M136,122L133,127L133,121z" fill="#9d7466"/><path d="M138,134L133,127L138,124z" fill="#9b7364"/><path d="M132,135L133,127L138,134z" fill="#9e7566"/><path d="M133,127L132,135L123,133z" fill="#987062"/><path d="M89,118L90,117L91,125z" fill="#987062"/><path d="M84,132L89,118L91,125z" fill="#b98978"/><path d="M89,118L84,132L84,114z" fill="#be8d7b"/><path d="M84,132L83,133L81,133z" fill="#bd8c7a"/><path d="M108,152L115,160L112,162z" fill="#b38574"/><path d="M108,152L103,152L106,145z" fill="#b28473"/><path d="M103,152L108,152L101,154z" fill="#be8d7b"/><path d="M108,163L108,152L112,162z" fill="#ab7f6e"/><path d="M108,152L108,163L101,154z" fill="#987062"/><path d="M108,163L101,162L101,154z" fill="#987062"/><path d="M101,162L98,157L101,154z" fill="#a87d6d"/><path d="M89,156L98,157L92,165z" fill="#987062"/><path d="M83,143L86,152L80,153z" fill="#9f7667"/><path d="M86,152L89,156L80,153z" fill="#b88977"/><path d="M92,141L86,152L83,143z" fill="#a07767"/><path d="M94,143L86,152L92,141z" fill="#987062"/><path d="M99,109L104,104L109,111z" fill="#a27868"/><path d="M99,109L105,117L97,111z" fill="#9e7566"/><path d="M105,117L99,109L109,111z" fill="#a27869"/><path d="M99,132L107,128L111,132z" fill="#987062"/><path d="M107,128L98,124L108,126z" fill="#b88877"/><path d="M107,128L99,132L98,124z" fill="#be8d7b"/><path d="M116,134L119,141L117,144z" fill="#b68776"/><path d="M119,141L124,145L117,144z" fill="#a67b6b"/><path d="M113,119L110,127L108,126z" fill="#b28473"/><path d="M110,127L107,128L108,126z" fill="#b78876"/><path d="M107,128L110,127L111,132z" fill="#987062"/><path d="M98,124L103,120L108,126z" fill="#9d7465"/><path d="M105,117L103,120L97,111z" fill="#ae8171"/><path d="M103,120L94,123L97,111z" fill="#b58675"/><path d="M94,123L103,120L98,124z" fill="#c3917e"/><path d="M113,119L106,118L109,111z" fill="#a67b6b"/><path d="M106,118L105,117L109,111z" fill="#c2907e"/><path d="M106,118L113,119L108,126z" fill="#9c7365"/><path d="M103,120L106,118L108,126z" fill="#9e7566"/><path d="M106,118L103,120L105,117z" fill="#c18f7d"/><path d="M136,122L135,117L138,116z" fill="#987062"/><path d="M135,117L136,122L133,121z" fill="#987062"/><path d="M135,117L126,115L138,107z" fill="#b38574"/><path d="M135,117L139,112L138,116z" fill="#987062"/><path d="M139,112L135,117L138,107z" fill="#9c7365"/><path d="M126,115L129,119L126,120z" fill="#bc8b79"/><path d="M133,127L129,119L133,121z" fill="#b58675"/><path d="M129,119L135,117L133,121z" fill="#af8271"/><path d="M135,117L129,119L126,115z" fill="#bb8b79"/><path d="M129,119L123,124L126,120z" fill="#9b7364"/><path d="M129,119L133,127L123,124z" fill="#bd8c7a"/><path d="M131,89L131,89L145,85z" fill="#987062"/><path d="M129,89L131,89L131,89z" fill="#987062"/><path d="M129,89L117,90L103,86z" fill="#ba8a78"/><path d="M129,89L103,86L145,85z" fill="#b58775"/><path d="M131,89L129,89L145,85z" fill="#bb8b79"/><path d="M155,265L152,263L155,261z" fill="#a87d6d"/><path d="M209,164L207,162L211,164z" fill="#987062"/><path d="M209,164L211,164L222,182z" fill="#ab7f6f"/><path d="M125,238L124,240L113,230z" fill="#987062"/><path d="M125,233L125,238L113,230z" fill="#b68776"/><path d="M255,255L264,274L250,267z" fill="#b18372"/><path d="M255,255L271,254L264,274z" fill="#b18372"/><path d="M264,274L271,254L273,272z" fill="#af8271"/><path d="M285,262L271,254L274,251z" fill="#a67b6b"/><path d="M271,254L285,262L273,272z" fill="#a67b6b"/><path d="M276,226L269,235L273,218z" fill="#a27869"/><path d="M242,200L237,191L252,190z" fill="#b08372"/><path d="M237,191L242,200L237,197z" fill="#a87c6d"/><path d="M197,194L185,194L193,188z" fill="#a97d6d"/><path d="M195,207L206,202L204,209z" fill="#c08e7c"/><path d="M215,109L213,102L228,100z" fill="#c18f7d"/><path d="M229,121L219,120L228,110z" fill="#987062"/><path d="M213,102L212,110L210,100z" fill="#b18372"/><path d="M212,110L213,102L215,109z" fill="#ba8a78"/><path d="M215,88L202,87L217,85z" fill="#a27869"/><path d="M215,88L213,102L210,100z" fill="#ae8171"/><path d="M226,89L215,88L217,85z" fill="#9a7264"/><path d="M228,100L215,88L226,89z" fill="#b18373"/><path d="M213,102L215,88L228,100z" fill="#b18373"/><path d="M207,162L221,155L211,164z" fill="#ab7f6f"/><path d="M221,155L222,162L211,164z" fill="#9e7566"/><path d="M199,146L221,155L207,162z" fill="#b38574"/><path d="M235,157L221,155L230,134z" fill="#a37969"/><path d="M227,163L221,155L235,157z" fill="#a47a6a"/><path d="M222,162L221,155L227,163z" fill="#a4796a"/><path d="M252,190L253,187L261,188z" fill="#c5927f"/><path d="M237,191L253,187L252,190z" fill="#b78877"/><path d="M268,156L259,145L273,153z" fill="#a97d6d"/><path d="M274,159L268,156L273,153z" fill="#a07768"/><path d="M268,156L274,159L267,163z" fill="#987062"/><path d="M87,268L89,274L83,274z" fill="#bd8c7a"/><path d="M89,274L83,276L83,274z" fill="#987062"/><path d="M90,261L94,263L92,267z" fill="#a07767"/><path d="M111,266L114,266L114,267z" fill="#b38574"/><path d="M94,263L97,267L92,267z" fill="#9a7263"/><path d="M97,267L94,263L101,262z" fill="#987062"/><path d="M104,284L109,279L120,284z" fill="#a47a6a"/><path d="M106,280L109,279L104,284z" fill="#c08e7c"/><path d="M106,280L100,282L100,274z" fill="#9f7667"/><path d="M100,282L104,284L104,285z" fill="#b08272"/><path d="M100,282L106,280L104,284z" fill="#b38574"/><path d="M136,189L138,202L130,191z" fill="#ab7f6f"/><path d="M81,249L82,227L84,236z" fill="#bc8c7a"/><path d="M123,225L125,233L113,230z" fill="#ba8a78"/><path d="M95,197L97,202L94,198z" fill="#9e7566"/><path d="M111,226L104,221L114,217z" fill="#be8d7b"/><path d="M371,109L380,105L381,124z" fill="#a57a6b"/><path d="M437,208L423,194L433,194z" fill="#be8d7b"/><path d="M409,169L415,158L427,177z" fill="#b68776"/><path d="M415,158L409,169L402,165z" fill="#b08372"/><path d="M411,178L412,177L412,181z" fill="#987062"/><path d="M412,177L409,169L427,177z" fill="#987062"/><path d="M423,146L430,142L430,145z" fill="#c08e7c"/><path d="M423,146L430,145L430,151z" fill="#987062"/><path d="M432,146L432,150L430,151z" fill="#be8d7b"/><path d="M434,152L435,145L440,136z" fill="#987062"/><path d="M432,150L435,145L434,152z" fill="#9c7465"/><path d="M435,145L432,150L432,146z" fill="#ba8a78"/><path d="M435,145L430,137L440,136z" fill="#c3917e"/><path d="M435,145L430,142L430,137z" fill="#b18473"/><path d="M430,142L435,145L430,145z" fill="#b48675"/><path d="M435,145L432,146L430,145z" fill="#987062"/><path d="M338,109L332,103L333,102z" fill="#ae8171"/><path d="M324,101L332,103L321,115z" fill="#bc8b79"/><path d="M332,103L333,99L333,102z" fill="#c08f7c"/><path d="M332,103L324,101L333,99z" fill="#bd8c7a"/><path d="M257,200L258,212L251,213z" fill="#a77c6c"/><path d="M267,200L258,212L257,200z" fill="#be8d7b"/><path d="M280,156L284,153L285,154z" fill="#bd8c7a"/><path d="M280,156L285,154L285,172z" fill="#997263"/><path d="M274,159L280,156L285,172z" fill="#a87c6d"/><path d="M284,153L280,156L273,153z" fill="#c3917e"/><path d="M280,156L274,159L273,153z" fill="#b78876"/><path d="M249,129L242,126L243,120z" fill="#987062"/><path d="M245,143L235,157L230,134z" fill="#af8271"/><path d="M301,121L313,133L285,144z" fill="#aa7e6e"/><path d="M276,131L301,121L285,144z" fill="#b18372"/><path d="M301,121L276,131L286,117z" fill="#b88877"/><path d="M313,133L301,121L310,115z" fill="#ab7f6f"/><path d="M325,128L324,141L313,133z" fill="#ac806f"/><path d="M314,95L312,98L297,90z" fill="#b68776"/><path d="M297,90L295,90L284,87z" fill="#987062"/><path d="M367,246L374,253L362,266z" fill="#ac806f"/><path d="M353,261L367,246L362,266z" fill="#a67b6b"/><path d="M367,246L353,261L361,244z" fill="#b78877"/><path d="M416,260L408,257L421,255z" fill="#b58675"/><path d="M419,278L416,260L422,263z" fill="#9f7667"/><path d="M384,266L380,268L384,254z" fill="#997163"/><path d="M380,268L386,277L383,277z" fill="#987062"/><path d="M384,266L386,277L380,268z" fill="#987162"/><path d="M370,177L376,176L372,188z" fill="#bf8e7b"/><path d="M360,184L370,177L372,188z" fill="#b68775"/><path d="M359,164L360,184L339,176z" fill="#ba8a78"/><path d="M359,164L370,177L360,184z" fill="#b18473"/><path d="M360,184L355,198L352,198z" fill="#b88977"/><path d="M355,198L360,184L363,200z" fill="#af8271"/><path d="M431,259L421,258L421,255z" fill="#987062"/><path d="M421,258L431,259L422,263z" fill="#bf8e7c"/><path d="M421,258L416,260L421,255z" fill="#987062"/><path d="M416,260L421,258L422,263z" fill="#a87d6d"/><path d="M431,243L425,230L437,239z" fill="#a77c6c"/><path d="M431,243L420,241L425,230z" fill="#a67b6b"/><path d="M434,249L431,243L437,239z" fill="#b38574"/><path d="M431,243L434,249L421,255z" fill="#b18372"/><path d="M420,241L431,243L421,255z" fill="#bb8a79"/><path d="M403,232L407,225L409,232z" fill="#997263"/><path d="M407,225L403,232L395,230z" fill="#c4927f"/><path d="M408,257L403,232L409,232z" fill="#9e7566"/><path d="M388,247L403,232L408,257z" fill="#af8171"/><path d="M395,230L403,232L386,238z" fill="#bf8e7c"/><path d="M403,232L388,247L386,238z" fill="#c3907e"/><path d="M417,217L416,228L407,225z" fill="#b98977"/><path d="M417,217L417,210L421,214z" fill="#987062"/><path d="M417,217L421,214L427,227z" fill="#ab7f6f"/><path d="M416,228L417,217L427,227z" fill="#b58675"/><path d="M417,210L417,217L401,215z" fill="#b78876"/><path d="M417,217L407,225L401,215z" fill="#c4917f"/><path d="M274,275L280,277L272,281z" fill="#987062"/><path d="M280,277L274,275L273,272z" fill="#9e7566"/><path d="M264,274L274,275L272,281z" fill="#a77c6c"/><path d="M274,275L264,274L273,272z" fill="#c08e7c"/><path d="M352,205L355,230L344,206z" fill="#b18373"/><path d="M352,205L363,200L365,207z" fill="#a07767"/><path d="M352,205L355,198L363,200z" fill="#c3907e"/><path d="M355,198L352,205L352,198z" fill="#c4917f"/><path d="M365,236L371,216L380,218z" fill="#ba8a78"/><path d="M355,230L371,216L365,236z" fill="#c4917f"/><path d="M347,239L337,243L331,230z" fill="#a97d6d"/><path d="M355,230L347,239L331,230z" fill="#b68776"/><path d="M347,239L355,230L355,238z" fill="#987062"/><path d="M347,239L342,248L337,243z" fill="#ba8a78"/><path d="M361,244L347,239L355,238z" fill="#b28473"/><path d="M342,248L347,239L361,244z" fill="#a87c6c"/><path d="M355,230L329,221L344,206z" fill="#b38574"/><path d="M329,221L332,212L344,206z" fill="#a27869"/><path d="M329,221L355,230L331,230z" fill="#b48675"/><path d="M332,212L329,221L328,211z" fill="#be8d7b"/><path d="M317,228L329,221L331,230z" fill="#ba8a78"/><path d="M333,201L321,205L318,195z" fill="#ba8a78"/><path d="M323,236L334,243L319,253z" fill="#a17768"/><path d="M308,237L323,236L319,253z" fill="#b18372"/><path d="M334,243L323,236L331,230z" fill="#aa7e6e"/><path d="M336,254L342,248L340,260z" fill="#ad8070"/><path d="M330,266L336,254L340,260z" fill="#af8271"/><path d="M336,254L330,266L319,253z" fill="#b18372"/><path d="M158,106L146,97L151,94z" fill="#a3796a"/><path d="M161,97L158,106L151,94z" fill="#af8271"/><path d="M189,88L186,88L161,86z" fill="#c18f7d"/><path d="M168,92L161,97L162,89z" fill="#987062"/><path d="M209,164L189,161L207,162z" fill="#987062"/><path d="M189,159L189,161L186,159z" fill="#b48574"/><path d="M189,159L199,146L207,162z" fill="#b38574"/><path d="M189,161L189,159L207,162z" fill="#b88977"/><path d="M91,105L99,109L97,111z" fill="#a57a6a"/><path d="M99,109L91,105L95,103z" fill="#bc8b7a"/><path d="M95,103L91,105L89,99z" fill="#997163"/><path d="M85,100L91,105L89,107z" fill="#b38574"/><path d="M91,105L85,100L89,99z" fill="#9d7566"/><path d="M104,104L99,103L103,100z" fill="#a07768"/><path d="M99,109L99,103L104,104z" fill="#ab7f6f"/><path d="M99,103L99,109L95,103z" fill="#b98978"/><path d="M104,104L105,99L107,102z" fill="#ba8a78"/><path d="M105,99L104,104L103,100z" fill="#987062"/><path d="M115,94L108,96L117,90z" fill="#987062"/><path d="M87,99L85,100L81,101z" fill="#987062"/><path d="M85,100L87,99L89,99z" fill="#987062"/><path d="M84,107L84,105L89,107z" fill="#987062"/><path d="M84,105L85,100L89,107z" fill="#a67b6b"/><path d="M84,105L84,107L81,101z" fill="#a57b6b"/><path d="M85,100L84,105L81,101z" fill="#bf8e7c"/><path d="M95,99L95,103L89,99z" fill="#a37969"/><path d="M94,93L95,99L89,99z" fill="#987062"/><path d="M91,169L90,170L83,167z" fill="#ba8a78"/><path d="M91,169L84,163L92,165z" fill="#a57a6b"/><path d="M91,169L83,167L84,163z" fill="#9c7465"/><path d="M98,184L99,176L103,177z" fill="#b08372"/><path d="M87,174L90,180L82,188z" fill="#987062"/><path d="M98,184L105,189L95,197z" fill="#c2907e"/><path d="M105,189L98,184L103,177z" fill="#b38574"/><path d="M111,182L105,189L103,177z" fill="#ac806f"/><path d="M111,177L123,170L123,181z" fill="#987162"/><path d="M123,170L111,177L112,162z" fill="#ac7f6f"/><path d="M111,177L111,182L103,177z" fill="#a57a6b"/><path d="M111,177L108,163L112,162z" fill="#b38473"/><path d="M124,188L113,183L123,181z" fill="#c3907e"/><path d="M113,183L124,188L115,192z" fill="#c2907e"/><path d="M113,183L111,177L123,181z" fill="#987062"/><path d="M111,177L113,183L111,182z" fill="#987062"/><path d="M105,210L117,208L114,217z" fill="#9a7263"/><path d="M105,210L100,215L101,210z" fill="#c5927f"/><path d="M104,221L105,210L114,217z" fill="#a57a6b"/><path d="M100,215L105,210L104,221z" fill="#ab7f6f"/><path d="M114,195L115,192L120,195z" fill="#987062"/><path d="M116,200L114,195L120,195z" fill="#c5927f"/><path d="M114,195L116,200L111,196z" fill="#b38574"/><path d="M120,195L125,192L125,200z" fill="#be8d7b"/><path d="M125,192L126,192L125,200z" fill="#bd8c7a"/><path d="M125,192L120,195L121,193z" fill="#987062"/><path d="M124,188L125,192L121,193z" fill="#987062"/><path d="M126,192L125,192L124,188z" fill="#987162"/><path d="M130,181L136,189L130,191z" fill="#9f7667"/><path d="M130,181L136,176L140,183z" fill="#a37969"/><path d="M136,189L130,181L140,183z" fill="#9f7667"/><path d="M124,188L130,181L130,191z" fill="#ad8070"/><path d="M133,173L128,174L129,168z" fill="#b58675"/><path d="M133,173L137,175L136,176z" fill="#aa7e6e"/><path d="M130,181L133,173L136,176z" fill="#b68776"/><path d="M133,173L130,181L128,174z" fill="#987062"/><path d="M137,175L133,173L144,171z" fill="#c08e7c"/><path d="M131,162L133,173L129,168z" fill="#bd8c7a"/><path d="M133,173L131,162L144,171z" fill="#bb8b79"/><path d="M141,149L138,140L142,143z" fill="#b58675"/><path d="M138,140L141,149L131,141z" fill="#ad8070"/><path d="M164,148L152,150L159,143z" fill="#987062"/><path d="M152,150L157,162L147,161z" fill="#a77c6c"/><path d="M145,152L152,150L147,161z" fill="#b78876"/><path d="M155,186L164,190L162,193z" fill="#bb8a79"/><path d="M163,185L164,190L155,186z" fill="#9c7365"/><path d="M166,176L163,185L159,176z" fill="#c28f7d"/><path d="M163,185L166,176L170,176z" fill="#c2907d"/><path d="M166,176L158,174L157,170z" fill="#997163"/><path d="M158,174L166,176L159,176z" fill="#987062"/><path d="M172,187L163,185L170,176z" fill="#987062"/><path d="M172,187L164,190L163,185z" fill="#987062"/><path d="M168,92L168,102L161,97z" fill="#987062"/><path d="M161,130L168,126L170,127z" fill="#be8d7b"/><path d="M163,124L162,125L155,124z" fill="#987062"/><path d="M168,126L162,125L163,124z" fill="#987062"/><path d="M122,126L133,127L123,133z" fill="#c4927f"/><path d="M133,127L122,126L123,124z" fill="#c5927f"/><path d="M123,124L122,126L113,119z" fill="#ba8a78"/><path d="M92,113L89,118L84,114z" fill="#a4796a"/><path d="M89,107L92,113L83,113z" fill="#c5927f"/><path d="M92,113L84,114L83,113z" fill="#b88977"/><path d="M89,118L92,113L90,117z" fill="#987062"/><path d="M92,113L91,105L97,111z" fill="#a57a6b"/><path d="M91,105L92,113L89,107z" fill="#c5927f"/><path d="M94,123L92,113L97,111z" fill="#987062"/><path d="M92,113L94,123L90,117z" fill="#987062"/><path d="M89,136L84,132L88,132z" fill="#9f7667"/><path d="M89,136L92,141L83,143z" fill="#bf8d7b"/><path d="M94,135L94,143L92,141z" fill="#9d7466"/><path d="M94,135L93,131L96,134z" fill="#987062"/><path d="M96,134L99,132L106,145z" fill="#a57a6b"/><path d="M94,143L96,134L106,145z" fill="#a17868"/><path d="M99,132L96,134L96,134z" fill="#be8d7b"/><path d="M96,134L94,135L96,134z" fill="#be8d7b"/><path d="M94,135L96,134L94,143z" fill="#b48574"/><path d="M103,152L97,147L106,145z" fill="#a17868"/><path d="M97,147L94,143L106,145z" fill="#987062"/><path d="M96,167L99,161L101,162z" fill="#987062"/><path d="M99,161L98,157L101,162z" fill="#9d7465"/><path d="M99,161L96,167L92,165z" fill="#a87c6c"/><path d="M98,157L99,161L92,165z" fill="#c18f7d"/><path d="M119,141L121,133L123,133z" fill="#bd8c7a"/><path d="M121,133L119,141L116,134z" fill="#bc8b79"/><path d="M121,133L122,126L123,133z" fill="#b98978"/><path d="M140,110L138,107L142,108z" fill="#987062"/><path d="M140,110L139,112L138,107z" fill="#987062"/><path d="M138,107L140,110L138,107z" fill="#987062"/><path d="M138,107L143,105L142,108z" fill="#987062"/><path d="M143,105L157,109L142,108z" fill="#987062"/><path d="M146,97L145,100L145,97z" fill="#b58675"/><path d="M158,106L145,100L146,97z" fill="#987062"/><path d="M145,100L158,106L157,109z" fill="#b88977"/><path d="M143,105L145,100L157,109z" fill="#b98977"/><path d="M134,100L138,107L130,102z" fill="#a4796a"/><path d="M134,100L138,107L138,107z" fill="#987062"/><path d="M145,100L134,100L145,97z" fill="#a97d6d"/><path d="M134,100L143,105L138,107z" fill="#9c7365"/><path d="M134,100L145,100L143,105z" fill="#aa7e6e"/><path d="M127,97L134,100L130,102z" fill="#a17768"/><path d="M180,272L179,263L182,268z" fill="#ab7f6f"/><path d="M151,276L147,284L146,285z" fill="#bd8c7a"/><path d="M147,284L151,276L152,279z" fill="#b38574"/><path d="M171,246L174,253L167,250z" fill="#987062"/><path d="M165,256L174,253L173,259z" fill="#a4796a"/><path d="M158,260L155,265L155,261z" fill="#987062"/><path d="M182,183L185,194L177,192z" fill="#ba8a78"/><path d="M152,263L145,257L155,261z" fill="#9d7566"/><path d="M152,223L156,231L149,224z" fill="#ae8170"/><path d="M156,231L154,219L157,231z" fill="#987062"/><path d="M156,231L152,223L154,219z" fill="#b78876"/><path d="M125,238L131,246L124,240z" fill="#987062"/><path d="M117,208L116,218L114,217z" fill="#b88977"/><path d="M116,218L111,226L114,217z" fill="#c18f7d"/><path d="M138,202L129,204L125,200z" fill="#ba8a78"/><path d="M129,204L117,208L125,200z" fill="#ba8a78"/><path d="M167,263L165,256L173,259z" fill="#987062"/><path d="M165,256L167,263L164,258z" fill="#987062"/><path d="M167,263L158,260L164,258z" fill="#987062"/><path d="M236,253L255,255L250,267z" fill="#a97d6d"/><path d="M262,250L255,255L255,244z" fill="#b78776"/><path d="M262,250L271,254L255,255z" fill="#bf8e7c"/><path d="M255,199L257,200L251,213z" fill="#987062"/><path d="M255,199L242,200L252,190z" fill="#bc8b79"/><path d="M255,199L252,190L261,188z" fill="#c08e7c"/><path d="M257,200L255,199L261,188z" fill="#987062"/><path d="M199,274L213,270L218,280z" fill="#9d7566"/><path d="M209,268L213,270L199,274z" fill="#c08e7c"/><path d="M200,264L209,268L199,274z" fill="#a57b6b"/><path d="M200,264L191,263L201,252z" fill="#b08271"/><path d="M234,193L237,191L237,197z" fill="#a57a6b"/><path d="M237,191L234,193L222,182z" fill="#9b7364"/><path d="M234,193L220,189L222,182z" fill="#a37969"/><path d="M197,194L210,192L206,202z" fill="#b68776"/><path d="M210,192L197,194L193,188z" fill="#a67b6b"/><path d="M192,183L210,192L193,188z" fill="#bf8e7c"/><path d="M210,192L209,164L222,182z" fill="#b58675"/><path d="M209,164L210,192L192,183z" fill="#ba8a79"/><path d="M220,189L210,192L222,182z" fill="#987062"/><path d="M215,193L210,192L220,189z" fill="#987062"/><path d="M220,229L232,222L239,230z" fill="#bf8e7c"/><path d="M232,222L241,221L239,230z" fill="#c08e7c"/><path d="M206,202L216,199L204,209z" fill="#ba8a78"/><path d="M210,192L216,199L206,202z" fill="#a67b6b"/><path d="M216,199L210,192L215,193z" fill="#a4796a"/><path d="M242,200L237,206L237,197z" fill="#c2907e"/><path d="M197,194L196,201L185,194z" fill="#bb8b79"/><path d="M196,201L197,194L206,202z" fill="#b78877"/><path d="M195,207L196,201L206,202z" fill="#987062"/><path d="M188,225L195,207L204,209z" fill="#bf8e7c"/><path d="M215,115L215,109L228,110z" fill="#987062"/><path d="M219,120L215,115L228,110z" fill="#c5927f"/><path d="M215,115L212,110L215,109z" fill="#987062"/><path d="M225,130L219,120L229,121z" fill="#a57a6b"/><path d="M225,130L234,125L230,134z" fill="#a97d6d"/><path d="M234,125L225,130L229,121z" fill="#b78876"/><path d="M215,88L202,91L202,87z" fill="#b68776"/><path d="M241,162L231,165L235,157z" fill="#b98978"/><path d="M231,165L244,175L222,182z" fill="#bc8b79"/><path d="M244,175L237,191L222,182z" fill="#b78876"/><path d="M244,175L253,187L237,191z" fill="#a17868"/><path d="M268,156L257,152L259,145z" fill="#b08272"/><path d="M88,267L87,268L87,267z" fill="#987062"/><path d="M88,267L90,261L92,267z" fill="#a4796a"/><path d="M90,261L88,267L87,267z" fill="#987062"/><path d="M96,275L97,267L100,274z" fill="#c4927f"/><path d="M89,274L88,281L83,276z" fill="#c2907d"/><path d="M83,276L88,281L80,285z" fill="#c5927f"/><path d="M88,281L93,281L80,285z" fill="#987062"/><path d="M112,247L120,251L112,251z" fill="#a3796a"/><path d="M87,268L84,255L87,267z" fill="#aa7e6e"/><path d="M84,255L90,261L87,267z" fill="#be8d7b"/><path d="M90,261L84,255L88,256z" fill="#a77c6c"/><path d="M84,255L87,268L83,274z" fill="#9b7364"/><path d="M84,255L83,276L81,249z" fill="#987062"/><path d="M83,276L84,255L83,274z" fill="#b38473"/><path d="M84,239L81,249L84,236z" fill="#987062"/><path d="M85,237L84,239L84,236z" fill="#987062"/><path d="M90,234L84,239L85,237z" fill="#a87d6d"/><path d="M90,261L96,258L94,263z" fill="#9a7263"/><path d="M96,258L90,261L88,256z" fill="#a57a6b"/><path d="M94,263L96,258L101,262z" fill="#b58675"/><path d="M96,258L108,258L101,262z" fill="#b48574"/><path d="M108,258L96,258L99,250z" fill="#a4796a"/><path d="M114,266L118,266L114,267z" fill="#b98977"/><path d="M108,258L108,250L112,251z" fill="#b58675"/><path d="M108,250L108,258L99,250z" fill="#a37969"/><path d="M108,250L112,247L112,251z" fill="#af8271"/><path d="M112,247L108,250L111,244z" fill="#bf8e7b"/><path d="M97,267L105,269L100,274z" fill="#c4917f"/><path d="M105,269L106,280L100,274z" fill="#9e7566"/><path d="M106,280L105,269L109,279z" fill="#ad8070"/><path d="M99,283L100,282L104,285z" fill="#af8171"/><path d="M99,283L104,285L80,285z" fill="#987062"/><path d="M93,281L99,283L80,285z" fill="#c18f7d"/><path d="M141,188L140,183L144,186z" fill="#b68776"/><path d="M141,188L136,189L140,183z" fill="#c08f7c"/><path d="M82,227L82,204L83,213z" fill="#ae8171"/><path d="M83,202L82,204L82,188z" fill="#987062"/><path d="M82,204L82,227L81,249z" fill="#987062"/><path d="M82,204L81,170L82,188z" fill="#b38574"/><path d="M82,204L81,249L81,170z" fill="#b48574"/><path d="M102,205L105,210L101,210z" fill="#ab7e6e"/><path d="M96,207L102,205L101,210z" fill="#987062"/><path d="M102,205L96,207L97,202z" fill="#b78876"/><path d="M90,203L85,199L94,198z" fill="#c5927f"/><path d="M97,202L90,203L94,198z" fill="#b18372"/><path d="M85,199L90,203L83,202z" fill="#c5927f"/><path d="M90,203L82,204L83,202z" fill="#bb8b79"/><path d="M102,230L104,221L111,226z" fill="#bc8b7a"/><path d="M104,221L100,229L93,226z" fill="#c3917e"/><path d="M102,230L100,229L104,221z" fill="#987062"/><path d="M100,229L102,230L99,230z" fill="#987062"/><path d="M102,230L101,238L99,230z" fill="#b18372"/><path d="M387,178L390,156L402,165z" fill="#b28473"/><path d="M390,156L387,178L380,166z" fill="#987062"/><path d="M383,145L390,156L374,155z" fill="#b08272"/><path d="M354,98L356,123L343,112z" fill="#b98978"/><path d="M383,145L366,139L381,124z" fill="#ad8070"/><path d="M389,86L351,92L346,89z" fill="#987062"/><path d="M389,86L346,89L337,86z" fill="#b88877"/><path d="M389,86L337,86L440,85z" fill="#987062"/><path d="M434,86L389,86L440,85z" fill="#b98977"/><path d="M380,105L392,109L381,124z" fill="#b88877"/><path d="M431,94L417,98L420,87z" fill="#ba8a78"/><path d="M429,111L431,94L440,85z" fill="#b48674"/><path d="M436,122L429,111L440,85z" fill="#af8271"/><path d="M413,194L416,202L414,202z" fill="#b48675"/><path d="M423,194L416,202L413,194z" fill="#b88977"/><path d="M416,202L417,210L414,202z" fill="#ae8170"/><path d="M417,210L416,202L421,214z" fill="#987062"/><path d="M416,202L437,208L421,214z" fill="#997263"/><path d="M416,202L423,194L437,208z" fill="#bd8c7a"/><path d="M423,183L413,194L412,181z" fill="#bd8c7a"/><path d="M423,183L423,194L413,194z" fill="#a27869"/><path d="M433,194L423,183L436,184z" fill="#b08272"/><path d="M423,194L423,183L433,194z" fill="#ad8170"/><path d="M410,174L412,177L411,178z" fill="#a17768"/><path d="M412,177L410,174L409,169z" fill="#9c7465"/><path d="M410,174L411,178L397,180z" fill="#c4917f"/><path d="M410,174L397,180L402,165z" fill="#987062"/><path d="M409,169L410,174L402,165z" fill="#987062"/><path d="M415,158L414,156L430,151z" fill="#987062"/><path d="M414,156L423,146L430,151z" fill="#a67b6b"/><path d="M414,156L415,158L402,165z" fill="#987062"/><path d="M390,156L414,156L402,165z" fill="#c08e7c"/><path d="M430,142L420,134L430,137z" fill="#9c7465"/><path d="M423,146L420,134L430,142z" fill="#a37969"/><path d="M422,129L420,134L415,134z" fill="#c3917e"/><path d="M432,150L432,152L430,151z" fill="#c18f7d"/><path d="M432,152L432,150L434,152z" fill="#a37969"/><path d="M432,152L427,177L430,151z" fill="#be8d7b"/><path d="M427,177L432,152L434,152z" fill="#987062"/><path d="M338,102L338,109L333,102z" fill="#a77c6c"/><path d="M333,99L338,102L333,102z" fill="#c08f7c"/><path d="M338,109L338,102L343,112z" fill="#987062"/><path d="M338,102L333,99L344,93z" fill="#c4927f"/><path d="M344,99L338,102L344,93z" fill="#9c7465"/><path d="M338,102L346,100L343,112z" fill="#987062"/><path d="M338,102L344,99L346,100z" fill="#b58675"/><path d="M339,111L338,109L343,112z" fill="#a57a6a"/><path d="M337,114L339,111L343,112z" fill="#987062"/><path d="M339,111L337,114L338,109z" fill="#b48675"/><path d="M322,117L325,128L313,133z" fill="#ae8170"/><path d="M321,115L322,117L310,115z" fill="#c18f7d"/><path d="M322,117L313,133L310,115z" fill="#b68776"/><path d="M322,117L330,119L325,128z" fill="#a87d6d"/><path d="M330,119L322,117L321,115z" fill="#b48574"/><path d="M332,103L330,119L321,115z" fill="#b18372"/><path d="M330,119L332,103L338,109z" fill="#b18372"/><path d="M337,114L330,119L338,109z" fill="#b08271"/><path d="M282,218L276,226L273,218z" fill="#9d7465"/><path d="M296,176L295,175L302,174z" fill="#be8d7b"/><path d="M271,217L258,212L267,200z" fill="#a87d6d"/><path d="M271,217L282,218L273,218z" fill="#b68776"/><path d="M269,235L271,217L273,218z" fill="#b88877"/><path d="M286,216L271,217L267,200z" fill="#aa7e6e"/><path d="M282,218L271,217L286,216z" fill="#997163"/><path d="M305,248L308,237L319,253z" fill="#b58675"/><path d="M307,259L305,248L317,258z" fill="#aa7e6e"/><path d="M305,248L319,253L317,258z" fill="#a97e6d"/><path d="M305,248L307,259L291,249z" fill="#a57a6a"/><path d="M315,230L314,225L317,228z" fill="#987062"/><path d="M293,235L305,248L291,249z" fill="#b48574"/><path d="M305,248L293,235L308,237z" fill="#b48674"/><path d="M276,246L293,235L291,249z" fill="#b78876"/><path d="M293,235L276,246L277,230z" fill="#b28473"/><path d="M331,169L335,162L339,176z" fill="#b38574"/><path d="M248,87L243,91L245,86z" fill="#987062"/><path d="M274,87L248,87L245,86z" fill="#987062"/><path d="M268,95L248,87L274,87z" fill="#b78876"/><path d="M279,92L268,95L274,87z" fill="#bc8c7a"/><path d="M249,129L255,128L258,134z" fill="#bd8c7a"/><path d="M255,128L249,129L243,120z" fill="#987062"/><path d="M276,131L268,119L283,115z" fill="#bb8b79"/><path d="M268,119L265,109L283,115z" fill="#ab7f6e"/><path d="M268,119L255,128L265,109z" fill="#a3796a"/><path d="M277,102L265,109L268,95z" fill="#a07667"/><path d="M279,92L277,102L268,95z" fill="#a47a6a"/><path d="M277,102L288,103L283,115z" fill="#bb8a79"/><path d="M265,109L277,102L283,115z" fill="#bb8b79"/><path d="M232,98L243,108L228,110z" fill="#9e7566"/><path d="M243,108L232,98L241,98z" fill="#a27869"/><path d="M265,109L262,100L268,95z" fill="#987062"/><path d="M237,126L235,124L243,120z" fill="#c3917e"/><path d="M242,126L237,126L243,120z" fill="#987062"/><path d="M235,124L237,126L234,125z" fill="#af8271"/><path d="M234,125L237,126L230,134z" fill="#c18f7d"/><path d="M245,143L245,143L230,134z" fill="#ae8171"/><path d="M245,143L249,129L258,134z" fill="#c08e7c"/><path d="M259,145L245,143L258,134z" fill="#9b7364"/><path d="M288,103L302,114L286,117z" fill="#b48574"/><path d="M302,114L301,121L286,117z" fill="#b88977"/><path d="M301,121L302,114L310,115z" fill="#ae8170"/><path d="M316,149L313,151L313,133z" fill="#b78776"/><path d="M324,141L316,149L313,133z" fill="#b18473"/><path d="M335,162L339,145L348,149z" fill="#c08e7c"/><path d="M331,153L339,145L335,162z" fill="#b08272"/><path d="M313,99L316,100L310,115z" fill="#987162"/><path d="M313,99L314,95L316,100z" fill="#9e7566"/><path d="M313,99L312,98L314,95z" fill="#987062"/><path d="M363,243L367,246L361,244z" fill="#be8d7b"/><path d="M367,246L363,243L365,236z" fill="#a57a6b"/><path d="M363,243L361,244L355,238z" fill="#bf8d7b"/><path d="M365,236L363,243L355,238z" fill="#a27869"/><path d="M367,246L373,249L374,253z" fill="#a77c6c"/><path d="M388,247L373,249L386,238z" fill="#c08f7c"/><path d="M373,249L365,236L386,238z" fill="#987162"/><path d="M373,249L367,246L365,236z" fill="#997263"/><path d="M374,253L373,249L384,254z" fill="#bc8b79"/><path d="M373,249L388,247L384,254z" fill="#bb8a79"/><path d="M388,247L387,253L384,254z" fill="#c4917f"/><path d="M387,253L388,247L408,257z" fill="#b78877"/><path d="M387,253L384,266L384,254z" fill="#b88877"/><path d="M409,261L387,253L408,257z" fill="#b68776"/><path d="M383,277L385,278L387,284z" fill="#aa7e6e"/><path d="M385,278L386,277L387,284z" fill="#b98978"/><path d="M386,277L385,278L383,277z" fill="#bb8b79"/><path d="M335,162L358,162L339,176z" fill="#af8271"/><path d="M358,162L359,164L339,176z" fill="#987062"/><path d="M358,162L335,162L348,149z" fill="#b48675"/><path d="M359,164L358,162L374,155z" fill="#987062"/><path d="M373,167L359,164L374,155z" fill="#9a7364"/><path d="M359,164L373,167L370,177z" fill="#b28473"/><path d="M376,176L373,167L380,166z" fill="#be8d7b"/><path d="M370,177L373,167L376,176z" fill="#c08e7c"/><path d="M352,205L350,205L352,198z" fill="#987162"/><path d="M350,205L352,205L344,206z" fill="#987062"/><path d="M367,210L371,216L355,230z" fill="#c18f7d"/><path d="M367,210L352,205L365,207z" fill="#987062"/><path d="M352,205L367,210L355,230z" fill="#a47a6a"/><path d="M371,216L367,210L380,218z" fill="#bc8b7a"/><path d="M380,218L367,210L375,188z" fill="#b48574"/><path d="M367,210L365,207L375,188z" fill="#987062"/><path d="M334,205L342,204L344,206z" fill="#987062"/><path d="M352,198L342,204L342,191z" fill="#a77c6c"/><path d="M350,205L342,204L352,198z" fill="#c4917e"/><path d="M342,204L350,205L344,206z" fill="#987062"/><path d="M334,205L333,208L333,201z" fill="#987062"/><path d="M321,205L333,208L328,211z" fill="#987062"/><path d="M333,208L321,205L333,201z" fill="#ba8a78"/><path d="M333,208L332,212L328,211z" fill="#a27869"/><path d="M332,212L333,208L344,206z" fill="#987062"/><path d="M333,208L334,205L344,206z" fill="#b98978"/><path d="M321,205L316,200L318,195z" fill="#a77c6c"/><path d="M318,195L316,200L309,190z" fill="#ab7f6f"/><path d="M316,200L307,204L309,190z" fill="#b58675"/><path d="M342,248L336,252L337,243z" fill="#ba8a78"/><path d="M336,254L336,252L342,248z" fill="#987062"/><path d="M336,252L334,243L337,243z" fill="#a27869"/><path d="M334,243L336,252L319,253z" fill="#be8d7b"/><path d="M336,252L336,254L319,253z" fill="#987062"/><path d="M190,100L189,102L178,95z" fill="#bd8c7a"/><path d="M186,88L190,100L178,95z" fill="#b48574"/><path d="M157,162L160,162L157,170z" fill="#b28473"/><path d="M160,162L166,176L157,170z" fill="#a77c6c"/><path d="M188,177L209,164L192,183z" fill="#a57b6b"/><path d="M188,177L189,161L209,164z" fill="#a07767"/><path d="M189,161L188,177L185,169z" fill="#b18372"/><path d="M180,170L185,169L182,172z" fill="#987062"/><path d="M180,170L177,169L177,166z" fill="#c08e7c"/><path d="M181,177L180,170L182,172z" fill="#987062"/><path d="M177,169L180,170L181,177z" fill="#a77b6c"/><path d="M182,164L182,158L186,159z" fill="#987062"/><path d="M182,158L182,164L177,166z" fill="#987062"/><path d="M189,161L182,164L186,159z" fill="#b68776"/><path d="M182,164L189,161L185,169z" fill="#b28473"/><path d="M182,164L180,170L177,166z" fill="#c4917f"/><path d="M180,170L182,164L185,169z" fill="#a67b6b"/><path d="M187,154L189,159L186,159z" fill="#987062"/><path d="M189,159L187,154L199,146z" fill="#987062"/><path d="M187,154L186,150L199,146z" fill="#a37969"/><path d="M162,125L158,127L155,124z" fill="#987062"/><path d="M164,143L159,143L165,138z" fill="#b38574"/><path d="M164,143L164,148L159,143z" fill="#987062"/><path d="M164,148L164,143L169,144z" fill="#987062"/><path d="M169,91L186,88L178,95z" fill="#a57b6b"/><path d="M168,92L169,91L178,95z" fill="#b58675"/><path d="M186,88L169,91L161,86z" fill="#997263"/><path d="M161,86L169,91L162,89z" fill="#aa7e6e"/><path d="M169,91L168,92L162,89z" fill="#9d7465"/><path d="M191,137L189,137L186,130z" fill="#9e7566"/><path d="M191,137L196,140L186,143z" fill="#987062"/><path d="M189,137L191,137L186,143z" fill="#c2907d"/><path d="M189,137L185,136L186,130z" fill="#9b7364"/><path d="M185,136L183,130L186,130z" fill="#987062"/><path d="M185,136L189,137L186,143z" fill="#ab7f6f"/><path d="M183,117L181,111L190,106z" fill="#b78876"/><path d="M105,99L107,98L107,102z" fill="#bc8c7a"/><path d="M115,94L114,98L108,96z" fill="#9d7465"/><path d="M89,85L86,90L86,86z" fill="#987062"/><path d="M94,93L86,90L89,85z" fill="#b68776"/><path d="M86,90L85,86L86,86z" fill="#a97e6e"/><path d="M86,90L81,101L80,85z" fill="#b38574"/><path d="M85,86L86,90L80,85z" fill="#b08272"/><path d="M88,96L94,93L89,99z" fill="#c3907e"/><path d="M87,99L88,96L89,99z" fill="#c3907e"/><path d="M88,96L86,90L94,93z" fill="#c18f7d"/><path d="M88,96L87,99L81,101z" fill="#c4917f"/><path d="M86,90L88,96L81,101z" fill="#c2907d"/><path d="M99,91L98,89L103,86z" fill="#c2907d"/><path d="M98,89L94,93L89,85z" fill="#ba8a78"/><path d="M98,89L99,91L94,93z" fill="#c3907e"/><path d="M96,100L99,103L95,103z" fill="#9d7566"/><path d="M95,99L96,100L95,103z" fill="#af8271"/><path d="M99,103L96,100L103,100z" fill="#a67b6c"/><path d="M99,91L96,100L94,93z" fill="#b08272"/><path d="M96,100L95,99L94,93z" fill="#a87c6c"/><path d="M99,176L93,183L90,180z" fill="#b98977"/><path d="M93,183L99,176L98,184z" fill="#987062"/><path d="M93,183L85,187L90,180z" fill="#b88877"/><path d="M85,187L93,183L85,192z" fill="#c5927f"/><path d="M93,183L95,197L85,192z" fill="#c3907e"/><path d="M93,183L98,184L95,197z" fill="#b08272"/><path d="M105,165L96,167L101,162z" fill="#b78876"/><path d="M108,163L105,165L101,162z" fill="#b48675"/><path d="M105,165L111,177L103,177z" fill="#bb8b79"/><path d="M111,177L105,165L108,163z" fill="#b28473"/><path d="M96,167L94,169L92,165z" fill="#bc8b79"/><path d="M94,169L91,169L92,165z" fill="#c3907e"/><path d="M90,170L83,171L83,167z" fill="#a67b6b"/><path d="M87,174L83,171L90,170z" fill="#bc8b7a"/><path d="M83,167L83,171L81,170z" fill="#987062"/><path d="M81,170L83,171L82,188z" fill="#a47a6a"/><path d="M83,171L87,174L82,188z" fill="#c18f7d"/><path d="M90,175L99,176L90,180z" fill="#b28473"/><path d="M87,174L90,175L90,180z" fill="#987062"/><path d="M110,195L114,195L111,196z" fill="#b98978"/><path d="M114,195L110,195L115,192z" fill="#987062"/><path d="M113,183L108,190L111,182z" fill="#987062"/><path d="M108,190L113,183L115,192z" fill="#c3907e"/><path d="M110,195L108,190L115,192z" fill="#ac806f"/><path d="M108,190L110,195L105,189z" fill="#9b7364"/><path d="M130,181L127,181L128,174z" fill="#987062"/><path d="M127,181L130,181L124,188z" fill="#987062"/><path d="M128,144L128,142L131,141z" fill="#987062"/><path d="M132,135L128,142L123,133z" fill="#997163"/><path d="M128,142L132,135L131,141z" fill="#c08e7c"/><path d="M128,142L119,141L123,133z" fill="#9c7465"/><path d="M119,141L128,142L124,145z" fill="#9b7364"/><path d="M131,162L134,152L135,153z" fill="#bb8b79"/><path d="M129,153L134,152L131,162z" fill="#987062"/><path d="M134,152L129,153L128,144z" fill="#a67b6b"/><path d="M134,152L128,144L131,141z" fill="#a4796a"/><path d="M141,149L134,152L131,141z" fill="#9c7465"/><path d="M134,152L141,149L135,153z" fill="#a37969"/><path d="M129,153L124,149L128,144z" fill="#a87d6d"/><path d="M120,158L129,153L131,162z" fill="#a07667"/><path d="M142,151L145,152L135,153z" fill="#c3907e"/><path d="M141,149L142,151L135,153z" fill="#9b7364"/><path d="M158,142L148,141L153,136z" fill="#9c7465"/><path d="M160,134L158,142L153,136z" fill="#9c7465"/><path d="M152,150L158,142L159,143z" fill="#c08e7c"/><path d="M158,142L152,150L148,141z" fill="#b78876"/><path d="M159,143L158,142L165,138z" fill="#c2907d"/><path d="M158,142L160,134L165,138z" fill="#a07667"/><path d="M142,151L143,143L145,152z" fill="#c4927f"/><path d="M143,143L142,151L141,149z" fill="#987062"/><path d="M143,143L152,150L145,152z" fill="#bc8b7a"/><path d="M152,150L143,143L148,141z" fill="#b78876"/><path d="M143,143L141,149L142,143z" fill="#987062"/><path d="M152,150L159,155L157,162z" fill="#ad8070"/><path d="M160,162L159,155L163,155z" fill="#b98978"/><path d="M159,155L160,162L157,162z" fill="#b78877"/><path d="M159,155L164,148L163,155z" fill="#a77c6c"/><path d="M159,155L152,150L164,148z" fill="#a67b6c"/><path d="M164,190L173,191L172,196z" fill="#c2907e"/><path d="M172,187L173,191L164,190z" fill="#c2907d"/><path d="M173,191L177,194L172,196z" fill="#987062"/><path d="M160,106L158,106L161,97z" fill="#b68776"/><path d="M168,102L160,106L161,97z" fill="#987062"/><path d="M158,106L160,106L157,109z" fill="#c4917f"/><path d="M189,102L179,104L178,95z" fill="#be8d7b"/><path d="M179,104L189,102L190,106z" fill="#987062"/><path d="M181,111L179,104L190,106z" fill="#b58775"/><path d="M177,100L168,92L178,95z" fill="#b68776"/><path d="M177,100L168,102L168,92z" fill="#b48574"/><path d="M179,104L177,100L178,95z" fill="#9d7566"/><path d="M162,118L163,124L155,124z" fill="#a17768"/><path d="M112,126L116,134L111,132z" fill="#a17768"/><path d="M110,127L112,126L111,132z" fill="#ad8070"/><path d="M112,126L121,133L116,134z" fill="#9e7566"/><path d="M121,133L112,126L122,126z" fill="#a57a6b"/><path d="M112,126L110,127L113,119z" fill="#bf8e7c"/><path d="M122,126L112,126L113,119z" fill="#b88977"/><path d="M82,138L83,133L84,132z" fill="#ba8a78"/><path d="M89,136L82,138L84,132z" fill="#a97d6d"/><path d="M82,138L89,136L83,143z" fill="#bb8b79"/><path d="M83,133L82,138L81,133z" fill="#b98978"/><path d="M81,133L82,138L80,153z" fill="#b78776"/><path d="M82,138L83,143L80,153z" fill="#bc8b79"/><path d="M93,131L90,137L88,132z" fill="#9d7566"/><path d="M90,137L89,136L88,132z" fill="#9c7465"/><path d="M94,135L90,137L93,131z" fill="#987062"/><path d="M89,136L90,137L92,141z" fill="#b68776"/><path d="M90,137L94,135L92,141z" fill="#c2907d"/><path d="M97,149L103,152L101,154z" fill="#9f7667"/><path d="M97,149L97,147L103,152z" fill="#a47a6a"/><path d="M98,157L97,149L101,154z" fill="#a67b6b"/><path d="M97,149L98,157L89,156z" fill="#987062"/><path d="M129,89L129,92L117,90z" fill="#987062"/><path d="M129,92L127,97L117,90z" fill="#a97d6d"/><path d="M129,92L129,89L131,89z" fill="#a47a6a"/><path d="M119,97L115,94L117,90z" fill="#987062"/><path d="M119,97L114,98L115,94z" fill="#987062"/><path d="M154,192L155,186L162,193z" fill="#bd8c7a"/><path d="M154,193L154,192L162,193z" fill="#c2907e"/><path d="M162,195L154,193L162,193z" fill="#bb8b79"/><path d="M154,193L162,195L158,203z" fill="#b18372"/><path d="M164,190L162,195L162,193z" fill="#9c7465"/><path d="M162,195L164,190L172,196z" fill="#c4917f"/><path d="M146,213L140,208L145,211z" fill="#bb8b79"/><path d="M143,229L133,219L149,224z" fill="#c08e7c"/><path d="M133,219L148,216L149,224z" fill="#ac806f"/><path d="M133,219L146,213L148,216z" fill="#c18f7d"/><path d="M152,223L151,219L154,219z" fill="#987062"/><path d="M179,263L175,260L178,261z" fill="#987062"/><path d="M175,260L167,263L173,259z" fill="#ac806f"/><path d="M179,263L186,264L182,268z" fill="#ab7f6f"/><path d="M184,244L193,237L201,252z" fill="#b78876"/><path d="M155,265L153,268L152,263z" fill="#9f7667"/><path d="M182,258L179,263L178,261z" fill="#987062"/><path d="M182,258L186,264L179,263z" fill="#9e7566"/><path d="M174,253L165,256L167,250z" fill="#9b7364"/><path d="M165,256L165,256L174,253z" fill="#ab7f6f"/><path d="M165,256L165,256L164,258z" fill="#ab7f6f"/><path d="M176,187L182,183L177,192z" fill="#987062"/><path d="M176,187L173,191L172,187z" fill="#c3917e"/><path d="M179,226L188,225L187,230z" fill="#a97d6d"/><path d="M170,214L170,209L183,207z" fill="#b88877"/><path d="M170,209L183,201L183,207z" fill="#987062"/><path d="M183,201L170,209L172,196z" fill="#987163"/><path d="M185,194L180,196L177,192z" fill="#b98a78"/><path d="M183,201L180,196L185,194z" fill="#a07768"/><path d="M156,237L150,243L152,234z" fill="#9f7667"/><path d="M156,237L156,249L151,245z" fill="#b88977"/><path d="M150,243L156,237L151,245z" fill="#b48675"/><path d="M156,237L171,246L167,250z" fill="#b18372"/><path d="M156,249L156,237L167,250z" fill="#be8d7b"/><path d="M147,229L142,233L143,229z" fill="#987062"/><path d="M147,229L143,229L149,224z" fill="#987062"/><path d="M156,231L147,229L149,224z" fill="#b08272"/><path d="M147,229L156,231L152,234z" fill="#af8271"/><path d="M133,219L125,222L131,215z" fill="#987062"/><path d="M116,218L118,223L111,226z" fill="#987062"/><path d="M111,226L118,223L113,230z" fill="#987062"/><path d="M118,223L123,225L113,230z" fill="#c5927f"/><path d="M140,208L134,207L138,202z" fill="#987062"/><path d="M179,282L177,277L180,276z" fill="#af8271"/><path d="M178,276L180,272L180,276z" fill="#c4917f"/><path d="M178,276L176,276L180,272z" fill="#c3907e"/><path d="M177,277L178,276L180,276z" fill="#b98977"/><path d="M178,276L177,277L176,276z" fill="#a07767"/><path d="M163,270L153,268L155,265z" fill="#987062"/><path d="M158,260L163,270L155,265z" fill="#a37969"/><path d="M167,263L163,270L158,260z" fill="#9c7364"/><path d="M170,272L163,270L167,263z" fill="#c18f7d"/><path d="M170,272L179,263L180,272z" fill="#a77c6c"/><path d="M170,272L175,260L179,263z" fill="#987062"/><path d="M175,260L170,272L167,263z" fill="#bf8d7b"/><path d="M255,255L243,242L255,244z" fill="#ab7e6e"/><path d="M236,253L243,242L255,255z" fill="#ab7f6f"/><path d="M234,273L245,280L218,280z" fill="#ad8070"/><path d="M234,273L244,274L245,280z" fill="#b48675"/><path d="M274,233L271,238L269,235z" fill="#c2907d"/><path d="M274,233L276,226L277,230z" fill="#987062"/><path d="M274,233L269,235L276,226z" fill="#a77c6c"/><path d="M276,246L274,233L277,230z" fill="#a67b6b"/><path d="M271,238L274,233L276,246z" fill="#9f7667"/><path d="M263,248L271,238L276,246z" fill="#a07768"/><path d="M263,248L276,246L274,251z" fill="#b18372"/><path d="M263,248L262,250L255,244z" fill="#b68776"/><path d="M271,254L263,248L274,251z" fill="#c08e7c"/><path d="M262,250L263,248L271,254z" fill="#c08e7c"/><path d="M271,238L263,248L269,235z" fill="#bb8b79"/><path d="M255,236L263,248L255,244z" fill="#b58675"/><path d="M263,248L255,236L269,235z" fill="#b48675"/><path d="M196,269L200,264L199,274z" fill="#bc8b79"/><path d="M200,264L196,269L191,263z" fill="#987062"/><path d="M180,272L196,269L180,276z" fill="#c18f7d"/><path d="M196,269L199,274L180,276z" fill="#c18f7d"/><path d="M241,221L244,226L239,230z" fill="#a37969"/><path d="M216,199L222,199L224,208z" fill="#ac7f6f"/><path d="M222,199L234,193L237,197z" fill="#ac7f6f"/><path d="M234,193L222,199L220,189z" fill="#a77c6c"/><path d="M237,206L222,199L237,197z" fill="#c2907e"/><path d="M222,199L237,206L224,208z" fill="#c18f7d"/><path d="M222,199L215,193L220,189z" fill="#997163"/><path d="M222,199L216,199L215,193z" fill="#9e7566"/><path d="M245,211L237,206L242,200z" fill="#a37969"/><path d="M245,211L255,199L251,213z" fill="#c08f7c"/><path d="M255,199L245,211L242,200z" fill="#a27869"/><path d="M241,221L245,211L251,213z" fill="#c18f7d"/><path d="M200,230L188,225L204,209z" fill="#b98978"/><path d="M211,124L215,115L219,120z" fill="#c4917f"/><path d="M193,103L198,112L190,106z" fill="#a57a6b"/><path d="M189,102L193,103L190,106z" fill="#987062"/><path d="M190,100L193,103L189,102z" fill="#b08372"/><path d="M206,98L215,88L210,100z" fill="#c2907d"/><path d="M206,98L202,91L215,88z" fill="#a57a6b"/><path d="M202,91L206,98L199,95z" fill="#a57a6b"/><path d="M193,103L206,98L198,112z" fill="#a27869"/><path d="M202,91L202,90L202,87z" fill="#987062"/><path d="M202,90L202,91L199,95z" fill="#987062"/><path d="M202,87L202,90L189,88z" fill="#bb8a79"/><path d="M202,90L199,95L189,88z" fill="#9a7263"/><path d="M265,176L267,163L272,167z" fill="#a3796a"/><path d="M265,176L261,174L267,163z" fill="#987062"/><path d="M285,172L265,176L272,167z" fill="#b58675"/><path d="M244,175L257,175L253,187z" fill="#a17768"/><path d="M253,187L257,175L261,188z" fill="#ac7f6f"/><path d="M257,175L265,176L261,188z" fill="#9b7364"/><path d="M265,176L257,175L261,174z" fill="#a27869"/><path d="M261,162L268,156L267,163z" fill="#a17768"/><path d="M261,162L257,152L268,156z" fill="#c18f7d"/><path d="M261,174L261,162L267,163z" fill="#a57a6b"/><path d="M92,271L89,274L87,268z" fill="#c08e7c"/><path d="M88,267L92,271L87,268z" fill="#ab7f6e"/><path d="M92,271L88,267L92,267z" fill="#b78877"/><path d="M97,267L92,271L92,267z" fill="#997263"/><path d="M96,275L92,271L97,267z" fill="#b78877"/><path d="M93,275L96,275L93,281z" fill="#c4927f"/><path d="M88,281L93,275L93,281z" fill="#b38574"/><path d="M93,275L88,281L89,274z" fill="#a17768"/><path d="M96,275L97,280L93,281z" fill="#987062"/><path d="M97,280L99,283L93,281z" fill="#b88977"/><path d="M99,283L97,280L100,282z" fill="#b28473"/><path d="M100,282L97,280L100,274z" fill="#b68775"/><path d="M97,280L96,275L100,274z" fill="#987062"/><path d="M112,247L118,244L120,251z" fill="#af8271"/><path d="M131,246L118,244L124,240z" fill="#bf8e7c"/><path d="M118,244L131,246L120,251z" fill="#b48675"/><path d="M118,244L112,247L111,244z" fill="#c2907e"/><path d="M124,240L118,244L113,230z" fill="#a97e6e"/><path d="M118,244L111,244L113,230z" fill="#b08271"/><path d="M84,255L86,251L88,256z" fill="#bb8b79"/><path d="M86,251L84,255L81,249z" fill="#987162"/><path d="M84,239L84,247L81,249z" fill="#a47a6a"/><path d="M84,247L84,239L88,247z" fill="#ba8a78"/><path d="M84,239L94,239L88,247z" fill="#c08f7c"/><path d="M94,239L91,248L88,247z" fill="#987062"/><path d="M94,239L84,239L90,234z" fill="#a57a6a"/><path d="M91,248L94,239L93,247z" fill="#bd8c7a"/><path d="M95,230L94,239L90,234z" fill="#aa7e6e"/><path d="M94,239L95,230L99,230z" fill="#b98978"/><path d="M101,238L94,239L99,230z" fill="#ac806f"/><path d="M99,250L89,252L93,247z" fill="#ae8171"/><path d="M96,258L89,252L99,250z" fill="#987062"/><path d="M89,252L91,248L93,247z" fill="#c2907d"/><path d="M89,252L96,258L88,256z" fill="#987062"/><path d="M86,251L89,252L88,256z" fill="#b48574"/><path d="M91,248L89,252L88,247z" fill="#b28473"/><path d="M120,251L114,257L112,251z" fill="#b88877"/><path d="M114,257L108,258L112,251z" fill="#b68776"/><path d="M105,269L113,274L109,279z" fill="#aa7e6e"/><path d="M109,279L113,274L120,284z" fill="#b38574"/><path d="M105,266L97,267L101,262z" fill="#9a7264"/><path d="M105,266L105,269L97,267z" fill="#c3917e"/><path d="M108,258L105,266L101,262z" fill="#ab7f6e"/><path d="M105,266L108,258L111,266z" fill="#c5927f"/><path d="M144,187L141,188L144,186z" fill="#987062"/><path d="M92,226L88,230L82,227z" fill="#b08372"/><path d="M82,227L88,230L84,236z" fill="#bb8b79"/><path d="M88,230L85,237L84,236z" fill="#987062"/><path d="M88,230L90,234L85,237z" fill="#be8d7b"/><path d="M123,225L130,231L125,233z" fill="#b68776"/><path d="M130,231L125,238L125,233z" fill="#a67b6c"/><path d="M125,222L130,231L123,225z" fill="#b48675"/><path d="M130,231L131,246L125,238z" fill="#a67b6b"/><path d="M102,205L106,202L105,210z" fill="#b28473"/><path d="M106,202L116,200L117,208z" fill="#b88977"/><path d="M105,210L106,202L117,208z" fill="#bc8b79"/><path d="M116,200L106,202L111,196z" fill="#bb8a79"/><path d="M106,202L110,195L111,196z" fill="#c2907e"/><path d="M106,202L97,202L95,197z" fill="#987062"/><path d="M106,202L102,205L97,202z" fill="#b88877"/><path d="M105,189L106,202L95,197z" fill="#9b7364"/><path d="M110,195L106,202L105,189z" fill="#987163"/><path d="M89,216L82,227L83,213z" fill="#987062"/><path d="M89,216L92,226L82,227z" fill="#c08e7c"/><path d="M96,207L92,205L97,202z" fill="#bf8e7c"/><path d="M92,205L90,203L97,202z" fill="#987062"/><path d="M108,250L103,244L111,244z" fill="#987062"/><path d="M103,244L101,238L111,244z" fill="#b18373"/><path d="M103,244L108,250L99,250z" fill="#987062"/><path d="M103,244L94,239L101,238z" fill="#be8d7b"/><path d="M103,244L99,250L93,247z" fill="#987062"/><path d="M94,239L103,244L93,247z" fill="#bc8b7a"/><path d="M111,244L107,232L113,230z" fill="#a97d6d"/><path d="M101,238L107,232L111,244z" fill="#a97d6d"/><path d="M107,232L101,238L102,230z" fill="#b18373"/><path d="M107,232L111,226L113,230z" fill="#987062"/><path d="M107,232L102,230L111,226z" fill="#a77b6c"/><path d="M376,160L390,156L380,166z" fill="#be8d7b"/><path d="M390,156L376,160L374,155z" fill="#987062"/><path d="M373,167L376,160L380,166z" fill="#ba8a78"/><path d="M376,160L373,167L374,155z" fill="#987062"/><path d="M351,92L349,98L344,93z" fill="#b68776"/><path d="M349,98L344,99L344,93z" fill="#b68776"/><path d="M344,99L349,98L346,100z" fill="#aa7e6e"/><path d="M367,96L354,98L351,92z" fill="#aa7e6e"/><path d="M389,86L367,96L351,92z" fill="#b38574"/><path d="M350,125L356,123L352,131z" fill="#a17768"/><path d="M356,123L350,125L343,112z" fill="#b78876"/><path d="M350,125L337,114L343,112z" fill="#b88877"/><path d="M337,114L350,125L338,126z" fill="#b98a78"/><path d="M371,148L366,139L383,145z" fill="#ad8170"/><path d="M366,139L364,124L381,124z" fill="#b68775"/><path d="M364,124L371,109L381,124z" fill="#a77c6c"/><path d="M364,124L356,123L371,109z" fill="#ae8171"/><path d="M356,123L364,124L352,131z" fill="#b58675"/><path d="M364,124L366,139L352,131z" fill="#bb8b79"/><path d="M397,101L392,109L380,105z" fill="#c3907e"/><path d="M425,102L417,98L431,94z" fill="#c5927f"/><path d="M429,111L425,102L431,94z" fill="#9d7566"/><path d="M417,98L425,102L420,112z" fill="#b98978"/><path d="M412,177L424,181L412,181z" fill="#b18372"/><path d="M424,181L423,183L412,181z" fill="#bf8d7b"/><path d="M424,181L412,177L427,177z" fill="#9a7263"/><path d="M424,181L427,177L436,184z" fill="#9d7566"/><path d="M423,183L424,181L436,184z" fill="#be8d7b"/><path d="M390,140L383,145L381,124z" fill="#b68776"/><path d="M397,131L390,140L381,124z" fill="#b68776"/><path d="M392,109L396,122L381,124z" fill="#9f7667"/><path d="M425,102L426,112L420,112z" fill="#987062"/><path d="M426,112L425,102L429,111z" fill="#a47a6a"/><path d="M426,112L429,111L436,122z" fill="#a67b6b"/><path d="M430,133L422,129L436,122z" fill="#c4917f"/><path d="M430,137L430,133L440,136z" fill="#987062"/><path d="M430,133L436,122L440,136z" fill="#af8271"/><path d="M420,134L430,133L430,137z" fill="#987062"/><path d="M430,133L420,134L422,129z" fill="#c3917e"/><path d="M414,156L413,140L423,146z" fill="#b68776"/><path d="M420,134L413,140L415,134z" fill="#c3917e"/><path d="M413,140L420,134L423,146z" fill="#b58675"/><path d="M335,123L337,114L338,126z" fill="#ba8a78"/><path d="M335,123L330,119L337,114z" fill="#9f7667"/><path d="M325,128L335,123L338,126z" fill="#c3917e"/><path d="M330,119L335,123L325,128z" fill="#a47a6a"/><path d="M286,216L293,207L296,219z" fill="#b18373"/><path d="M293,207L286,216L267,200z" fill="#b08372"/><path d="M291,190L293,207L267,200z" fill="#a57a6a"/><path d="M287,179L267,200L261,188z" fill="#ae8170"/><path d="M287,179L291,190L267,200z" fill="#c4917f"/><path d="M265,176L287,179L261,188z" fill="#ba8a78"/><path d="M287,179L265,176L285,172z" fill="#987062"/><path d="M307,204L299,199L309,190z" fill="#a77c6c"/><path d="M299,199L293,207L291,190z" fill="#9e7566"/><path d="M295,175L303,165L302,174z" fill="#c5927f"/><path d="M303,165L285,154L300,154z" fill="#987162"/><path d="M313,151L303,165L300,154z" fill="#987062"/><path d="M316,171L303,165L317,169z" fill="#987062"/><path d="M303,165L313,151L319,156z" fill="#b98977"/><path d="M317,169L303,165L319,156z" fill="#bd8c7a"/><path d="M315,230L305,227L314,225z" fill="#987062"/><path d="M303,218L305,227L296,219z" fill="#9d7465"/><path d="M315,231L323,236L308,237z" fill="#c18f7d"/><path d="M315,230L315,231L308,237z" fill="#c18f7d"/><path d="M291,225L286,216L296,219z" fill="#b38473"/><path d="M291,225L282,218L286,216z" fill="#b68775"/><path d="M305,227L291,225L296,219z" fill="#ac7f6f"/><path d="M291,225L305,227L293,235z" fill="#9e7566"/><path d="M291,225L293,235L277,230z" fill="#a27869"/><path d="M276,226L291,225L277,230z" fill="#987062"/><path d="M282,218L291,225L276,226z" fill="#be8d7b"/><path d="M318,195L329,183L336,189z" fill="#b48574"/><path d="M327,182L329,183L318,195z" fill="#987062"/><path d="M331,169L324,166L335,162z" fill="#a87d6d"/><path d="M324,166L331,153L335,162z" fill="#b88977"/><path d="M303,165L309,177L302,174z" fill="#a87d6d"/><path d="M309,177L303,165L316,171z" fill="#b38474"/><path d="M327,182L323,178L325,173z" fill="#b58775"/><path d="M323,178L316,171L325,173z" fill="#ad8070"/><path d="M323,178L309,177L316,171z" fill="#b78876"/><path d="M309,177L323,178L309,190z" fill="#b08272"/><path d="M323,178L318,195L309,190z" fill="#a67b6b"/><path d="M323,178L327,182L318,195z" fill="#bf8d7b"/><path d="M295,90L280,92L284,87z" fill="#b28473"/><path d="M280,92L295,90L288,103z" fill="#9e7566"/><path d="M277,102L280,92L288,103z" fill="#9f7667"/><path d="M280,92L277,102L279,92z" fill="#b88877"/><path d="M245,111L255,128L243,120z" fill="#a37969"/><path d="M255,128L245,111L265,109z" fill="#b08271"/><path d="M245,111L243,120L228,110z" fill="#ba8a78"/><path d="M243,108L245,111L228,110z" fill="#a27869"/><path d="M255,128L268,128L258,134z" fill="#c2907d"/><path d="M268,119L268,128L255,128z" fill="#c18f7d"/><path d="M268,128L268,119L276,131z" fill="#bb8a79"/><path d="M268,128L259,145L258,134z" fill="#987062"/><path d="M268,128L276,131L259,145z" fill="#b38574"/><path d="M237,126L239,127L230,134z" fill="#987062"/><path d="M239,127L237,126L242,126z" fill="#987062"/><path d="M239,127L245,143L230,134z" fill="#af8271"/><path d="M239,127L242,126L249,129z" fill="#ac806f"/><path d="M245,143L239,127L249,129z" fill="#ab7f6e"/><path d="M312,98L301,105L297,90z" fill="#aa7e6e"/><path d="M301,105L302,114L288,103z" fill="#b68776"/><path d="M313,99L301,105L312,98z" fill="#987062"/><path d="M301,105L295,90L297,90z" fill="#a97d6d"/><path d="M295,90L301,105L288,103z" fill="#b38574"/><path d="M302,114L301,105L310,115z" fill="#b38574"/><path d="M301,105L313,99L310,115z" fill="#b38473"/><path d="M320,152L316,149L324,141z" fill="#987062"/><path d="M320,152L331,153L319,156z" fill="#be8d7b"/><path d="M313,151L320,152L319,156z" fill="#ba8a78"/><path d="M316,149L320,152L313,151z" fill="#987062"/><path d="M342,133L325,128L338,126z" fill="#a07667"/><path d="M342,133L337,142L325,128z" fill="#b38574"/><path d="M350,125L342,133L338,126z" fill="#a07667"/><path d="M342,133L350,125L352,131z" fill="#a97d6d"/><path d="M339,145L342,133L348,149z" fill="#b38473"/><path d="M331,144L324,141L325,128z" fill="#9f7667"/><path d="M337,142L331,144L325,128z" fill="#a67b6c"/><path d="M331,144L320,152L324,141z" fill="#a27869"/><path d="M320,152L331,144L331,153z" fill="#c18f7d"/><path d="M410,260L416,260L419,278z" fill="#b38474"/><path d="M409,261L410,260L419,278z" fill="#a67b6b"/><path d="M416,260L410,260L408,257z" fill="#b38574"/><path d="M410,260L409,261L408,257z" fill="#ab7f6f"/><path d="M405,279L409,261L419,278z" fill="#ae8170"/><path d="M336,203L334,205L333,201z" fill="#9e7566"/><path d="M336,203L342,204L334,205z" fill="#987062"/><path d="M336,203L333,201L342,191z" fill="#c4917f"/><path d="M342,204L336,203L342,191z" fill="#9f7667"/><path d="M305,227L307,218L314,225z" fill="#c08e7c"/><path d="M307,218L305,227L303,218z" fill="#987062"/><path d="M319,211L321,205L328,211z" fill="#987062"/><path d="M313,205L316,200L321,205z" fill="#a27869"/><path d="M319,211L313,205L321,205z" fill="#ba8a78"/><path d="M313,205L319,211L313,211z" fill="#c4917f"/><path d="M316,200L313,205L307,204z" fill="#987062"/><path d="M313,205L313,211L307,204z" fill="#b88877"/><path d="M192,96L186,88L189,88z" fill="#a17768"/><path d="M192,96L190,100L186,88z" fill="#9f7667"/><path d="M192,96L193,103L190,100z" fill="#ae8171"/><path d="M187,184L188,177L192,183z" fill="#a07768"/><path d="M185,177L182,183L181,177z" fill="#987062"/><path d="M185,177L181,177L182,172z" fill="#987062"/><path d="M185,177L187,184L182,183z" fill="#bd8c7a"/><path d="M187,184L185,177L188,177z" fill="#b78876"/><path d="M185,169L185,177L182,172z" fill="#987062"/><path d="M188,177L185,177L185,169z" fill="#ab7f6f"/><path d="M182,158L185,154L186,159z" fill="#a67b6b"/><path d="M185,154L187,154L186,159z" fill="#ba8a79"/><path d="M185,154L186,150L187,154z" fill="#ab7f6e"/><path d="M172,160L182,158L177,166z" fill="#ac806f"/><path d="M172,160L171,157L182,158z" fill="#9c7365"/><path d="M167,151L164,148L169,144z" fill="#c2907d"/><path d="M178,143L167,151L169,144z" fill="#bb8a79"/><path d="M164,148L167,151L163,155z" fill="#b78876"/><path d="M158,127L162,129L161,130z" fill="#987062"/><path d="M162,129L158,127L162,125z" fill="#c18f7d"/><path d="M162,129L168,126L161,130z" fill="#987062"/><path d="M162,129L162,125L168,126z" fill="#bd8c7a"/><path d="M142,133L138,134L138,124z" fill="#ac7f6f"/><path d="M145,128L142,133L138,124z" fill="#a07767"/><path d="M142,133L138,134L138,134z" fill="#987062"/><path d="M138,116L148,119L138,124z" fill="#c08f7c"/><path d="M148,119L145,128L138,124z" fill="#987062"/><path d="M139,112L148,119L138,116z" fill="#ae8170"/><path d="M140,110L148,119L139,112z" fill="#b78776"/><path d="M157,109L148,119L142,108z" fill="#c3907e"/><path d="M148,119L140,110L142,108z" fill="#ac806f"/><path d="M160,134L161,130L165,138z" fill="#ab7f6f"/><path d="M160,134L160,134L165,138z" fill="#ac806f"/><path d="M160,134L158,127L161,130z" fill="#b38574"/><path d="M158,127L160,134L153,136z" fill="#c2907d"/><path d="M160,134L160,134L153,136z" fill="#bc8b79"/><path d="M199,146L186,144L186,143z" fill="#987062"/><path d="M186,150L186,144L199,146z" fill="#c3907e"/><path d="M161,130L171,137L165,138z" fill="#ad8070"/><path d="M171,137L161,130L170,127z" fill="#ab7f6f"/><path d="M183,117L176,113L181,111z" fill="#b98977"/><path d="M118,102L120,101L117,104z" fill="#987062"/><path d="M114,98L118,102L117,104z" fill="#ab7f6e"/><path d="M118,102L119,97L120,101z" fill="#a37969"/><path d="M119,97L118,102L114,98z" fill="#a97d6d"/><path d="M110,100L107,98L108,96z" fill="#987062"/><path d="M114,98L110,100L108,96z" fill="#987062"/><path d="M107,98L110,100L107,102z" fill="#a67b6b"/><path d="M110,100L117,104L107,102z" fill="#bc8c7a"/><path d="M110,100L114,98L117,104z" fill="#a97e6e"/><path d="M98,89L97,85L103,86z" fill="#987062"/><path d="M97,85L98,89L89,85z" fill="#9f7667"/><path d="M103,86L97,85L145,85z" fill="#987062"/><path d="M145,85L97,85L80,85z" fill="#b68776"/><path d="M97,85L89,85L80,85z" fill="#c2907e"/><path d="M96,100L103,96L103,100z" fill="#be8d7b"/><path d="M103,96L96,100L99,91z" fill="#987062"/><path d="M103,96L105,99L103,100z" fill="#987062"/><path d="M108,96L103,96L103,86z" fill="#b38574"/><path d="M103,96L99,91L103,86z" fill="#987062"/><path d="M107,98L103,96L108,96z" fill="#987062"/><path d="M103,96L107,98L105,99z" fill="#987062"/><path d="M100,174L94,169L96,167z" fill="#9c7465"/><path d="M105,165L100,174L96,167z" fill="#a67b6b"/><path d="M99,176L100,174L103,177z" fill="#c18f7d"/><path d="M100,174L105,165L103,177z" fill="#be8d7b"/><path d="M92,171L87,174L90,170z" fill="#987062"/><path d="M92,171L90,175L87,174z" fill="#987062"/><path d="M91,169L92,171L90,170z" fill="#987062"/><path d="M94,169L92,171L91,169z" fill="#a07767"/><path d="M90,175L92,171L99,176z" fill="#c18f7d"/><path d="M92,171L100,174L99,176z" fill="#ba8a78"/><path d="M100,174L92,171L94,169z" fill="#987062"/><path d="M106,189L105,189L111,182z" fill="#987062"/><path d="M108,190L106,189L111,182z" fill="#987062"/><path d="M106,189L108,190L105,189z" fill="#987062"/><path d="M128,174L125,181L123,181z" fill="#987062"/><path d="M127,181L125,181L128,174z" fill="#b48674"/><path d="M125,181L124,188L123,181z" fill="#987162"/><path d="M125,181L127,181L124,188z" fill="#ba8a78"/><path d="M125,145L124,149L124,145z" fill="#b98977"/><path d="M124,149L125,145L128,144z" fill="#987062"/><path d="M128,142L125,145L124,145z" fill="#c08e7c"/><path d="M125,145L128,142L128,144z" fill="#987062"/><path d="M121,163L131,162L129,168z" fill="#987062"/><path d="M121,163L120,158L131,162z" fill="#b68776"/><path d="M123,170L121,163L129,168z" fill="#a27869"/><path d="M120,158L121,163L115,160z" fill="#aa7e6e"/><path d="M121,163L123,170L112,162z" fill="#b38473"/><path d="M115,160L121,163L112,162z" fill="#a37969"/><path d="M124,145L116,147L117,144z" fill="#987062"/><path d="M124,149L116,147L124,145z" fill="#c18f7d"/><path d="M117,144L116,147L106,145z" fill="#987062"/><path d="M116,147L108,152L106,145z" fill="#b78776"/><path d="M116,147L115,160L108,152z" fill="#b28473"/><path d="M116,147L120,158L115,160z" fill="#997163"/><path d="M143,142L143,143L142,143z" fill="#987062"/><path d="M143,143L143,142L148,141z" fill="#987062"/><path d="M160,106L164,110L157,109z" fill="#a4796a"/><path d="M169,104L171,104L170,108z" fill="#a57a6b"/><path d="M177,100L171,104L168,102z" fill="#c3917e"/><path d="M171,104L169,104L168,102z" fill="#b18372"/><path d="M164,110L162,115L157,109z" fill="#987062"/><path d="M162,118L162,115L165,116z" fill="#b78876"/><path d="M97,147L96,148L94,143z" fill="#987062"/><path d="M97,149L96,148L97,147z" fill="#ad8070"/><path d="M96,148L86,152L94,143z" fill="#aa7e6e"/><path d="M86,152L96,148L89,156z" fill="#bb8a79"/><path d="M96,148L97,149L89,156z" fill="#c4917f"/><path d="M131,94L129,92L131,89z" fill="#ad8070"/><path d="M131,94L131,89L145,97z" fill="#9c7465"/><path d="M134,100L131,94L145,97z" fill="#ba8a78"/><path d="M127,97L131,94L134,100z" fill="#c08f7c"/><path d="M129,92L131,94L127,97z" fill="#c08e7c"/><path d="M127,97L121,99L117,90z" fill="#987062"/><path d="M121,99L119,97L117,90z" fill="#9c7465"/><path d="M119,97L121,99L120,101z" fill="#b78877"/><path d="M120,101L121,99L130,102z" fill="#a17768"/><path d="M121,99L127,97L130,102z" fill="#a27869"/><path d="M150,190L153,184L155,186z" fill="#987062"/><path d="M154,192L150,190L155,186z" fill="#bc8c7a"/><path d="M155,204L154,193L158,203z" fill="#a07767"/><path d="M159,209L155,204L158,203z" fill="#a37969"/><path d="M140,208L145,205L145,211z" fill="#a07767"/><path d="M145,205L140,208L138,202z" fill="#987062"/><path d="M146,213L147,214L148,216z" fill="#a97d6d"/><path d="M147,214L146,213L145,211z" fill="#c18f7d"/><path d="M138,228L133,219L143,229z" fill="#ad8070"/><path d="M142,233L138,228L143,229z" fill="#aa7e6e"/><path d="M132,230L138,228L142,233z" fill="#b48674"/><path d="M159,209L164,211L157,213z" fill="#c4917e"/><path d="M150,222L152,223L149,224z" fill="#987162"/><path d="M150,222L151,219L152,223z" fill="#987062"/><path d="M148,216L150,222L149,224z" fill="#987062"/><path d="M151,219L150,222L148,216z" fill="#9f7667"/><path d="M175,260L174,258L178,261z" fill="#c08e7c"/><path d="M174,258L182,258L178,261z" fill="#c08e7c"/><path d="M182,258L174,258L174,253z" fill="#9f7667"/><path d="M174,253L174,258L173,259z" fill="#9e7566"/><path d="M174,258L175,260L173,259z" fill="#c18f7d"/><path d="M171,246L172,241L173,245z" fill="#a17768"/><path d="M156,237L172,241L171,246z" fill="#b78877"/><path d="M172,241L156,237L164,232z" fill="#af8271"/><path d="M190,237L184,244L188,237z" fill="#c3907e"/><path d="M184,244L190,237L193,237z" fill="#987062"/><path d="M191,263L189,261L201,252z" fill="#c5927f"/><path d="M180,249L182,258L174,253z" fill="#a4796a"/><path d="M180,249L179,247L180,247z" fill="#987062"/><path d="M184,244L180,249L180,247z" fill="#b18372"/><path d="M159,251L156,249L167,250z" fill="#987062"/><path d="M165,256L159,251L167,250z" fill="#ad8070"/><path d="M177,192L176,187L177,192z" fill="#987062"/><path d="M176,187L177,192L173,191z" fill="#b78776"/><path d="M177,194L177,192L177,192z" fill="#987062"/><path d="M173,191L177,192L177,194z" fill="#987062"/><path d="M176,187L176,180L182,183z" fill="#987062"/><path d="M176,180L172,187L170,176z" fill="#a3796a"/><path d="M176,180L176,187L172,187z" fill="#a87d6d"/><path d="M188,225L185,211L195,207z" fill="#987062"/><path d="M170,209L166,213L165,211z" fill="#c2907d"/><path d="M170,214L166,213L170,209z" fill="#987062"/><path d="M166,213L164,211L165,211z" fill="#9a7264"/><path d="M164,211L166,213L157,213z" fill="#987062"/><path d="M178,220L179,226L173,227z" fill="#ae8171"/><path d="M179,226L178,220L188,225z" fill="#9b7364"/><path d="M178,220L185,211L188,225z" fill="#987062"/><path d="M178,220L170,214L183,207z" fill="#bd8c7a"/><path d="M185,211L178,220L183,207z" fill="#c18f7d"/><path d="M183,201L187,205L183,207z" fill="#987062"/><path d="M187,205L185,211L183,207z" fill="#bf8e7c"/><path d="M185,211L187,205L195,207z" fill="#af8171"/><path d="M178,196L177,194L177,192z" fill="#b48674"/><path d="M180,196L178,196L177,192z" fill="#ab7f6e"/><path d="M177,194L178,196L172,196z" fill="#b58675"/><path d="M178,196L183,201L172,196z" fill="#b28473"/><path d="M178,196L180,196L183,201z" fill="#9b7364"/><path d="M144,248L148,245L145,257z" fill="#987062"/><path d="M148,245L150,243L151,245z" fill="#bf8d7b"/><path d="M148,245L144,248L143,243z" fill="#ba8a78"/><path d="M144,248L142,248L143,243z" fill="#b58675"/><path d="M156,231L156,234L152,234z" fill="#9e7566"/><path d="M156,234L156,231L157,231z" fill="#987062"/><path d="M164,232L156,234L157,231z" fill="#b48574"/><path d="M156,237L156,234L164,232z" fill="#987062"/><path d="M128,271L132,280L120,284z" fill="#b48674"/><path d="M145,234L143,239L142,233z" fill="#ae8170"/><path d="M145,234L147,229L152,234z" fill="#b08372"/><path d="M147,229L145,234L142,233z" fill="#c4917f"/><path d="M138,242L132,230L142,233z" fill="#ac7f6f"/><path d="M143,239L138,242L142,233z" fill="#987062"/><path d="M130,231L138,242L131,246z" fill="#aa7e6e"/><path d="M138,242L130,231L132,230z" fill="#a57a6b"/><path d="M138,242L143,239L143,243z" fill="#b88977"/><path d="M118,221L118,223L116,218z" fill="#9b7364"/><path d="M118,221L125,222L123,225z" fill="#a37969"/><path d="M118,223L118,221L123,225z" fill="#987062"/><path d="M133,215L134,207L140,208z" fill="#987062"/><path d="M133,215L133,219L131,215z" fill="#987062"/><path d="M146,213L133,215L140,208z" fill="#bf8e7b"/><path d="M133,219L133,215L146,213z" fill="#987062"/><path d="M133,215L131,212L134,207z" fill="#b78876"/><path d="M170,284L179,282L178,283z" fill="#987062"/><path d="M170,284L177,277L179,282z" fill="#bb8a79"/><path d="M170,284L162,280L166,275z" fill="#ac806f"/><path d="M147,284L170,284L146,285z" fill="#987062"/><path d="M158,280L170,284L147,284z" fill="#9b7364"/><path d="M170,284L158,280L162,280z" fill="#af8171"/><path d="M146,285L170,284L269,284z" fill="#b98978"/><path d="M170,284L218,280L269,284z" fill="#bb8b79"/><path d="M170,284L178,283L218,280z" fill="#987062"/><path d="M158,280L158,280L147,284z" fill="#be8d7b"/><path d="M177,277L169,274L176,276z" fill="#a17768"/><path d="M169,274L170,284L166,275z" fill="#a07667"/><path d="M170,284L169,274L177,277z" fill="#bc8c7a"/><path d="M163,270L166,273L166,275z" fill="#a07768"/><path d="M170,272L166,273L163,270z" fill="#987062"/><path d="M166,273L169,274L166,275z" fill="#b28473"/><path d="M169,274L166,273L170,272z" fill="#987062"/><path d="M247,239L255,236L255,244z" fill="#ad8070"/><path d="M243,242L247,239L255,244z" fill="#ad8070"/><path d="M247,239L244,226L255,236z" fill="#a3796a"/><path d="M247,239L243,242L239,230z" fill="#9f7666"/><path d="M244,226L247,239L239,230z" fill="#9e7566"/><path d="M213,270L219,274L218,280z" fill="#987062"/><path d="M219,274L234,273L218,280z" fill="#bc8b7a"/><path d="M211,261L213,270L209,268z" fill="#b78776"/><path d="M196,269L187,265L191,263z" fill="#987062"/><path d="M186,264L187,265L182,268z" fill="#c4917f"/><path d="M187,265L180,272L182,268z" fill="#be8d7b"/><path d="M187,265L196,269L180,272z" fill="#987062"/><path d="M244,226L250,222L255,236z" fill="#9b7364"/><path d="M250,222L241,221L251,213z" fill="#ba8a78"/><path d="M250,222L244,226L241,221z" fill="#a97d6d"/><path d="M255,236L250,222L269,235z" fill="#9d7465"/><path d="M250,222L271,217L269,235z" fill="#af8271"/><path d="M228,218L218,217L224,208z" fill="#b18372"/><path d="M218,217L216,199L224,208z" fill="#b38574"/><path d="M218,217L213,218L204,209z" fill="#ae8170"/><path d="M216,199L218,217L204,209z" fill="#a87d6d"/><path d="M228,218L235,214L232,222z" fill="#a17768"/><path d="M237,206L235,214L224,208z" fill="#987062"/><path d="M235,214L228,218L224,208z" fill="#9e7566"/><path d="M214,240L209,229L220,229z" fill="#b18372"/><path d="M213,127L211,124L219,120z" fill="#c2907d"/><path d="M213,127L199,146L196,140z" fill="#c3917e"/><path d="M211,124L213,127L196,140z" fill="#c2907d"/><path d="M211,124L202,118L215,115z" fill="#a87d6d"/><path d="M215,115L202,118L212,110z" fill="#987062"/><path d="M245,143L246,152L245,143z" fill="#987062"/><path d="M241,162L244,168L241,162z" fill="#9a7264"/><path d="M241,162L244,168L231,165z" fill="#c5927f"/><path d="M244,168L244,175L231,165z" fill="#a17768"/><path d="M92,271L92,274L89,274z" fill="#c08e7c"/><path d="M92,274L93,275L89,274z" fill="#987062"/><path d="M92,274L92,271L96,275z" fill="#b18372"/><path d="M93,275L92,274L96,275z" fill="#987062"/><path d="M89,252L86,249L88,247z" fill="#bd8c7a"/><path d="M86,249L89,252L86,251z" fill="#ab7f6e"/><path d="M86,249L84,247L88,247z" fill="#b78877"/><path d="M86,249L86,251L81,249z" fill="#987062"/><path d="M84,247L86,249L81,249z" fill="#bd8c7a"/><path d="M112,259L118,266L114,266z" fill="#b08272"/><path d="M112,259L114,257L118,266z" fill="#b38574"/><path d="M112,259L114,266L111,266z" fill="#987062"/><path d="M108,258L112,259L111,266z" fill="#c5927f"/><path d="M114,257L112,259L108,258z" fill="#aa7e6e"/><path d="M110,267L113,274L105,269z" fill="#a67b6b"/><path d="M110,267L105,266L111,266z" fill="#987062"/><path d="M105,266L110,267L105,269z" fill="#be8d7b"/><path d="M110,267L111,266L114,267z" fill="#b88977"/><path d="M113,274L110,267L114,267z" fill="#a57a6b"/><path d="M92,228L88,230L92,226z" fill="#b98978"/><path d="M92,228L92,226L93,226z" fill="#987062"/><path d="M92,228L95,230L90,234z" fill="#987062"/><path d="M88,230L92,228L90,234z" fill="#be8d7b"/><path d="M100,215L94,216L101,210z" fill="#c5927f"/><path d="M94,216L96,207L101,210z" fill="#987062"/><path d="M94,216L92,205L96,207z" fill="#ba8a78"/><path d="M92,205L94,216L89,216z" fill="#bb8b79"/><path d="M94,216L104,221L93,226z" fill="#b98977"/><path d="M94,216L100,215L104,221z" fill="#a97d6d"/><path d="M92,226L94,216L93,226z" fill="#987062"/><path d="M89,216L94,216L92,226z" fill="#c08e7c"/><path d="M84,213L89,216L83,213z" fill="#a87d6d"/><path d="M84,213L92,205L89,216z" fill="#ac806f"/><path d="M92,205L84,213L90,203z" fill="#987062"/><path d="M82,204L84,213L83,213z" fill="#987062"/><path d="M90,203L84,213L82,204z" fill="#a17768"/><path d="M349,98L351,99L346,100z" fill="#c3917e"/><path d="M346,100L351,99L343,112z" fill="#b88877"/><path d="M351,99L354,98L343,112z" fill="#987062"/><path d="M354,98L351,99L351,92z" fill="#987062"/><path d="M351,99L349,98L351,92z" fill="#c4917f"/><path d="M373,105L380,105L371,109z" fill="#987062"/><path d="M367,96L364,100L354,98z" fill="#c2907e"/><path d="M356,123L364,100L371,109z" fill="#a97d6d"/><path d="M364,100L356,123L354,98z" fill="#bd8c7a"/><path d="M364,100L373,105L371,109z" fill="#a07768"/><path d="M373,105L364,100L367,96z" fill="#b98977"/><path d="M374,149L383,145L374,155z" fill="#c5927f"/><path d="M374,149L371,148L383,145z" fill="#987062"/><path d="M357,148L358,162L348,149z" fill="#b48674"/><path d="M413,100L417,98L420,112z" fill="#987062"/><path d="M390,143L390,156L383,145z" fill="#b28473"/><path d="M390,140L390,143L383,145z" fill="#c18f7d"/><path d="M397,128L397,131L381,124z" fill="#ac806f"/><path d="M396,122L397,128L381,124z" fill="#c18f7d"/><path d="M420,126L422,129L415,134z" fill="#987062"/><path d="M426,112L420,126L420,112z" fill="#a97d6d"/><path d="M422,129L420,126L436,122z" fill="#987062"/><path d="M420,126L426,112L436,122z" fill="#bc8b7a"/><path d="M408,141L414,156L390,156z" fill="#b08372"/><path d="M408,141L413,140L414,156z" fill="#aa7e6e"/><path d="M390,143L408,141L390,156z" fill="#b28473"/><path d="M408,141L390,143L390,140z" fill="#c08f7c"/><path d="M408,141L390,140L397,131z" fill="#b28473"/><path d="M413,140L408,141L415,134z" fill="#ba8a78"/><path d="M301,211L299,199L307,204z" fill="#ae8170"/><path d="M299,199L301,211L293,207z" fill="#b38574"/><path d="M301,211L303,218L296,219z" fill="#c4917f"/><path d="M293,207L301,211L296,219z" fill="#b48574"/><path d="M287,179L296,184L291,190z" fill="#c4927f"/><path d="M295,179L295,175L296,176z" fill="#ba8a78"/><path d="M295,179L296,184L287,179z" fill="#ae8170"/><path d="M295,179L296,176L302,174z" fill="#987062"/><path d="M290,173L303,165L295,175z" fill="#b98978"/><path d="M290,173L287,179L285,172z" fill="#987062"/><path d="M285,154L290,173L285,172z" fill="#ab7f6f"/><path d="M303,165L290,173L285,154z" fill="#a97d6d"/><path d="M295,179L290,173L295,175z" fill="#b98977"/><path d="M290,173L295,179L287,179z" fill="#b58675"/><path d="M305,231L315,230L308,237z" fill="#b68775"/><path d="M305,231L305,227L315,230z" fill="#a17768"/><path d="M293,235L305,231L308,237z" fill="#b68776"/><path d="M305,227L305,231L293,235z" fill="#a07667"/><path d="M315,231L317,230L323,236z" fill="#b68776"/><path d="M317,230L317,228L331,230z" fill="#987062"/><path d="M323,236L317,230L331,230z" fill="#c5927f"/><path d="M317,230L315,230L317,228z" fill="#987062"/><path d="M317,230L315,231L315,230z" fill="#bb8b79"/><path d="M331,182L329,183L327,182z" fill="#a07667"/><path d="M331,182L331,169L339,176z" fill="#af8271"/><path d="M331,182L339,176L336,189z" fill="#be8d7b"/><path d="M329,183L331,182L336,189z" fill="#a87c6c"/><path d="M331,182L327,182L325,173z" fill="#987062"/><path d="M331,169L331,182L325,173z" fill="#997263"/><path d="M321,166L317,169L319,156z" fill="#987062"/><path d="M323,169L331,169L325,173z" fill="#bf8e7c"/><path d="M323,169L324,166L331,169z" fill="#ac806f"/><path d="M323,169L321,166L324,166z" fill="#b98978"/><path d="M321,166L323,169L317,169z" fill="#b38574"/><path d="M316,171L323,169L325,173z" fill="#c2907e"/><path d="M323,169L316,171L317,169z" fill="#987062"/><path d="M281,87L279,92L274,87z" fill="#c18f7d"/><path d="M281,87L280,92L279,92z" fill="#bd8c7a"/><path d="M281,87L274,87L284,87z" fill="#987062"/><path d="M280,92L281,87L284,87z" fill="#c3917e"/><path d="M258,99L245,111L243,108z" fill="#a57a6a"/><path d="M258,99L243,108L241,98z" fill="#ac806f"/><path d="M258,99L262,100L265,109z" fill="#9e7566"/><path d="M245,111L258,99L265,109z" fill="#9f7667"/><path d="M258,99L241,98L243,91z" fill="#bf8e7c"/><path d="M248,87L258,99L243,91z" fill="#a67b6c"/><path d="M258,99L248,87L268,95z" fill="#b18373"/><path d="M262,100L258,99L268,95z" fill="#b38574"/><path d="M338,144L331,144L337,142z" fill="#c3917e"/><path d="M338,144L342,133L339,145z" fill="#987062"/><path d="M342,133L338,144L337,142z" fill="#c08e7c"/><path d="M338,144L339,145L331,153z" fill="#987062"/><path d="M331,144L338,144L331,153z" fill="#bf8d7b"/><path d="M405,279L395,274L409,261z" fill="#9d7566"/><path d="M387,253L395,274L384,266z" fill="#aa7e6e"/><path d="M409,261L395,274L387,253z" fill="#a97d6d"/><path d="M395,274L386,277L384,266z" fill="#ac7f6f"/><path d="M386,277L395,274L387,284z" fill="#bf8d7b"/><path d="M399,281L419,278L440,285z" fill="#bd8c7a"/><path d="M399,281L405,279L419,278z" fill="#bd8c7a"/><path d="M387,284L399,281L440,285z" fill="#c08e7c"/><path d="M395,274L399,281L387,284z" fill="#b38574"/><path d="M399,281L395,274L405,279z" fill="#aa7e6e"/><path d="M307,218L317,216L314,225z" fill="#c4917f"/><path d="M317,216L307,218L313,211z" fill="#ac806f"/><path d="M319,211L317,216L313,211z" fill="#a67b6b"/><path d="M314,225L317,216L317,228z" fill="#9c7465"/><path d="M317,216L329,221L317,228z" fill="#bb8b79"/><path d="M329,221L317,216L328,211z" fill="#ba8a78"/><path d="M317,216L319,211L328,211z" fill="#987062"/><path d="M192,96L197,96L193,103z" fill="#b38473"/><path d="M206,98L197,96L199,95z" fill="#987062"/><path d="M197,96L206,98L193,103z" fill="#bc8c7a"/><path d="M199,95L197,96L189,88z" fill="#987062"/><path d="M197,96L192,96L189,88z" fill="#9e7566"/><path d="M182,183L187,185L185,194z" fill="#bb8b79"/><path d="M187,184L187,185L182,183z" fill="#987062"/><path d="M185,194L187,185L193,188z" fill="#a87d6d"/><path d="M187,185L192,183L193,188z" fill="#ae8171"/><path d="M187,185L187,184L192,183z" fill="#987062"/><path d="M181,153L185,154L182,158z" fill="#bc8c7a"/><path d="M185,154L181,153L186,150z" fill="#a87d6d"/><path d="M171,157L181,153L182,158z" fill="#c3907e"/><path d="M167,151L181,153L171,157z" fill="#a37969"/><path d="M181,153L167,151L178,143z" fill="#b08372"/><path d="M168,159L160,162L163,155z" fill="#b28473"/><path d="M160,162L168,159L166,176z" fill="#a77c6c"/><path d="M167,151L168,159L163,155z" fill="#a47a6a"/><path d="M168,159L167,151L171,157z" fill="#a17768"/><path d="M143,142L143,139L148,141z" fill="#c3917e"/><path d="M143,139L137,138L138,134z" fill="#a27869"/><path d="M142,133L143,139L138,134z" fill="#987062"/><path d="M143,139L143,142L142,143z" fill="#987062"/><path d="M138,140L143,139L142,143z" fill="#b78776"/><path d="M137,138L143,139L138,140z" fill="#b18372"/><path d="M151,136L142,133L145,128z" fill="#b28473"/><path d="M151,136L143,139L142,133z" fill="#987062"/><path d="M151,136L158,127L153,136z" fill="#c2907d"/><path d="M148,141L151,136L153,136z" fill="#c3907e"/><path d="M143,139L151,136L148,141z" fill="#c4917e"/><path d="M148,119L150,123L145,128z" fill="#b08372"/><path d="M150,123L151,136L145,128z" fill="#ac7f6f"/><path d="M158,127L150,123L155,124z" fill="#987062"/><path d="M151,136L150,123L158,127z" fill="#9e7566"/><path d="M171,137L180,134L178,143z" fill="#be8d7b"/><path d="M185,136L180,134L183,130z" fill="#9b7364"/><path d="M183,130L180,134L170,127z" fill="#987062"/><path d="M180,134L171,137L170,127z" fill="#a97d6d"/><path d="M169,141L164,143L165,138z" fill="#9d7566"/><path d="M164,143L169,141L169,144z" fill="#b38574"/><path d="M169,141L178,143L169,144z" fill="#c18f7d"/><path d="M169,141L171,137L178,143z" fill="#bc8c7a"/><path d="M170,124L176,113L183,117z" fill="#c3907e"/><path d="M170,124L183,130L170,127z" fill="#bf8e7b"/><path d="M170,124L183,117L183,130z" fill="#b98977"/><path d="M168,126L170,124L170,127z" fill="#ba8a78"/><path d="M170,124L162,118L165,116z" fill="#a57a6b"/><path d="M170,124L168,126L163,124z" fill="#b88977"/><path d="M162,118L170,124L163,124z" fill="#a47a6a"/><path d="M176,113L174,112L181,111z" fill="#987062"/><path d="M174,112L170,124L165,116z" fill="#b28473"/><path d="M170,124L174,112L176,113z" fill="#987062"/><path d="M123,152L116,147L124,149z" fill="#b58675"/><path d="M116,147L123,152L120,158z" fill="#ac7f6f"/><path d="M123,152L124,149L129,153z" fill="#9e7566"/><path d="M120,158L123,152L129,153z" fill="#987062"/><path d="M165,112L174,112L165,116z" fill="#987062"/><path d="M174,112L165,112L170,108z" fill="#bf8e7b"/><path d="M162,115L165,112L165,116z" fill="#987062"/><path d="M165,112L162,115L164,110z" fill="#b68776"/><path d="M165,108L169,104L170,108z" fill="#987062"/><path d="M165,112L165,108L170,108z" fill="#bb8b79"/><path d="M165,108L165,112L164,110z" fill="#bb8b79"/><path d="M165,108L164,110L160,106z" fill="#a07768"/><path d="M165,108L160,106L168,102z" fill="#987062"/><path d="M169,104L165,108L168,102z" fill="#c18f7d"/><path d="M150,190L149,185L153,184z" fill="#987062"/><path d="M149,185L150,190L144,187z" fill="#987062"/><path d="M149,185L144,187L144,186z" fill="#987062"/><path d="M143,177L149,185L144,186z" fill="#a97d6d"/><path d="M153,184L149,185L143,177z" fill="#a57b6b"/><path d="M153,192L154,192L154,193z" fill="#af8271"/><path d="M153,192L150,190L154,192z" fill="#987062"/><path d="M144,187L142,192L141,188z" fill="#b48574"/><path d="M150,190L142,192L144,187z" fill="#987062"/><path d="M136,189L142,192L138,202z" fill="#c18f7d"/><path d="M141,188L142,192L136,189z" fill="#b68775"/><path d="M170,209L167,206L172,196z" fill="#987062"/><path d="M167,206L170,209L165,211z" fill="#987062"/><path d="M164,211L167,206L165,211z" fill="#987062"/><path d="M165,200L162,195L172,196z" fill="#c4927f"/><path d="M167,206L165,200L172,196z" fill="#987062"/><path d="M165,200L167,206L165,204z" fill="#987062"/><path d="M162,195L165,200L158,203z" fill="#bc8b7a"/><path d="M165,200L165,204L158,203z" fill="#ad8070"/><path d="M163,207L159,209L158,203z" fill="#af8271"/><path d="M165,204L163,207L158,203z" fill="#a17868"/><path d="M163,207L164,211L159,209z" fill="#bf8e7b"/><path d="M167,206L163,207L165,204z" fill="#987062"/><path d="M163,207L167,206L164,211z" fill="#c3917e"/><path d="M155,204L149,194L154,193z" fill="#c18f7d"/><path d="M149,194L155,204L149,204z" fill="#c18f7d"/><path d="M149,194L153,192L154,193z" fill="#c08f7c"/><path d="M153,192L149,194L150,190z" fill="#987062"/><path d="M149,194L142,192L150,190z" fill="#9f7667"/><path d="M152,212L159,209L157,213z" fill="#987162"/><path d="M152,212L155,204L159,209z" fill="#a47a6a"/><path d="M147,214L152,212L148,216z" fill="#b38574"/><path d="M152,212L151,219L148,216z" fill="#ae8170"/><path d="M152,212L147,214L145,211z" fill="#c5927f"/><path d="M152,212L157,213L154,219z" fill="#987062"/><path d="M151,219L152,212L154,219z" fill="#987062"/><path d="M133,225L138,228L132,230z" fill="#987062"/><path d="M138,228L133,225L133,219z" fill="#a07667"/><path d="M133,225L125,222L133,219z" fill="#be8d7b"/><path d="M130,231L133,225L132,230z" fill="#987062"/><path d="M133,225L130,231L125,222z" fill="#bc8c7a"/><path d="M186,231L179,226L187,230z" fill="#ac7f6f"/><path d="M172,241L175,245L173,245z" fill="#ba8a78"/><path d="M175,245L184,244L180,247z" fill="#c08f7c"/><path d="M179,247L175,245L180,247z" fill="#b18372"/><path d="M175,245L171,246L173,245z" fill="#b68775"/><path d="M175,245L174,253L171,246z" fill="#987062"/><path d="M175,245L180,249L174,253z" fill="#c3907e"/><path d="M180,249L175,245L179,247z" fill="#a97e6d"/><path d="M153,268L149,268L152,263z" fill="#987062"/><path d="M149,268L153,268L151,276z" fill="#987062"/><path d="M145,270L149,268L151,276z" fill="#a07767"/><path d="M144,265L149,268L145,270z" fill="#987062"/><path d="M144,265L145,257L152,263z" fill="#a77c6c"/><path d="M149,268L144,265L152,263z" fill="#987062"/><path d="M182,258L187,262L186,264z" fill="#9a7263"/><path d="M187,262L187,265L186,264z" fill="#ac7f6f"/><path d="M187,262L189,261L191,263z" fill="#b18372"/><path d="M187,265L187,262L191,263z" fill="#987062"/><path d="M184,256L180,249L184,244z" fill="#987062"/><path d="M180,249L184,256L182,258z" fill="#987062"/><path d="M184,256L184,244L201,252z" fill="#a87d6d"/><path d="M189,261L184,256L201,252z" fill="#bf8e7c"/><path d="M184,256L187,262L182,258z" fill="#b88877"/><path d="M187,262L184,256L189,261z" fill="#a97d6d"/><path d="M159,251L156,250L156,249z" fill="#987062"/><path d="M148,245L156,250L145,257z" fill="#a47a6a"/><path d="M156,249L156,250L151,245z" fill="#987062"/><path d="M156,250L148,245L151,245z" fill="#987062"/><path d="M157,257L165,256L164,258z" fill="#987062"/><path d="M157,257L159,251L165,256z" fill="#bd8c7a"/><path d="M158,260L157,257L164,258z" fill="#987062"/><path d="M157,257L158,260L155,261z" fill="#987062"/><path d="M157,257L156,250L159,251z" fill="#a27869"/><path d="M145,257L157,257L155,261z" fill="#b38574"/><path d="M156,250L157,257L145,257z" fill="#bf8d7b"/><path d="M182,183L178,179L181,177z" fill="#987062"/><path d="M176,180L178,179L182,183z" fill="#9e7566"/><path d="M178,179L177,169L181,177z" fill="#b58675"/><path d="M177,169L178,179L170,176z" fill="#a87d6d"/><path d="M178,179L176,180L170,176z" fill="#af8171"/><path d="M168,223L164,232L157,231z" fill="#ac806f"/><path d="M172,229L168,223L173,227z" fill="#a97e6d"/><path d="M164,232L168,223L171,231z" fill="#9b7364"/><path d="M168,223L172,229L171,231z" fill="#a17868"/><path d="M168,223L178,220L173,227z" fill="#9d7465"/><path d="M157,213L167,222L154,219z" fill="#a67b6b"/><path d="M166,213L167,222L157,213z" fill="#a67b6b"/><path d="M154,219L167,222L157,231z" fill="#b18473"/><path d="M167,222L168,223L157,231z" fill="#987062"/><path d="M178,220L167,222L170,214z" fill="#bd8c7a"/><path d="M168,223L167,222L178,220z" fill="#987062"/><path d="M187,205L193,204L195,207z" fill="#987062"/><path d="M138,242L138,247L131,246z" fill="#987062"/><path d="M142,248L138,247L143,243z" fill="#bb8b79"/><path d="M138,247L138,242L143,243z" fill="#987062"/><path d="M155,235L156,237L152,234z" fill="#987062"/><path d="M156,234L155,235L152,234z" fill="#987062"/><path d="M155,235L156,234L156,237z" fill="#987062"/><path d="M136,271L130,271L131,265z" fill="#9a7264"/><path d="M130,271L128,271L131,265z" fill="#987062"/><path d="M130,271L136,271L135,277z" fill="#bc8c7a"/><path d="M132,280L130,271L135,277z" fill="#bb8a79"/><path d="M128,271L130,271L132,280z" fill="#a27869"/><path d="M128,271L118,270L118,266z" fill="#a77c6c"/><path d="M118,266L118,270L114,267z" fill="#987062"/><path d="M118,270L113,274L114,267z" fill="#987062"/><path d="M113,274L118,270L120,284z" fill="#b58675"/><path d="M118,270L128,271L120,284z" fill="#a67b6c"/><path d="M145,234L146,238L143,239z" fill="#b68776"/><path d="M148,245L146,238L150,243z" fill="#a37969"/><path d="M150,243L146,238L152,234z" fill="#a27869"/><path d="M146,238L145,234L152,234z" fill="#b68776"/><path d="M143,239L146,238L143,243z" fill="#bd8c7a"/><path d="M146,238L148,245L143,243z" fill="#a97d6d"/><path d="M131,212L130,206L134,207z" fill="#987062"/><path d="M130,206L129,204L138,202z" fill="#b28473"/><path d="M134,207L130,206L138,202z" fill="#9c7365"/><path d="M129,204L130,206L117,208z" fill="#b38574"/><path d="M130,206L131,212L117,208z" fill="#987062"/><path d="M130,213L116,218L117,208z" fill="#b38574"/><path d="M131,212L130,213L117,208z" fill="#b28473"/><path d="M130,213L118,221L116,218z" fill="#c18f7d"/><path d="M118,221L130,213L125,222z" fill="#987062"/><path d="M125,222L130,213L131,215z" fill="#987062"/><path d="M130,213L133,215L131,215z" fill="#987062"/><path d="M130,213L131,212L133,215z" fill="#a67b6b"/><path d="M157,279L147,284L152,279z" fill="#c3917e"/><path d="M157,279L158,280L147,284z" fill="#987062"/><path d="M169,274L171,273L176,276z" fill="#987062"/><path d="M171,273L169,274L170,272z" fill="#b38574"/><path d="M176,276L171,273L180,272z" fill="#a47a6a"/><path d="M171,273L170,272L180,272z" fill="#bb8b79"/><path d="M219,274L225,265L234,273z" fill="#c2907d"/><path d="M225,265L219,274L213,270z" fill="#987062"/><path d="M223,246L214,240L220,229z" fill="#ac806f"/><path d="M223,246L220,229L239,230z" fill="#b48674"/><path d="M198,233L193,237L187,230z" fill="#ac806f"/><path d="M193,237L198,233L201,252z" fill="#b88977"/><path d="M188,225L198,233L187,230z" fill="#c18f7d"/><path d="M200,230L198,233L188,225z" fill="#bc8b7a"/><path d="M206,259L200,264L201,252z" fill="#ba8a78"/><path d="M200,264L206,259L209,268z" fill="#987062"/><path d="M206,259L211,261L209,268z" fill="#987162"/><path d="M271,217L254,216L258,212z" fill="#b18372"/><path d="M250,222L254,216L271,217z" fill="#bc8b79"/><path d="M258,212L254,216L251,213z" fill="#987062"/><path d="M254,216L250,222L251,213z" fill="#987062"/><path d="M220,226L232,222L220,229z" fill="#bd8c7a"/><path d="M218,217L220,226L213,218z" fill="#a27869"/><path d="M209,229L220,226L220,229z" fill="#b58675"/><path d="M232,222L238,214L241,221z" fill="#b68775"/><path d="M235,214L238,214L232,222z" fill="#c2907d"/><path d="M238,214L245,211L241,221z" fill="#b48574"/><path d="M245,211L238,214L237,206z" fill="#a77c6c"/><path d="M238,214L235,214L237,206z" fill="#ad8170"/><path d="M213,218L210,221L204,209z" fill="#a4796a"/><path d="M210,221L200,230L204,209z" fill="#9f7667"/><path d="M220,226L210,221L213,218z" fill="#9b7364"/><path d="M210,221L220,226L209,229z" fill="#b38473"/><path d="M225,130L220,132L219,120z" fill="#ab7f6f"/><path d="M220,132L213,127L219,120z" fill="#9c7465"/><path d="M221,155L220,132L230,134z" fill="#bc8b7a"/><path d="M220,132L225,130L230,134z" fill="#a07667"/><path d="M220,132L221,155L199,146z" fill="#b88877"/><path d="M213,127L220,132L199,146z" fill="#9d7566"/><path d="M202,118L201,114L212,110z" fill="#bb8b79"/><path d="M212,110L201,114L210,100z" fill="#b88977"/><path d="M201,114L206,98L210,100z" fill="#c4917e"/><path d="M206,98L201,114L198,112z" fill="#c4917e"/><path d="M198,112L195,117L190,106z" fill="#af8271"/><path d="M195,117L183,117L190,106z" fill="#a37969"/><path d="M201,114L195,117L198,112z" fill="#b38574"/><path d="M195,117L201,114L202,118z" fill="#b98978"/><path d="M194,123L211,124L196,140z" fill="#9c7465"/><path d="M194,123L202,118L211,124z" fill="#a4796a"/><path d="M191,137L194,123L196,140z" fill="#987062"/><path d="M194,123L195,117L202,118z" fill="#c4917f"/><path d="M194,123L191,137L186,130z" fill="#b48674"/><path d="M254,154L246,152L245,143z" fill="#ac806f"/><path d="M257,152L254,154L259,145z" fill="#987062"/><path d="M254,154L245,143L259,145z" fill="#b28473"/><path d="M245,143L241,155L235,157z" fill="#987062"/><path d="M246,152L241,155L245,143z" fill="#b68775"/><path d="M241,155L241,162L235,157z" fill="#bb8b79"/><path d="M241,155L241,162L241,162z" fill="#987062"/><path d="M247,171L244,168L249,168z" fill="#987062"/><path d="M244,168L247,171L244,175z" fill="#987062"/><path d="M257,175L247,171L249,168z" fill="#c18f7d"/><path d="M247,171L257,175L244,175z" fill="#c08e7c"/><path d="M94,228L92,228L93,226z" fill="#ad8070"/><path d="M92,228L94,228L95,230z" fill="#987062"/><path d="M100,229L94,228L93,226z" fill="#c18f7d"/><path d="M95,230L94,228L99,230z" fill="#987062"/><path d="M94,228L100,229L99,230z" fill="#987062"/><path d="M373,105L378,101L380,105z" fill="#a27868"/><path d="M378,101L373,105L367,96z" fill="#b58675"/><path d="M378,101L367,96L389,86z" fill="#b18372"/><path d="M378,101L397,101L380,105z" fill="#ad8070"/><path d="M397,101L378,101L389,86z" fill="#b08372"/><path d="M372,151L374,149L374,155z" fill="#987062"/><path d="M374,149L372,151L371,148z" fill="#9b7364"/><path d="M358,162L372,151L374,155z" fill="#9d7566"/><path d="M357,148L372,151L358,162z" fill="#bd8c7a"/><path d="M372,151L357,148L371,148z" fill="#c4917f"/><path d="M371,148L362,143L366,139z" fill="#a87d6d"/><path d="M357,148L362,143L371,148z" fill="#c4917f"/><path d="M356,140L357,148L348,149z" fill="#aa7e6e"/><path d="M342,133L356,140L348,149z" fill="#b18373"/><path d="M356,140L342,133L352,131z" fill="#a67b6b"/><path d="M356,140L362,143L357,148z" fill="#a77c6c"/><path d="M366,139L356,140L352,131z" fill="#a67b6b"/><path d="M362,143L356,140L366,139z" fill="#987062"/><path d="M393,86L397,101L389,86z" fill="#a47a6a"/><path d="M393,86L396,87L397,101z" fill="#b28473"/><path d="M396,87L393,86L420,87z" fill="#b78876"/><path d="M393,86L434,86L420,87z" fill="#987062"/><path d="M393,86L389,86L434,86z" fill="#987062"/><path d="M396,87L401,100L397,101z" fill="#b28473"/><path d="M408,141L408,127L415,134z" fill="#a17768"/><path d="M307,218L307,213L313,211z" fill="#987062"/><path d="M313,211L307,213L307,204z" fill="#b88977"/><path d="M307,213L301,211L307,204z" fill="#c4917e"/><path d="M307,213L307,218L303,218z" fill="#987062"/><path d="M301,211L307,213L303,218z" fill="#c3907e"/><path d="M303,185L299,199L291,190z" fill="#9e7566"/><path d="M296,184L303,185L291,190z" fill="#997263"/><path d="M299,199L303,185L309,190z" fill="#af8271"/><path d="M303,185L309,177L309,190z" fill="#b38474"/><path d="M309,177L303,185L302,174z" fill="#9d7465"/><path d="M303,185L295,179L302,174z" fill="#9f7667"/><path d="M295,179L303,185L296,184z" fill="#a27869"/><path d="M322,165L321,166L319,156z" fill="#a87d6d"/><path d="M321,166L322,165L324,166z" fill="#987062"/><path d="M331,153L322,165L319,156z" fill="#c18f7d"/><path d="M324,166L322,165L331,153z" fill="#987062"/><path d="M172,160L170,160L171,157z" fill="#987062"/><path d="M170,160L172,160L177,166z" fill="#9f7667"/><path d="M170,160L177,169L170,176z" fill="#a07768"/><path d="M177,169L170,160L177,166z" fill="#9c7465"/><path d="M166,176L170,160L170,176z" fill="#b88877"/><path d="M150,123L154,123L155,124z" fill="#987062"/><path d="M154,123L150,123L148,119z" fill="#b58675"/><path d="M154,123L162,118L155,124z" fill="#987062"/><path d="M154,123L162,115L162,118z" fill="#c18f7d"/><path d="M154,123L148,119L157,109z" fill="#c08e7c"/><path d="M162,115L154,123L157,109z" fill="#997163"/><path d="M180,134L181,142L178,143z" fill="#bf8e7c"/><path d="M181,142L180,134L185,136z" fill="#c18f7d"/><path d="M181,142L185,136L186,143z" fill="#bd8c7a"/><path d="M186,144L181,142L186,143z" fill="#987062"/><path d="M181,142L186,144L186,150z" fill="#a77c6c"/><path d="M181,153L181,142L186,150z" fill="#b98978"/><path d="M181,142L181,153L178,143z" fill="#b28473"/><path d="M171,137L169,139L165,138z" fill="#987062"/><path d="M169,139L169,141L165,138z" fill="#a4796a"/><path d="M169,141L169,139L171,137z" fill="#b98a78"/><path d="M176,104L177,100L179,104z" fill="#9f7667"/><path d="M176,104L179,104L181,111z" fill="#a97e6e"/><path d="M174,112L176,104L181,111z" fill="#b38574"/><path d="M149,194L146,197L142,192z" fill="#ae8170"/><path d="M146,197L145,205L138,202z" fill="#aa7e6e"/><path d="M142,192L146,197L138,202z" fill="#c3907e"/><path d="M145,205L146,197L149,204z" fill="#9f7666"/><path d="M146,197L149,194L149,204z" fill="#987062"/><path d="M155,204L147,206L149,204z" fill="#a07667"/><path d="M152,212L147,206L155,204z" fill="#c3917e"/><path d="M147,206L152,212L145,211z" fill="#bf8e7c"/><path d="M145,205L147,206L145,211z" fill="#987062"/><path d="M147,206L145,205L149,204z" fill="#987062"/><path d="M187,233L190,237L188,237z" fill="#c2907d"/><path d="M187,233L186,231L187,230z" fill="#987062"/><path d="M193,237L187,233L187,230z" fill="#a97d6d"/><path d="M190,237L187,233L193,237z" fill="#a87d6d"/><path d="M187,233L175,234L186,231z" fill="#a27868"/><path d="M175,234L187,233L188,237z" fill="#bb8b79"/><path d="M184,244L175,234L188,237z" fill="#b48675"/><path d="M175,245L175,234L184,244z" fill="#b48674"/><path d="M175,234L175,245L172,241z" fill="#ba8a78"/><path d="M142,269L144,265L145,270z" fill="#987062"/><path d="M167,214L166,213L170,214z" fill="#987062"/><path d="M167,222L167,214L170,214z" fill="#ae8170"/><path d="M167,214L167,222L166,213z" fill="#987062"/><path d="M194,203L196,201L195,207z" fill="#987062"/><path d="M193,204L194,203L195,207z" fill="#987062"/><path d="M196,201L194,203L185,194z" fill="#b48674"/><path d="M194,203L183,201L185,194z" fill="#b68776"/><path d="M194,203L187,205L183,201z" fill="#987062"/><path d="M194,203L193,204L187,205z" fill="#c4917f"/><path d="M151,276L157,275L152,279z" fill="#c3907e"/><path d="M157,275L157,279L152,279z" fill="#bf8e7c"/><path d="M153,268L157,275L151,276z" fill="#c08e7c"/><path d="M163,270L157,275L153,268z" fill="#c18f7d"/><path d="M158,280L157,275L162,280z" fill="#a27868"/><path d="M158,280L157,275L158,280z" fill="#ad8070"/><path d="M157,279L157,275L158,280z" fill="#987062"/><path d="M162,280L157,275L166,275z" fill="#a07767"/><path d="M157,275L163,270L166,275z" fill="#b18372"/><path d="M225,265L234,259L234,273z" fill="#b58675"/><path d="M234,259L236,253L250,267z" fill="#aa7e6e"/><path d="M244,274L234,259L250,267z" fill="#a57a6a"/><path d="M234,273L234,259L244,274z" fill="#a67b6b"/><path d="M223,246L225,247L222,252z" fill="#c18f7d"/><path d="M225,247L243,242L236,253z" fill="#a37969"/><path d="M243,242L225,247L239,230z" fill="#ac806f"/><path d="M225,247L223,246L239,230z" fill="#c2907e"/><path d="M211,261L219,259L213,270z" fill="#c08e7c"/><path d="M219,259L225,265L213,270z" fill="#987062"/><path d="M227,221L218,217L228,218z" fill="#9a7263"/><path d="M227,221L220,226L218,217z" fill="#ae8170"/><path d="M227,221L228,218L232,222z" fill="#987162"/><path d="M220,226L227,221L232,222z" fill="#af8271"/><path d="M210,221L207,230L200,230z" fill="#a07767"/><path d="M207,230L210,221L209,229z" fill="#bc8c7a"/><path d="M207,230L209,229L214,240z" fill="#b18372"/><path d="M207,230L198,233L200,230z" fill="#987062"/><path d="M198,233L207,230L214,240z" fill="#b68776"/><path d="M190,123L194,123L186,130z" fill="#c3917e"/><path d="M183,130L190,123L186,130z" fill="#987062"/><path d="M183,117L190,123L183,130z" fill="#9b7364"/><path d="M195,117L190,123L183,117z" fill="#9c7465"/><path d="M194,123L190,123L195,117z" fill="#c4917f"/><path d="M257,163L261,162L261,174z" fill="#a07767"/><path d="M257,163L257,175L249,168z" fill="#bf8d7b"/><path d="M257,175L257,163L261,174z" fill="#987062"/><path d="M254,154L252,157L246,152z" fill="#af8171"/><path d="M241,155L252,157L241,162z" fill="#c3917e"/><path d="M252,157L241,155L246,152z" fill="#9e7566"/><path d="M410,95L401,100L396,87z" fill="#b38574"/><path d="M402,129L397,128L396,122z" fill="#bd8c7a"/><path d="M397,128L402,129L397,131z" fill="#a4796a"/><path d="M402,129L408,141L397,131z" fill="#b48674"/><path d="M402,129L408,127L408,141z" fill="#ae8170"/><path d="M169,160L168,159L171,157z" fill="#c2907d"/><path d="M170,160L169,160L171,157z" fill="#c2907d"/><path d="M168,159L169,160L166,176z" fill="#b88877"/><path d="M169,160L170,160L166,176z" fill="#b88877"/><path d="M172,105L174,112L170,108z" fill="#a77c6c"/><path d="M172,105L176,104L174,112z" fill="#a27869"/><path d="M171,104L172,105L170,108z" fill="#987062"/><path d="M172,105L171,104L177,100z" fill="#c18f7d"/><path d="M176,104L172,105L177,100z" fill="#ae8171"/><path d="M186,231L174,234L179,226z" fill="#ac7f6f"/><path d="M175,234L174,234L186,231z" fill="#bd8c7a"/><path d="M179,226L174,234L173,227z" fill="#bb8a79"/><path d="M174,234L172,229L173,227z" fill="#9b7364"/><path d="M172,229L174,234L171,231z" fill="#ab7f6f"/><path d="M171,235L175,234L172,241z" fill="#9a7264"/><path d="M171,235L164,232L171,231z" fill="#bb8b79"/><path d="M171,235L172,241L164,232z" fill="#a87c6c"/><path d="M174,234L171,235L171,231z" fill="#b68775"/><path d="M171,235L174,234L175,234z" fill="#bc8c7a"/><path d="M142,270L142,269L145,270z" fill="#a17768"/><path d="M135,277L142,270L146,285z" fill="#a4796a"/><path d="M136,271L142,270L135,277z" fill="#ba8a78"/><path d="M142,269L142,270L136,271z" fill="#bd8c7a"/><path d="M142,270L151,276L146,285z" fill="#987162"/><path d="M142,270L145,270L151,276z" fill="#a27868"/><path d="M138,247L134,251L131,246z" fill="#a17768"/><path d="M230,254L234,259L225,265z" fill="#bb8a79"/><path d="M230,254L219,259L222,252z" fill="#a77c6c"/><path d="M219,259L230,254L225,265z" fill="#987062"/><path d="M234,259L230,254L236,253z" fill="#c4917f"/><path d="M230,254L225,247L236,253z" fill="#a37869"/><path d="M225,247L230,254L222,252z" fill="#a27869"/><path d="M206,259L210,253L211,261z" fill="#a67b6b"/><path d="M210,253L219,259L211,261z" fill="#af8271"/><path d="M210,253L206,259L201,252z" fill="#ba8a78"/><path d="M219,259L210,253L222,252z" fill="#bb8b79"/><path d="M252,157L249,166L241,162z" fill="#9c7465"/><path d="M244,168L249,166L249,168z" fill="#987062"/><path d="M249,166L244,168L241,162z" fill="#b08272"/><path d="M249,166L257,163L249,168z" fill="#b08372"/><path d="M257,163L258,161L261,162z" fill="#987062"/><path d="M261,162L258,161L257,152z" fill="#9a7264"/><path d="M396,110L396,122L392,109z" fill="#9b7364"/><path d="M396,110L400,114L396,122z" fill="#ad8070"/><path d="M397,101L396,110L392,109z" fill="#a67b6b"/><path d="M400,114L403,117L396,122z" fill="#ae8171"/><path d="M403,117L402,129L396,122z" fill="#bf8e7c"/><path d="M402,129L403,117L408,127z" fill="#a77c6c"/><path d="M406,103L410,95L413,100z" fill="#c5927f"/><path d="M410,95L406,103L401,100z" fill="#ad8170"/><path d="M406,103L403,117L400,114z" fill="#b08372"/><path d="M406,103L413,100L420,112z" fill="#9e7566"/><path d="M403,117L406,103L420,112z" fill="#a3796a"/><path d="M413,100L412,95L417,98z" fill="#a27869"/><path d="M410,95L412,95L413,100z" fill="#c4927f"/><path d="M417,98L412,95L420,87z" fill="#987062"/><path d="M412,95L396,87L420,87z" fill="#b58675"/><path d="M412,95L410,95L396,87z" fill="#a97e6d"/><path d="M127,255L134,251L134,254z" fill="#987062"/><path d="M131,246L127,255L120,251z" fill="#ad8070"/><path d="M134,251L127,255L131,246z" fill="#a47a6a"/><path d="M134,251L140,250L134,254z" fill="#987062"/><path d="M140,250L138,247L142,248z" fill="#b18372"/><path d="M140,250L134,251L138,247z" fill="#b68776"/><path d="M140,250L144,248L145,257z" fill="#a77c6c"/><path d="M140,250L142,248L144,248z" fill="#be8d7b"/><path d="M137,260L140,250L145,257z" fill="#c2907d"/><path d="M140,250L137,260L134,254z" fill="#c4917f"/><path d="M144,265L139,262L145,257z" fill="#bf8e7c"/><path d="M139,262L137,260L145,257z" fill="#c3917e"/><path d="M142,269L139,262L144,265z" fill="#ad8170"/><path d="M139,262L136,271L131,265z" fill="#9c7365"/><path d="M139,262L142,269L136,271z" fill="#af8271"/><path d="M210,249L223,246L222,252z" fill="#bd8c7a"/><path d="M210,253L210,249L222,252z" fill="#b98978"/><path d="M223,246L210,249L214,240z" fill="#ae8171"/><path d="M210,249L210,253L201,252z" fill="#bd8c7a"/><path d="M198,233L210,249L201,252z" fill="#b78876"/><path d="M210,249L198,233L214,240z" fill="#b68776"/><path d="M249,166L254,159L257,163z" fill="#b38574"/><path d="M254,159L249,166L252,157z" fill="#987062"/><path d="M254,159L258,161L257,163z" fill="#a27869"/><path d="M401,100L398,110L397,101z" fill="#bb8b79"/><path d="M398,110L396,110L397,101z" fill="#ba8a78"/><path d="M406,103L398,110L401,100z" fill="#a67b6b"/><path d="M396,110L398,110L400,114z" fill="#9c7465"/><path d="M398,110L406,103L400,114z" fill="#987062"/><path d="M403,117L412,123L408,127z" fill="#aa7e6e"/><path d="M412,123L420,126L415,134z" fill="#987062"/><path d="M408,127L412,123L415,134z" fill="#997163"/><path d="M420,126L412,123L420,112z" fill="#a07768"/><path d="M412,123L403,117L420,112z" fill="#be8d7b"/><path d="M126,259L134,254L131,265z" fill="#bf8e7b"/><path d="M126,259L127,255L134,254z" fill="#b98978"/><path d="M126,259L128,271L118,266z" fill="#a37869"/><path d="M128,271L126,259L131,265z" fill="#af8271"/><path d="M114,257L126,259L118,266z" fill="#ba8a78"/><path d="M126,259L114,257L120,251z" fill="#ba8a78"/><path d="M127,255L126,259L120,251z" fill="#b68776"/><path d="M137,261L139,262L131,265z" fill="#c08f7c"/><path d="M139,262L137,261L137,260z" fill="#b08272"/><path d="M134,254L137,261L131,265z" fill="#b18372"/><path d="M137,260L137,261L134,254z" fill="#af8271"/><path d="M255,157L252,157L254,154z" fill="#987062"/><path d="M255,157L254,159L252,157z" fill="#987062"/><path d="M255,157L254,154L257,152z" fill="#987062"/><path d="M258,161L255,157L257,152z" fill="#c18f7d"/><path d="M254,159L255,157L258,161z" fill="#ba8a78"/></g>
    <rect x="80" y="80" width="700" height="280" filter="url(#crev)" mask="url(#mRight)"/>
  </g>
  </g>
  <g clip-path="url(#cSil)"><rect x="200" y="160" width="320" height="150" filter="url(#speck)" mask="url(#mSpeck)"/></g>
  <g clip-path="url(#cTop)"><rect x="430" y="215" width="350" height="60" filter="url(#speck2)" mask="url(#mRim)"/></g>
<!-- cylinder bentonit -->
  <defs>
    <pattern id="stripes" width="4" height="1.5" patternUnits="userSpaceOnUse">
      <rect width="4" height="1.5" fill="#dedede"/>
      <rect y="0.9" width="4" height="0.6" fill="#b8b8ba"/>
    </pattern>
    <pattern id="redstr" width="4" height="1.5" patternUnits="userSpaceOnUse">
      <rect width="4" height="1.5" fill="#e05866"/>
      <rect y="0.9" width="4" height="0.6" fill="#cf3d4c"/>
    </pattern>
  </defs>
  <path d="M321.5,310 L359.6,308 L359.6,430 Q359.6,432.5 339,432.5 Q318,432.5 318,430 Z" fill="url(#stripes)"/>
  <path d="M329.8,319 L349,319 L348.7,413 Q338,414.5 328,413 Z" fill="url(#redstr)"/>
  <!-- structure slab -->
  <polygon fill="#646466" points="274.5,308.3 294.9,307 294.9,299.2 314.3,297 314.3,289.3 319.3,289.8 350.8,286.6 350.8,284.8 361.2,284.3 365.7,286.6 365.7,291.1 384.3,299.2 392,299.7 397.8,302 397.8,318.7 391,317.8 384.3,318 360,320.3 330,321 317,320.4 307,315.8 294,318.5 280.8,320.5 274.5,318.7"/>
  <polygon fill="#6a6a6c" points="274.5,308.3 294.9,307 294.9,310.5 306,316 294,318.5 280.8,320.5 274.5,318.7"/>
  <polygon fill="#8a8a8c" points="274.5,307.3 294.9,306 294.9,307.2 274.5,308.5"/>
  <polygon fill="#6e6e70" points="294.9,299.2 314.3,297 314.3,310 294.9,310.5"/>
  <polygon fill="#858587" points="294.9,298.4 314.3,296.3 314.3,297.3 294.9,299.4"/>
  <polygon fill="#5e5e60" points="314.3,289.3 319.3,289.8 319.3,308 314.3,309"/>
  <polygon fill="#6c6c6e" points="319.3,290.2 350.8,286.6 350.8,304.2 319.3,307"/>
  <polygon fill="#707072" points="350.8,284.8 361.2,284.3 361.2,304.7 350.8,304.2"/>
  <polygon fill="#5c5c5e" points="361.2,284.3 365.7,286.6 365.7,305.6 361.2,304.7"/>
  <polygon fill="#68686a" points="365.7,291.1 384.3,299.2 384.3,316 365.7,305.6"/>
  <polygon fill="#6e6e70" points="384.3,299.2 392,299.7 391,317.8 384.3,316"/>
  <polygon fill="#5a5a5c" points="392,299.7 397.8,302 397.8,318.7 391,317.8"/>
  <polygon fill="#6a6a6c" points="294.9,310 319.3,307 350.8,304.2 365.7,305.6 384.3,316 384.3,318 360,320.3 330,321 317,320.4 307,315.8"/>
  <ellipse cx="341" cy="315" rx="19.5" ry="5.2" fill="#8c8c8e" opacity="0.55"/>
  <ellipse cx="341" cy="315" rx="16" ry="3.6" fill="none" stroke="#a0a0a2" stroke-width="0.5" opacity="0.7"/>
  <!-- poles -->
  <g stroke="#17907b" stroke-linecap="butt">
    <line x1="292.4" y1="318.6" x2="288" y2="445" stroke-width="1.8"/>
    <line x1="302.8" y1="317.7" x2="299.6" y2="423.4" stroke-width="1.8"/>
    <line x1="313" y1="313" x2="308" y2="500" stroke-width="2.6"/>
    <line x1="350.8" y1="308.7" x2="348.7" y2="423.4" stroke-width="1.8"/>
    <line x1="354" y1="307" x2="352.6" y2="431.5" stroke-width="2"/>
    <line x1="358" y1="305" x2="356" y2="422" stroke-width="1.8"/>
    <line x1="368.4" y1="316.8" x2="367.2" y2="424.6" stroke-width="1.8"/>
    <line x1="379" y1="317.7" x2="378.7" y2="429" stroke-width="1.8"/>
    <line x1="390" y1="318.6" x2="390" y2="423.4" stroke-width="1.8"/>
  </g>
  <!-- leaders -->
  <polyline points="234,325.5 268,325.5 321,353.7" fill="none" stroke="#8c8c94" stroke-width="0.7"/>
  <polyline points="234,437.3 285,437.3 336.5,395.7" fill="none" stroke="#e8424f" stroke-width="0.8"/>
  <polyline points="390.7,366 396.2,430 398.3,460" fill="none" stroke="#3aa89c" stroke-width="0.8" stroke-dasharray="1.2 0.5"/><line x1="398.3" y1="460" x2="469.6" y2="460" stroke="#3aa89c" stroke-width="0.9" opacity="0.8"/>
  <!-- gizmo -->
  <line x1="765.8" y1="499.5" x2="765.8" y2="505.6" stroke="#5b9ef0" stroke-width="1"/>
  <line x1="765.8" y1="505.6" x2="773.3" y2="504.5" stroke="#e06070" stroke-width="0.8"/>
  <circle cx="765.8" cy="497.5" r="2.3" fill="#3b8cf0"/>
  <circle cx="773.3" cy="504.5" r="2.4" fill="#f0354a"/>
  <circle cx="761.8" cy="503.6" r="1.7" fill="#7ed321"/>
  <circle cx="758.5" cy="506.8" r="1.6" fill="#f06a78"/>
  <circle cx="769.9" cy="507.3" r="2" fill="#b4e28a"/>
  <circle cx="765.8" cy="513.7" r="1.6" fill="#2f86f5"/>
</svg>
<div class="txt" style="left:234.5px;top:315.5px;font-size:9px;color:#85858d;-webkit-text-stroke:0.15px #85858d">Bentonit</div>
<div class="txt" style="left:234px;top:427px;font-size:9px;color:#e8404e;-webkit-text-stroke:0.15px #e8404e">Topné těleso</div>
<div class="txt" style="left:399.5px;top:450.5px;font-size:9px;color:#34a496;-webkit-text-stroke:0.15px #34a496">Monitoringový vrt</div>
</div>

<div id="side"></div>
<svg width="14" height="520" viewBox="0 0 14 520" style="position:absolute;left:0;top:0">
  <g fill="#2e2e42">
    <!-- cube -->
    <path d="M6.5 217 L10 218.9 L10 222.3 L6.5 224.2 L3 222.3 L3 218.9 Z"/>
    <path d="M4.5 219.4 L6.5 220.5 L8.5 219.4 M6.5 220.5 V222.6" fill="none" stroke="#e3e3e8" stroke-width="0.6"/>
    <!-- layers -->
    <path d="M6.5 229.8 L10 231.8 L6.5 233.8 L3 231.8 Z"/>
    <path d="M3 233.6 L6.5 235.6 L10 233.6" fill="none" stroke="#2e2e42" stroke-width="0.9"/>
    <!-- link -->
    <g transform="rotate(-45 6.5 246.3)" fill="none" stroke="#2e2e42" stroke-width="0.9">
      <rect x="2.2" y="245" width="4.6" height="2.6" rx="1.3"/>
      <rect x="6.2" y="245" width="4.6" height="2.6" rx="1.3"/>
    </g>
    <!-- clipboard -->
    <rect x="3.4" y="256.8" width="6.2" height="6.2" rx="0.6"/>
    <rect x="5" y="255.9" width="3" height="1.3"/>
    <path d="M4.8 259.8 L6 261 L8.2 258.6" fill="none" stroke="#e3e3e8" stroke-width="0.7"/>
    <!-- camera -->
    <path d="M3 271.2 h1.6 l0.8 -1.3 h2.2 l0.8 1.3 h1.6 v4.9 h-7 z"/>
    <circle cx="6.5" cy="273.5" r="1.3" fill="#e3e3e8"/>
    <circle cx="6.5" cy="273.5" r="0.6"/>
    <!-- list -->
    <rect x="3" y="281.6" width="1" height="1.2"/><rect x="3" y="283.8" width="1" height="1.2"/><rect x="3" y="286.3" width="1" height="1.2"/>
    <rect x="5.6" y="281.2" width="2.2" height="2"/><rect x="6.6" y="282" width="3.4" height="1.6"/>
    <rect x="5.6" y="286" width="2.2" height="2"/><rect x="6.6" y="286.6" width="3.4" height="1.6"/>
    <!-- table -->
    <rect x="3" y="295" width="7" height="1.6"/>
    <rect x="3" y="297.2" width="1.6" height="3.8"/><rect x="5.7" y="297.2" width="1.6" height="3.8"/><rect x="8.4" y="297.2" width="1.6" height="3.8"/>
    <!-- shape -->
    <path d="M6.2 308 L9.8 309.6 L9.6 312.6 L6.8 314.7 L3.3 313 L3.2 309.8 Z"/>
    <circle cx="6.5" cy="311.4" r="1.5" fill="#e3e3e8"/>
    <!-- info -->
    <circle cx="6.5" cy="324.2" r="3.4"/>
    <rect x="6" y="322" width="1" height="2.4" fill="#e3e3e8"/>
    <rect x="6" y="325.2" width="1" height="1" fill="#e3e3e8"/>
    <!-- pyramid -->
    <path d="M6.5 334 L10.3 338.5 L6.5 341 L2.7 338.5 Z"/>
    <path d="M2.9 338.5 H10.1 M6.5 334.5 V340.6 M4.2 336.6 H8.8" fill="none" stroke="#e3e3e8" stroke-width="0.5"/>
  </g>
</svg>

<div id="hdr"></div>
<div id="tb"></div>
<div id="shadow"></div>
<svg width="780" height="38" viewBox="0 0 780 38" style="position:absolute;left:0;top:0">
  <!-- logo -->
  <path d="M9 6 L12.9 8.2 L12.9 12.4 L9 14.6 L5.1 12.4 L5.1 8.2 Z" fill="#0d5ea6"/>
  <path d="M9 8.1 L11.1 9.3 L11.1 11.3 L9 12.5 L6.9 11.3 L6.9 9.3 Z" fill="#fff"/>
  <path d="M10.4 6.9 L13.2 8.6 L11.1 9.6 Z M13.2 10.8 L13.2 12.2 L11.4 11.2 Z" fill="#fff"/>
  <!-- separator -->
  <rect x="76" y="4" width="0.8" height="12" fill="#ececef"/>
  <!-- folder -->
  <path d="M127 8 h2.6 l0.8 0.9 h3.6 v3.7 h-7 z" fill="#3d3d52"/>
  <!-- search -->
  <circle cx="720.7" cy="9.9" r="1.9" fill="none" stroke="#4a4a5c" stroke-width="0.9"/>
  <line x1="722" y1="11.3" x2="724.2" y2="13.2" stroke="#4a4a5c" stroke-width="1"/>
  <!-- help -->
  <circle cx="737.1" cy="10.1" r="3.4" fill="#3f3f55"/>
  <path d="M736 9.2 Q736 8 737.1 8 Q738.3 8 738.2 9.1 Q738.1 9.9 737.2 10.3 V11" fill="none" stroke="#fff" stroke-width="0.8"/>
  <circle cx="737.2" cy="12" r="0.45" fill="#fff"/>
  <!-- grid -->
  <g fill="#4a4a5c">
    <rect x="750" y="7.6" width="1.5" height="1.5"/><rect x="752.2" y="7.6" width="1.5" height="1.5"/><rect x="754.4" y="7.6" width="1.5" height="1.5"/>
    <rect x="750" y="9.8" width="1.5" height="1.5"/><rect x="752.2" y="9.8" width="1.5" height="1.5"/><rect x="754.4" y="9.8" width="1.5" height="1.5"/>
    <rect x="750" y="12" width="1.5" height="1.5"/><rect x="752.2" y="12" width="1.5" height="1.5"/><rect x="754.4" y="12" width="1.5" height="1.5"/>
  </g>
  <!-- user -->
  <circle cx="768.6" cy="8.3" r="1.9" fill="#2e2e40"/>
  <path d="M764.8 13.9 Q764.8 10.8 768.6 10.8 Q772.4 10.8 772.4 13.9 Z" fill="#2e2e40"/>
  <path d="M766.2 11.2 L768.6 12.4 L771 11.2" fill="none" stroke="#fff" stroke-width="0.5"/>

  <!-- toolbar separators -->
  <g fill="#efeff1">
    <rect x="23" y="21.3" width="0.8" height="14.4"/>
    <rect x="87.5" y="21.3" width="0.8" height="14.4"/>
    <rect x="102.3" y="21.3" width="0.8" height="14.4"/>
    <rect x="197" y="21.3" width="0.8" height="14.4"/>
    <rect x="233" y="21.3" width="0.8" height="14.4"/>
    <rect x="296.2" y="21.3" width="0.8" height="14.4"/>
  </g>
  <!-- back arrow -->
  <path d="M9.9 28.3 H5.3 M7.3 26.2 L5.1 28.3 L7.3 30.5" fill="none" stroke="#3a3a4c" stroke-width="0.9"/>
  <!-- orbit -->
  <ellipse cx="31.4" cy="28.9" rx="3.6" ry="1.5" fill="none" stroke="#3a3a4c" stroke-width="0.9"/>
  <path d="M32 26.6 L33.8 27.4 L32 28.2 Z" fill="#3a3a4c"/>
  <!-- carets -->
  <g fill="#3a3a4c">
    <path d="M40 27.6 h3 l-1.5 1.6 z"/>
    <path d="M119.5 27.6 h3 l-1.5 1.6 z"/>
    <path d="M142.4 27.6 h3 l-1.5 1.6 z"/>
    <path d="M164.3 27.6 h3 l-1.5 1.6 z"/>
    <path d="M213.8 27.6 h3 l-1.5 1.6 z"/>
    <path d="M277.4 27.6 h3 l-1.5 1.6 z"/>
  </g>
  <!-- blue select button -->
  <rect x="47.8" y="21.9" width="13" height="13" rx="1" fill="#0f72c0"/>
  <path d="M52.4 25.8 L55.9 29 L54.3 29.2 L55.3 31.2 L54.5 31.5 L53.6 29.6 L52.4 30.6 Z" fill="#fff"/>
  <!-- dotted rect -->
  <rect x="64.2" y="25.8" width="6.3" height="5.8" fill="none" stroke="#7a7a88" stroke-width="0.7" stroke-dasharray="1 0.8"/>
  <!-- frame -->
  <rect x="77.2" y="26" width="5.8" height="5.4" fill="none" stroke="#3a3a4c" stroke-width="0.9"/>
  <g fill="#3a3a4c"><rect x="76.2" y="25" width="1.8" height="1.8"/><rect x="82.1" y="25" width="1.8" height="1.8"/><rect x="76.2" y="30.5" width="1.8" height="1.8"/><rect x="82.1" y="30.5" width="1.8" height="1.8"/></g>
  <!-- icon square diag -->
  <rect x="92" y="25.4" width="6.2" height="6.4" rx="0.8" fill="#2f2f42"/>
  <path d="M93.3 30.6 L97 26.6" stroke="#fff" stroke-width="0.8"/>
  <path d="M95 30.6 L97 30.6 L97 28.6 Z" fill="#d8d8e0"/>
  <!-- measure -->
  <g fill="#3a3a4c"><circle cx="107.3" cy="29.9" r="0.9"/><circle cx="110.3" cy="29.9" r="0.9"/><circle cx="113.4" cy="29.9" r="0.9"/><rect x="109.8" y="26.6" width="1" height="3"/></g>
  <!-- ellipse -->
  <ellipse cx="132.9" cy="28.6" rx="3.6" ry="2.8" fill="none" stroke="#3a3a4c" stroke-width="0.8"/>
  <!-- X -->
  <path d="M153.3 26.4 L158.3 31.2 M158.3 26.4 L153.3 31.2" stroke="#4a4a5c" stroke-width="0.9"/>
  <!-- camera -->
  <path d="M173.3 27.2 h1.6 l0.7 -1 h2.4 l0.7 1 h1.4 v4.3 h-6.8 z" fill="#2f2f42"/>
  <circle cx="176.7" cy="29.3" r="1.3" fill="#fff"/>
  <circle cx="176.7" cy="29.3" r="0.7" fill="#2f2f42"/>
  <!-- clipboard -->
  <rect x="186.6" y="26.3" width="6.3" height="5.4" rx="0.6" fill="#2f2f42"/>
  <rect x="187.6" y="25.5" width="2" height="1.2" fill="#2f2f42"/>
  <path d="M188.2 29 L189.4 30.2 L191.6 27.8" fill="none" stroke="#fff" stroke-width="0.7"/>
  <!-- cube -->
  <path d="M204.8 25.3 L208.4 27.2 L208.4 30.8 L204.8 32.6 L201.1 30.8 L201.1 27.2 Z M201.1 27.2 L204.8 29.1 L208.4 27.2 M204.8 29.1 V32.6" fill="none" stroke="#3a3a4c" stroke-width="0.8"/>
  <!-- shield cube -->
  <path d="M225.4 25.4 L229 26.5 L229 30.2 L225.4 32.3 L221.9 30.2 L221.9 26.5 Z M221.9 26.5 L225.4 27.8 L229 26.5 M225.4 27.8 V30" fill="none" stroke="#3a3a4c" stroke-width="0.8"/>
  <!-- layered icon -->
  <rect x="236.6" y="25.3" width="4.8" height="4.8" fill="none" stroke="#4a4a5c" stroke-width="0.9"/>
  <rect x="238.8" y="27.4" width="4.8" height="4.6" fill="#6a6a78" stroke="#4a4a5c" stroke-width="0.8"/>
  <!-- bag -->
  <path d="M249.8 32 V27.6 Q249.8 25.3 251.8 25.3 H254.8 Q256.8 25.3 256.8 27.6 V32 Z" fill="none" stroke="#4a4a5c" stroke-width="0.8"/>
  <path d="M251.2 26.8 H255.4" stroke="#4a4a5c" stroke-width="0.6"/>
  <!-- eye button -->
  <rect x="261.8" y="21.9" width="13.1" height="13" rx="1" fill="#0f72c0"/>
  <path d="M264.4 28.4 Q268.3 24.3 272.2 28.4 Q268.3 32.5 264.4 28.4 Z" fill="#fff"/>
  <circle cx="268.3" cy="28.4" r="1.6" fill="#0f72c0"/>
  <circle cx="268.3" cy="28.4" r="0.8" fill="#fff"/>
  <!-- storage icon -->
  <rect x="286" y="25.3" width="6.6" height="6.5" rx="1" fill="#3a3a4c"/>
  <rect x="286.8" y="27" width="5" height="1.5" fill="#d8d8de"/>
  <rect x="286.8" y="29" width="5" height="0.6" fill="#9a9aa6"/>
  <!-- reset model button -->
  <rect x="339.2" y="21.9" width="12.8" height="13" rx="1" fill="#0f72c0"/>
  <path d="M345.6 32.2 L343.4 29.6 Q342.2 28 342.8 26.6 Q343.6 25.1 345.6 25.1 Q347.6 25.1 348.4 26.6 Q349 28 347.8 29.6 Z" fill="#fff"/>
  <path d="M344.7 27.3 Q344.7 26.4 345.6 26.4 Q346.5 26.4 346.5 27.2 Q346.5 27.8 345.7 28.1 V28.6" fill="none" stroke="#0f72c0" stroke-width="0.55"/>
  <!-- gear -->
  <circle cx="361.2" cy="28.5" r="2.6" fill="none" stroke="#1f1f2e" stroke-width="1.6" stroke-dasharray="1.1 0.55"/>
  <circle cx="361.2" cy="28.5" r="2.2" fill="#1f1f2e"/>
  <circle cx="361.2" cy="28.5" r="0.9" fill="#fff"/>
  <!-- fullscreen -->
  <path d="M374.4 27.4 V26 H375.8 M378.6 26 H380 V27.4 M380 29.8 V31.2 H378.6 M375.8 31.2 H374.4 V29.8" fill="none" stroke="#3a3a4c" stroke-width="0.8"/>
</svg>
<div class="txt" style="left:16.1px;top:6.3px;font-size:8.5px;font-weight:bold;color:#2c2c3a;transform:scaleX(0.85);transform-origin:0 0">Trimble</div>
<div class="txt" style="left:43.7px;top:6.3px;font-size:8.5px;color:#55555f;transform:scaleX(0.89);transform-origin:0 0">Connect</div>
<div class="txt" style="left:81px;top:7.8px;font-size:5.6px;color:#6c6c78;letter-spacing:-0.5px">CVUT_URL_Josef</div>
<div class="txt" style="left:11.1px;top:25.9px;font-size:4.9px;font-weight:bold;color:#3a3a4c;letter-spacing:-0.05px">Zpět</div>
<div class="txt" style="left:299px;top:26.4px;font-size:5.3px;font-weight:bold;color:#2a78c6;letter-spacing:-0.36px">Resetovat model</div>
</body></html>
